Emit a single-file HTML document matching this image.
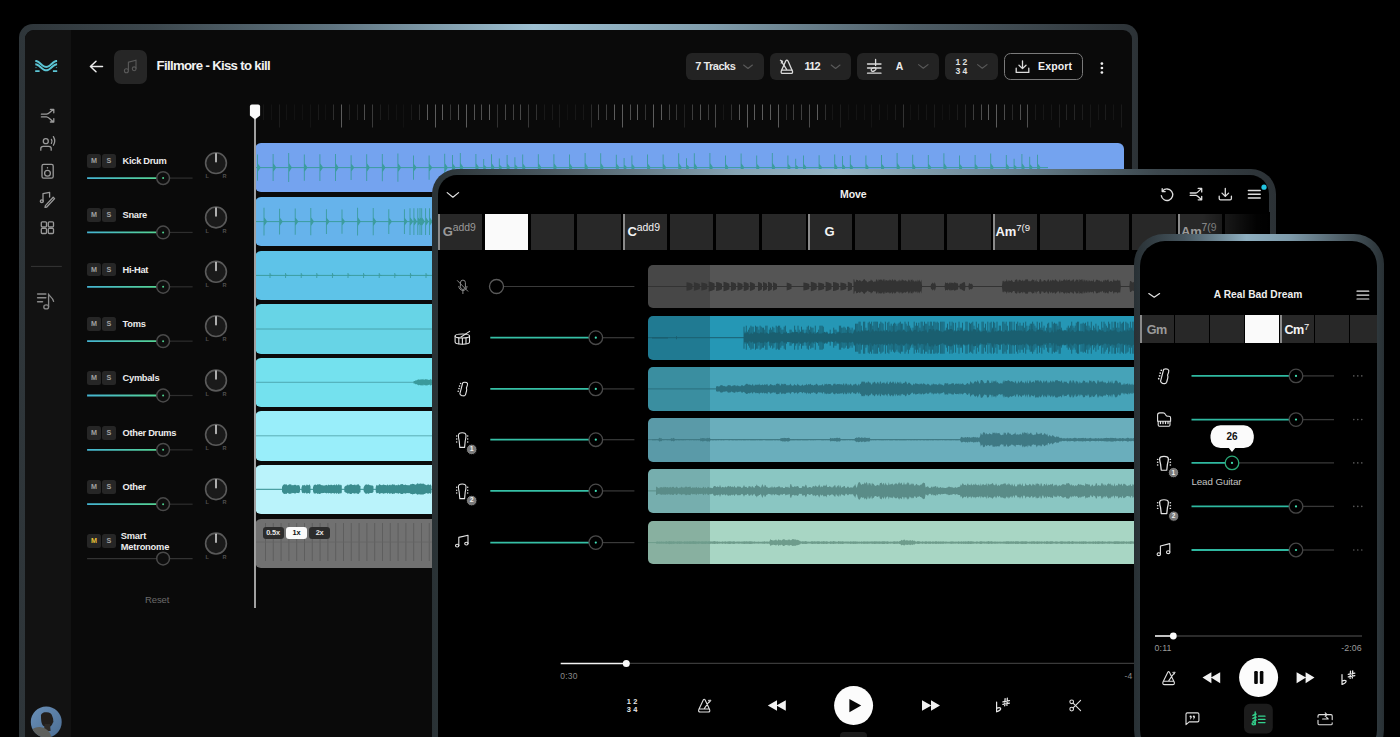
<!DOCTYPE html><html><head><meta charset="utf-8"><style>
*{margin:0;padding:0;box-sizing:border-box}
html,body{width:1400px;height:737px;overflow:hidden;background:#000;font-family:"Liberation Sans",sans-serif}
.a{position:absolute}
svg.s{position:absolute;left:0;top:0;overflow:visible}
</style></head><body>
<div class="a" style="left:19px;top:24px;width:1119px;height:760px;border-radius:14px;background:linear-gradient(90deg,#2e3539 0%,#3c474d 12%,#5f7480 28%,#9dc0d2 46%,#7f9cab 62%,#4d5c65 80%,#2c3236 100%)"></div>
<div class="a" style="left:25px;top:30px;width:1106.5px;height:760px;border-radius:9px;background:#0a0a0a"></div>
<div class="a" style="left:25px;top:30px;width:46px;height:760px;border-top-left-radius:9px;background:#121212"></div>
<svg class="s" width="1400" height="737" ><g fill="none" stroke="#5cc6d6" stroke-width="2" stroke-linecap="butt">
<path d="M35.30,60.90 L35.80,60.93 L36.29,61.02 L36.79,61.17 L37.28,61.38 L37.78,61.63 L38.27,61.94 L38.77,62.28 L39.26,62.65 L39.76,63.05 L40.25,63.47 L40.75,63.90 L41.25,64.33 L41.74,64.75 L42.24,65.15 L42.73,65.52 L43.23,65.86 L43.72,66.17 L44.22,66.42 L44.71,66.63 L45.21,66.78 L45.70,66.87 L46.20,66.90 L46.70,66.87 L47.19,66.78 L47.69,66.63 L48.18,66.42 L48.68,66.17 L49.17,65.86 L49.67,65.52 L50.16,65.15 L50.66,64.75 L51.15,64.33 L51.65,63.90 L52.15,63.47 L52.64,63.05 L53.14,62.65 L53.63,62.28 L54.13,61.94 L54.62,61.63 L55.12,61.38 L55.61,61.17 L56.11,61.02 L56.60,60.93 L57.10,60.90"/>
<path d="M35.30,64.30 L35.80,64.33 L36.29,64.42 L36.79,64.57 L37.28,64.78 L37.78,65.03 L38.27,65.34 L38.77,65.68 L39.26,66.05 L39.76,66.45 L40.25,66.87 L40.75,67.30 L41.25,67.73 L41.74,68.15 L42.24,68.55 L42.73,68.92 L43.23,69.26 L43.72,69.57 L44.22,69.82 L44.71,70.03 L45.21,70.18 L45.70,70.27 L46.20,70.30 L46.70,70.27 L47.19,70.18 L47.69,70.03 L48.18,69.82 L48.68,69.57 L49.17,69.26 L49.67,68.92 L50.16,68.55 L50.66,68.15 L51.15,67.73 L51.65,67.30 L52.15,66.87 L52.64,66.45 L53.14,66.05 L53.63,65.68 L54.13,65.34 L54.62,65.03 L55.12,64.78 L55.61,64.57 L56.11,64.42 L56.60,64.33 L57.10,64.30"/>
<path d="M35.2,71.2 H39.6 M52.9,71.2 H57.2" stroke-width="1.7"/>
<path d="M35.4,67.6 H36.6 M55.9,67.6 H57.1" stroke-width="1" stroke="#3d8c98"/>
</g>
<g fill="none" stroke="#9a9a9a" stroke-width="1.3" stroke-linecap="round" stroke-linejoin="round">
<path d="M41.4,114.2 H46.5 C49,114.2 50.5,111 53.6,109.4 M50.4,109.4 H53.8 V112.8"/>
<path d="M41.4,116.9 H46.5 C49,116.9 50.5,120.2 53.6,122 M50.4,122 H53.8 V118.6"/>
<circle cx="45.8" cy="141.2" r="2.5"/>
<path d="M40.8,150.2 V148.6 C40.8,147.3 41.8,146.4 43.2,146.4 H48.8 C50.2,146.4 51.2,147.3 51.2,148.6 V150.2"/>
<path d="M51.4,139.4 C52.2,140.6 52.2,142.2 51.4,143.4"/>
<path d="M53.4,136.6 C55,139.2 55,142.6 53.4,145.2"/>
<rect x="42" y="164.3" width="11.2" height="13.8" rx="1.6"/>
<circle cx="47.5" cy="173.2" r="2.9"/>
<path d="M47.5,167.6 V167.9"/>
<path d="M43,201 V193.6 L49.6,192.4 V197"/>
<ellipse cx="41.8" cy="201.2" rx="1.5" ry="1.3"/>
<path d="M45.4,205.6 L53.2,197.2 L54.6,198.6 L46.8,207 L45,207.4 Z"/>
<rect x="41.3" y="221.8" width="5.2" height="5.2" rx="1"/>
<rect x="48.3" y="221.8" width="5.2" height="5.2" rx="1"/>
<rect x="41.3" y="228.3" width="5.2" height="5.2" rx="1"/>
<rect x="48.3" y="228.3" width="5.2" height="5.2" rx="1"/>
</g>
<path d="M31,266.4 H61.8" stroke="#363636" stroke-width="1"/>
<g fill="none" stroke="#8a8a8a" stroke-width="1.5" stroke-linecap="round">
<path d="M37.6,293.9 H45.8 M37.6,297.8 H45.8 M37.6,301.7 H42.5"/>
<path d="M48.6,306.6 V294.5 C50.5,296.5 53,298.5 53.6,301.3" stroke-width="1.3"/>
<ellipse cx="46.2" cy="306.9" rx="2.4" ry="2" stroke-width="1.3"/>
</g></svg>
<svg class="s" width="1400" height="737" ><defs><clipPath id="avc"><circle cx="46.25" cy="722" r="15.45"/></clipPath>
<linearGradient id="avg" x1="0" y1="0" x2="1" y2="1"><stop offset="0" stop-color="#6a90b8"/><stop offset="1" stop-color="#4a6c92"/></linearGradient></defs>
<g clip-path="url(#avc)"><rect x="30" y="706" width="33" height="33" fill="url(#avg)"/>
<path d="M41,716.5 C40.6,713.6 43,712 46.2,712.2 C49.4,712 51.8,713.6 52.2,716 C52.8,717.6 53.4,719 53.2,720.4 C53.6,721.4 53.4,722.2 52.8,722.8 C52.4,724.6 51.2,726.4 49.4,727 C47.4,727.4 45,727 43.6,726 C41.8,724.6 41,722 41,716.5 Z" fill="#221e1b"/>
<path d="M44.6,724 H50 L50.6,731 H44 Z" fill="#2e2a26"/>
<path d="M32,730 C34,727.6 37.4,726.8 41,727.2 C44,727.6 46.6,729 48.4,731 C50,732.8 51,735 51.4,738 H32 Z" fill="#5e605d"/>
</g></svg>
<svg class="s" width="1400" height="737" ><g fill="none" stroke="#ececec" stroke-width="1.5" stroke-linecap="round" stroke-linejoin="round">
<path d="M90.4,66.5 H102.5 M96,61.2 L90.4,66.5 L96,71.8"/></g></svg>
<div class="a" style="left:113.9px;top:50px;width:32.8px;height:33.6px;border-radius:7px;background:#262626"></div>
<svg class="s" width="1400" height="737" ><g fill="none" stroke="#5a5a5a" stroke-width="1.1" stroke-linecap="round">
<path d="M128.4,70 V62.2 L136,60.2 V68.3"/><circle cx="126.4" cy="70.8" r="2"/><circle cx="134.2" cy="68.8" r="1.9"/></g></svg>
<div class="a" style="left:156.6px;top:58.3px;white-space:nowrap;font-size:13.2px;font-weight:bold;color:#f2f2f2;letter-spacing:-0.68px">Fillmore - Kiss to kill</div>
<div class="a" style="left:686px;top:52.6px;width:78px;height:27.8px;border-radius:6px;background:#232323"></div>
<div class="a" style="left:770px;top:52.6px;width:81px;height:27.8px;border-radius:6px;background:#232323"></div>
<div class="a" style="left:857px;top:52.6px;width:81.5px;height:27.8px;border-radius:6px;background:#232323"></div>
<div class="a" style="left:945px;top:52.6px;width:52.5px;height:27.8px;border-radius:6px;background:#232323"></div>
<div class="a" style="left:1004.1px;top:52.9px;width:79.3px;height:27.2px;border-radius:6.5px;border:1.4px solid #7a7a7a"></div>
<div class="a" style="left:695.3px;top:60.2px;white-space:nowrap;font-size:11px;font-weight:bold;color:#e8e8e8;letter-spacing:-0.5px">7 Tracks</div>
<div class="a" style="left:804.6px;top:60.2px;white-space:nowrap;font-size:11px;font-weight:bold;color:#ececec;letter-spacing:-0.9px">112</div>
<div class="a" style="left:895.8px;top:60.6px;white-space:nowrap;font-size:10.4px;font-weight:bold;color:#ececec">A</div>
<div class="a" style="left:1038px;top:60.4px;white-space:nowrap;font-size:10.5px;font-weight:bold;color:#f2f2f2;letter-spacing:0.15px">Export</div>
<div class="a" style="left:955.6px;top:58.2px;white-space:nowrap;font-size:8.6px;font-weight:bold;color:#e0e0e0;line-height:8px;letter-spacing:-0.1px">1 2</div>
<div class="a" style="left:955.6px;top:66.8px;white-space:nowrap;font-size:8.6px;font-weight:bold;color:#e0e0e0;line-height:8px;letter-spacing:-0.1px">3 4</div>
<svg class="s" width="1400" height="737" ><g fill="none" stroke="#5a5a5a" stroke-width="1.1" stroke-linecap="round" stroke-linejoin="round">
<path d="M743.6,65 L748,68.5 L752.4,65"/><path d="M831.2,65 L835.6,68.5 L840,65"/>
<path d="M918.6,64.6 L923.3,68.3 L928,64.6"/><path d="M977.6,64.6 L982.3,68.3 L987,64.6"/></g>
<g fill="none" stroke="#dcdcdc" stroke-width="1.3" stroke-linecap="round" stroke-linejoin="round">
<path d="M781.3,71 L785.7,61 Q786.85,59.2 788,61 L792.4,71 Q793.2,73.4 790.8,73.4 H782.9 Q780.5,73.4 781.3,71 Z"/><path d="M781.8,70.2 H791.9"/>
<path d="M786.6,69.4 L781.4,61.4"/><path d="M780.4,60.2 L782.6,61.2 L781.2,63" stroke-width="1.2"/>
<path d="M867.5,64 H881 M867.5,68 H881 M867.5,73.2 H881 M875.6,59.4 V65.6"/>
<path d="M1016.2,68.2 V72.4 H1028.8 V68.2 M1022.5,60.8 V68.4 M1019,65.3 L1022.5,68.6 L1026,65.3"/>
</g>
<ellipse cx="873.6" cy="69.4" rx="2.5" ry="1.6" transform="rotate(-25 873.6 69.4)" fill="none" stroke="#dcdcdc" stroke-width="1.2"/>
<g fill="#f0f0f0"><circle cx="1101.9" cy="63.6" r="1.35"/><circle cx="1101.9" cy="68" r="1.35"/><circle cx="1101.9" cy="72.5" r="1.35"/></g></svg>
<svg class="s" width="1400" height="737" ><g stroke-width="1" fill="none"><path d="M263.5,104.5 V120" stroke="#161616"/><path d="M271.5,104.5 V120" stroke="#131313"/><path d="M279.5,104.5 V127.5" stroke="#1c1c1c"/><path d="M286.5,104.5 V120" stroke="#141414"/><path d="M294.5,104.5 V120" stroke="#121212"/><path d="M302.5,104.5 V120" stroke="#121212"/><path d="M310.5,104.5 V127.5" stroke="#141414"/><path d="M318.5,104.5 V120" stroke="#1a1a1a"/><path d="M325.5,104.5 V120" stroke="#121212"/><path d="M333.5,104.5 V120" stroke="#2d2d2d"/><path d="M341.5,104.5 V127.5" stroke="#5c5c5c"/><path d="M349.5,104.5 V120" stroke="#222222"/><path d="M357.5,104.5 V120" stroke="#202020"/><path d="M364.5,104.5 V120" stroke="#4c4c4c"/><path d="M372.5,104.5 V127.5" stroke="#3a3a3a"/><path d="M380.5,104.5 V120" stroke="#1c1c1c"/><path d="M388.5,104.5 V120" stroke="#171717"/><path d="M396.5,104.5 V120" stroke="#131313"/><path d="M403.5,104.5 V127.5" stroke="#121212"/><path d="M411.5,104.5 V120" stroke="#191919"/><path d="M419.5,104.5 V120" stroke="#2a2a2a"/><path d="M427.5,104.5 V120" stroke="#5c5c5c"/><path d="M435.5,104.5 V127.5" stroke="#5c5c5c"/><path d="M442.5,104.5 V120" stroke="#5c5c5c"/><path d="M450.5,104.5 V120" stroke="#343434"/><path d="M458.5,104.5 V120" stroke="#565656"/><path d="M466.5,104.5 V127.5" stroke="#5c5c5c"/><path d="M474.5,104.5 V120" stroke="#525252"/><path d="M481.5,104.5 V120" stroke="#4d4d4d"/><path d="M489.5,104.5 V120" stroke="#5c5c5c"/><path d="M497.5,104.5 V127.5" stroke="#323232"/><path d="M505.5,104.5 V120" stroke="#464646"/><path d="M513.5,104.5 V120" stroke="#404040"/><path d="M520.5,104.5 V120" stroke="#484848"/><path d="M528.5,104.5 V127.5" stroke="#383838"/><path d="M536.5,104.5 V120" stroke="#313131"/><path d="M544.5,104.5 V120" stroke="#181818"/><path d="M552.5,104.5 V120" stroke="#1a1a1a"/><path d="M559.5,104.5 V127.5" stroke="#1a1a1a"/><path d="M567.5,104.5 V120" stroke="#121212"/><path d="M575.5,104.5 V120" stroke="#171717"/><path d="M583.5,104.5 V120" stroke="#171717"/><path d="M591.5,104.5 V127.5" stroke="#2a2a2a"/><path d="M598.5,104.5 V120" stroke="#464646"/><path d="M606.5,104.5 V120" stroke="#3d3d3d"/><path d="M614.5,104.5 V120" stroke="#5c5c5c"/><path d="M622.5,104.5 V127.5" stroke="#5c5c5c"/><path d="M630.5,104.5 V120" stroke="#4d4d4d"/><path d="M637.5,104.5 V120" stroke="#5c5c5c"/><path d="M645.5,104.5 V120" stroke="#333333"/><path d="M653.5,104.5 V127.5" stroke="#5c5c5c"/><path d="M661.5,104.5 V120" stroke="#5b5b5b"/><path d="M669.5,104.5 V120" stroke="#404040"/><path d="M676.5,104.5 V120" stroke="#363636"/><path d="M684.5,104.5 V127.5" stroke="#202020"/><path d="M692.5,104.5 V120" stroke="#3c3c3c"/><path d="M700.5,104.5 V120" stroke="#515151"/><path d="M708.5,104.5 V120" stroke="#3b3b3b"/><path d="M715.5,104.5 V127.5" stroke="#494949"/><path d="M723.5,104.5 V120" stroke="#171717"/><path d="M731.5,104.5 V120" stroke="#303030"/><path d="M739.5,104.5 V120" stroke="#565656"/><path d="M747.5,104.5 V127.5" stroke="#5c5c5c"/><path d="M754.5,104.5 V120" stroke="#5c5c5c"/><path d="M762.5,104.5 V120" stroke="#5c5c5c"/><path d="M770.5,104.5 V120" stroke="#5b5b5b"/><path d="M778.5,104.5 V127.5" stroke="#5c5c5c"/><path d="M786.5,104.5 V120" stroke="#2d2d2d"/><path d="M793.5,104.5 V120" stroke="#3c3c3c"/><path d="M801.5,104.5 V120" stroke="#3f3f3f"/><path d="M809.5,104.5 V127.5" stroke="#4b4b4b"/><path d="M817.5,104.5 V120" stroke="#5c5c5c"/><path d="M825.5,104.5 V120" stroke="#2e2e2e"/><path d="M832.5,104.5 V120" stroke="#161616"/><path d="M840.5,104.5 V127.5" stroke="#1c1c1c"/><path d="M848.5,104.5 V120" stroke="#121212"/><path d="M856.5,104.5 V120" stroke="#141414"/><path d="M864.5,104.5 V120" stroke="#131313"/><path d="M871.5,104.5 V127.5" stroke="#141414"/><path d="M879.5,104.5 V120" stroke="#161616"/><path d="M887.5,104.5 V120" stroke="#121212"/><path d="M895.5,104.5 V120" stroke="#1b1b1b"/><path d="M903.5,104.5 V127.5" stroke="#323232"/><path d="M910.5,104.5 V120" stroke="#131313"/><path d="M918.5,104.5 V120" stroke="#161616"/><path d="M926.5,104.5 V120" stroke="#161616"/><path d="M934.5,104.5 V127.5" stroke="#1a1a1a"/><path d="M942.5,104.5 V120" stroke="#121212"/><path d="M949.5,104.5 V120" stroke="#121212"/><path d="M957.5,104.5 V120" stroke="#1b1b1b"/><path d="M965.5,104.5 V127.5" stroke="#252525"/><path d="M973.5,104.5 V120" stroke="#3c3c3c"/><path d="M981.5,104.5 V120" stroke="#4c4c4c"/><path d="M988.5,104.5 V120" stroke="#5c5c5c"/><path d="M996.5,104.5 V127.5" stroke="#5c5c5c"/><path d="M1004.5,104.5 V120" stroke="#4b4b4b"/><path d="M1012.5,104.5 V120" stroke="#272727"/><path d="M1020.5,104.5 V120" stroke="#4e4e4e"/><path d="M1027.5,104.5 V127.5" stroke="#505050"/><path d="M1035.5,104.5 V120" stroke="#1a1a1a"/><path d="M1043.5,104.5 V120" stroke="#171717"/><path d="M1051.5,104.5 V120" stroke="#171717"/><path d="M1059.5,104.5 V127.5" stroke="#1e1e1e"/><path d="M1066.5,104.5 V120" stroke="#242424"/><path d="M1074.5,104.5 V120" stroke="#252525"/><path d="M1082.5,104.5 V120" stroke="#1d1d1d"/><path d="M1090.5,104.5 V127.5" stroke="#171717"/><path d="M1098.5,104.5 V120" stroke="#161616"/><path d="M1105.5,104.5 V120" stroke="#1c1c1c"/><path d="M1113.5,104.5 V120" stroke="#151515"/><path d="M1121.5,104.5 V127.5" stroke="#1a1a1a"/></g></svg>
<div class="a" style="left:255px;top:142.8px;width:869px;height:49.5px;border-radius:6px;background:#74a3ef"></div>
<div class="a" style="left:255px;top:196.8px;width:869px;height:49.5px;border-radius:6px;background:#66b3eb"></div>
<div class="a" style="left:255px;top:250.6px;width:869px;height:49.5px;border-radius:6px;background:#5ec3e8"></div>
<div class="a" style="left:255px;top:304.2px;width:869px;height:49.5px;border-radius:6px;background:#67d4e6"></div>
<div class="a" style="left:255px;top:357.5px;width:869px;height:49.5px;border-radius:6px;background:#74e1ee"></div>
<div class="a" style="left:255px;top:411px;width:869px;height:49.5px;border-radius:6px;background:#99eefa"></div>
<div class="a" style="left:255px;top:464.5px;width:869px;height:49.5px;border-radius:6px;background:#baf3fb"></div>
<div class="a" style="left:255px;top:518.5px;width:869px;height:49.5px;border-radius:6px;background:#717171"></div>
<svg class="s" width="1400" height="737" ><path d="M256,167.60000000000002 H1048" stroke="#3c9c9e" stroke-width="1"/><path d="M257.05,154.4 H257.95 V163.7 L260.7,167.60000000000002 L257.95,171.5 V180.8 H257.05 ZM272.65,154.1 H273.55 V163.6 L276.3,167.60000000000002 L273.55,171.6 V181.1 H272.65 ZM288.25,153.1 H289.15 V163.3 L291.9,167.60000000000002 L289.15,171.9 V182.1 H288.25 ZM303.85,154.4 H304.75 V163.6 L307.5,167.60000000000002 L304.75,171.6 V180.8 H303.85 ZM319.45,154.3 H320.35 V163.6 L323.1,167.60000000000002 L320.35,171.6 V180.9 H319.45 ZM335.05,154.1 H335.95 V163.5 L338.7,167.60000000000002 L335.95,171.7 V181.1 H335.05 ZM350.65,155.2 H351.55 V163.9 L354.3,167.60000000000002 L351.55,171.3 V180.0 H350.65 ZM366.25,154.3 H367.15 V163.6 L369.9,167.60000000000002 L367.15,171.6 V180.9 H366.25 ZM381.85,153.9 H382.75 V163.5 L385.5,167.60000000000002 L382.75,171.7 V181.3 H381.85 ZM397.45,153.5 H398.35 V163.4 L401.1,167.60000000000002 L398.35,171.8 V181.7 H397.45 ZM413.05,155.4 H413.95 V164.0 L416.7,167.60000000000002 L413.95,171.2 V179.8 H413.05 ZM428.65,155.4 H429.55 V164.0 L432.3,167.60000000000002 L429.55,171.2 V179.8 H428.65 ZM444.25,153.8 H445.15 V163.4 L447.9,167.60000000000002 L445.15,171.8 V181.4 H444.25 ZM452.05,155.1 H452.95 V163.8 L455.7,167.60000000000002 L452.95,171.4 V180.1 H452.05 ZM459.85,153.0 H460.75 V163.2 L463.5,167.60000000000002 L460.75,172.0 V182.2 H459.85 ZM475.45,154.0 H476.35 V163.5 L479.1,167.60000000000002 L476.35,171.7 V181.2 H475.45 ZM483.25,159.1 H484.15 V165.1 L486.9,167.60000000000002 L484.15,170.1 V176.1 H483.25 ZM491.05,154.2 H491.95 V163.6 L494.7,167.60000000000002 L491.95,171.6 V181.0 H491.05 ZM498.85,158.4 H499.75 V164.8 L502.5,167.60000000000002 L499.75,170.4 V176.8 H498.85 ZM506.65,155.0 H507.55 V163.8 L510.3,167.60000000000002 L507.55,171.4 V180.2 H506.65 ZM514.45,157.3 H515.35 V164.5 L518.1,167.60000000000002 L515.35,170.7 V177.9 H514.45 ZM522.25,154.5 H523.15 V163.7 L525.9,167.60000000000002 L523.15,171.5 V180.7 H522.25 ZM537.85,154.2 H538.75 V163.6 L541.5,167.60000000000002 L538.75,171.6 V181.0 H537.85 ZM553.45,154.3 H554.35 V163.6 L557.1,167.60000000000002 L554.35,171.6 V180.9 H553.45 ZM569.05,154.4 H569.95 V163.6 L572.7,167.60000000000002 L569.95,171.6 V180.8 H569.05 ZM584.65,152.9 H585.55 V163.2 L588.3,167.60000000000002 L585.55,172.0 V182.3 H584.65 ZM600.25,153.3 H601.15 V163.3 L603.9,167.60000000000002 L601.15,171.9 V181.9 H600.25 ZM615.85,154.8 H616.75 V163.8 L619.5,167.60000000000002 L616.75,171.4 V180.4 H615.85 ZM623.65,158.0 H624.55 V164.7 L627.3,167.60000000000002 L624.55,170.5 V177.2 H623.65 ZM631.45,155.5 H632.35 V164.0 L635.1,167.60000000000002 L632.35,171.2 V179.7 H631.45 ZM647.05,154.6 H647.95 V163.7 L650.7,167.60000000000002 L647.95,171.5 V180.6 H647.05 ZM662.65,154.6 H663.55 V163.7 L666.3,167.60000000000002 L663.55,171.5 V180.6 H662.65 ZM678.25,153.3 H679.15 V163.3 L681.9,167.60000000000002 L679.15,171.9 V181.9 H678.25 ZM686.05,158.3 H686.95 V164.8 L689.7,167.60000000000002 L686.95,170.4 V176.9 H686.05 ZM693.85,153.2 H694.75 V163.3 L697.5,167.60000000000002 L694.75,171.9 V182.0 H693.85 ZM709.45,153.0 H710.35 V163.2 L713.1,167.60000000000002 L710.35,172.0 V182.2 H709.45 ZM725.05,155.5 H725.95 V164.0 L728.7,167.60000000000002 L725.95,171.2 V179.7 H725.05 ZM740.65,153.5 H741.55 V163.4 L744.3,167.60000000000002 L741.55,171.8 V181.7 H740.65 ZM756.25,155.5 H757.15 V164.0 L759.9,167.60000000000002 L757.15,171.2 V179.7 H756.25 ZM771.85,153.0 H772.75 V163.2 L775.5,167.60000000000002 L772.75,172.0 V182.2 H771.85 ZM787.45,155.4 H788.35 V163.9 L791.1,167.60000000000002 L788.35,171.3 V179.8 H787.45 ZM795.25,158.8 H796.15 V165.0 L798.9,167.60000000000002 L796.15,170.2 V176.4 H795.25 ZM803.05,155.5 H803.95 V164.0 L806.7,167.60000000000002 L803.95,171.2 V179.7 H803.05 ZM818.65,155.2 H819.55 V163.9 L822.3,167.60000000000002 L819.55,171.3 V180.0 H818.65 ZM834.25,154.4 H835.15 V163.7 L837.9,167.60000000000002 L835.15,171.5 V180.8 H834.25 ZM842.05,156.1 H842.95 V164.2 L845.7,167.60000000000002 L842.95,171.0 V179.1 H842.05 ZM849.85,155.3 H850.75 V163.9 L853.5,167.60000000000002 L850.75,171.3 V179.9 H849.85 ZM865.45,155.4 H866.35 V163.9 L869.1,167.60000000000002 L866.35,171.3 V179.8 H865.45 ZM881.05,155.1 H881.95 V163.9 L884.7,167.60000000000002 L881.95,171.3 V180.1 H881.05 ZM896.65,153.0 H897.55 V163.2 L900.3,167.60000000000002 L897.55,172.0 V182.2 H896.65 ZM912.25,154.8 H913.15 V163.8 L915.9,167.60000000000002 L913.15,171.4 V180.4 H912.25 ZM927.85,155.1 H928.75 V163.9 L931.5,167.60000000000002 L928.75,171.3 V180.1 H927.85 ZM943.45,153.3 H944.35 V163.3 L947.1,167.60000000000002 L944.35,171.9 V181.9 H943.45 ZM959.05,155.4 H959.95 V163.9 L962.7,167.60000000000002 L959.95,171.3 V179.8 H959.05 ZM974.65,155.1 H975.55 V163.9 L978.3,167.60000000000002 L975.55,171.3 V180.1 H974.65 ZM990.25,153.5 H991.15 V163.4 L993.9,167.60000000000002 L991.15,171.8 V181.7 H990.25 ZM1005.85,154.9 H1006.75 V163.8 L1009.5,167.60000000000002 L1006.75,171.4 V180.3 H1005.85 ZM1013.65,158.8 H1014.55 V165.0 L1017.3,167.60000000000002 L1014.55,170.2 V176.4 H1013.65 ZM1021.45,154.1 H1022.35 V163.5 L1025.1,167.60000000000002 L1022.35,171.7 V181.1 H1021.45 ZM1029.25,156.7 H1030.15 V164.3 L1032.9,167.60000000000002 L1030.15,170.9 V178.5 H1029.25 ZM1037.05,154.7 H1037.95 V163.7 L1040.7,167.60000000000002 L1037.95,171.5 V180.5 H1037.05 Z" fill="#3c9c9e"/><path d="M256,221.60000000000002 H432" stroke="#3c9c9e" stroke-width="1"/><path d="M263.55,207.7 H264.45 V217.4 L267.2,221.60000000000002 L264.45,225.8 V235.5 H263.55 ZM279.15,208.7 H280.05 V217.7 L282.8,221.60000000000002 L280.05,225.5 V234.5 H279.15 ZM294.75,208.5 H295.65 V217.7 L298.4,221.60000000000002 L295.65,225.5 V234.7 H294.75 ZM310.35,207.9 H311.25 V217.5 L314.0,221.60000000000002 L311.25,225.7 V235.3 H310.35 ZM325.95,209.3 H326.85 V217.9 L329.6,221.60000000000002 L326.85,225.3 V233.9 H325.95 ZM341.55,209.4 H342.45 V217.9 L345.2,221.60000000000002 L342.45,225.3 V233.8 H341.55 ZM357.15,207.8 H358.05 V217.5 L360.8,221.60000000000002 L358.05,225.7 V235.4 H357.15 ZM372.75,208.0 H373.65 V217.5 L376.4,221.60000000000002 L373.65,225.7 V235.2 H372.75 ZM388.35,209.2 H389.25 V217.9 L392.0,221.60000000000002 L389.25,225.3 V234.0 H388.35 ZM403.95,209.3 H404.85 V217.9 L407.6,221.60000000000002 L404.85,225.3 V233.9 H403.95 ZM419.55,208.1 H420.45 V217.6 L423.2,221.60000000000002 L420.45,225.6 V235.1 H419.55 ZM409.55,208.3 H410.45 V217.6 L413.2,221.60000000000002 L410.45,225.6 V234.9 H409.55 ZM413.45,208.3 H414.35 V217.6 L417.1,221.60000000000002 L414.35,225.6 V234.9 H413.45 ZM417.35,208.3 H418.25 V217.6 L421.0,221.60000000000002 L418.25,225.6 V234.9 H417.35 ZM421.25,208.3 H422.15 V217.6 L424.9,221.60000000000002 L422.15,225.6 V234.9 H421.25 ZM425.15,208.3 H426.05 V217.6 L428.8,221.60000000000002 L426.05,225.6 V234.9 H425.15 ZM429.05,208.3 H429.95 V217.6 L432.7,221.60000000000002 L429.95,225.6 V234.9 H429.05 Z" fill="#3c9c9e"/><path d="M256,275.4 H432" stroke="#3c9c9e" stroke-width="1"/><path d="M269.55,272.9 H270.45 V274.6 L273.2,275.4 L270.45,276.1 V277.9 H269.55 ZM285.15,272.9 H286.05 V274.6 L288.8,275.4 L286.05,276.1 V277.9 H285.15 ZM300.75,272.9 H301.65 V274.6 L304.4,275.4 L301.65,276.1 V277.9 H300.75 ZM316.35,272.9 H317.25 V274.6 L320.0,275.4 L317.25,276.1 V277.9 H316.35 ZM331.95,272.9 H332.85 V274.6 L335.6,275.4 L332.85,276.1 V277.9 H331.95 ZM347.55,272.9 H348.45 V274.6 L351.2,275.4 L348.45,276.1 V277.9 H347.55 ZM363.15,272.9 H364.05 V274.6 L366.8,275.4 L364.05,276.1 V277.9 H363.15 ZM378.75,272.9 H379.65 V274.6 L382.4,275.4 L379.65,276.1 V277.9 H378.75 ZM394.35,272.9 H395.25 V274.6 L398.0,275.4 L395.25,276.1 V277.9 H394.35 ZM409.95,272.9 H410.85 V274.6 L413.6,275.4 L410.85,276.1 V277.9 H409.95 ZM425.55,272.9 H426.45 V274.6 L429.2,275.4 L426.45,276.1 V277.9 H425.55 Z" fill="#3c9c9e"/><path d="M256,329.0 H432" stroke="#3a8a90" stroke-width="0.8" opacity="0.8"/><path d="M256,382.3 H432" stroke="#3a8a90" stroke-width="0.8" opacity="0.8"/><path d="M256,435.8 H432" stroke="#3a8a90" stroke-width="0.8" opacity="0.8"/><path d="M413.5,381.2 L413.5,381.2 L414.3,381.1 L415.1,380.9 L415.9,380.1 L416.7,380.5 L417.5,379.8 L418.3,379.4 L419.1,379.3 L419.9,379.9 L420.7,379.2 L421.5,379.4 L422.3,378.9 L423.1,380.1 L423.9,378.8 L424.7,379.9 L425.5,379.0 L426.3,379.4 L427.1,378.9 L427.9,379.9 L428.7,379.7 L429.5,380.0 L430.3,379.0 L431.1,379.4 L431.9,379.8 L431.9,384.8 L431.1,385.2 L430.3,385.6 L429.5,384.6 L428.7,384.9 L427.9,384.7 L427.1,385.7 L426.3,385.2 L425.5,385.6 L424.7,384.7 L423.9,385.8 L423.1,384.5 L422.3,385.7 L421.5,385.2 L420.7,385.4 L419.9,384.7 L419.1,385.3 L418.3,385.2 L417.5,384.8 L416.7,384.1 L415.9,384.5 L415.1,383.7 L414.3,383.5 L413.5,383.4 Z" fill="#3a9a9c"/><path d="M256,489.3 H432" stroke="#2f8a8c" stroke-width="1"/><path d="M282.0,487.0 L282.0,487.0 L282.9,485.2 L283.8,484.4 L284.7,484.2 L285.6,484.5 L286.5,484.2 L287.4,485.6 L288.3,484.9 L289.2,484.2 L290.1,484.6 L291.0,484.3 L291.9,485.5 L292.8,484.9 L293.7,485.3 L294.6,484.8 L295.5,484.8 L296.4,485.6 L297.3,485.3 L298.2,485.2 L299.1,484.9 L300.0,486.9 L300.0,491.5 L299.1,493.3 L298.2,493.0 L297.3,493.0 L296.4,492.7 L295.5,493.5 L294.6,493.4 L293.7,493.0 L292.8,493.3 L291.9,492.8 L291.0,493.9 L290.1,493.6 L289.2,494.0 L288.3,493.3 L287.4,492.7 L286.5,494.0 L285.6,493.7 L284.7,494.0 L283.8,493.8 L282.9,493.1 L282.0,491.4 Z" fill="#3a8c8e"/><path d="M301.5,487.4 L301.5,487.4 L302.4,485.1 L303.3,485.4 L304.2,484.7 L305.1,485.5 L306.0,485.7 L306.9,484.3 L307.8,485.3 L308.7,485.3 L309.6,484.2 L310.5,486.2 L310.5,492.2 L309.6,494.0 L308.7,493.0 L307.8,492.9 L306.9,493.9 L306.0,492.7 L305.1,492.8 L304.2,493.5 L303.3,492.8 L302.4,493.2 L301.5,491.1 Z" fill="#3a8c8e"/><path d="M313.0,487.3 L313.0,487.3 L313.9,484.9 L314.8,484.8 L315.7,484.6 L316.6,485.3 L317.5,484.2 L318.4,484.6 L319.3,484.2 L320.2,484.3 L321.1,485.2 L322.0,485.1 L322.9,485.4 L323.8,485.4 L324.7,485.6 L325.6,485.2 L326.5,484.7 L327.4,485.7 L328.3,484.6 L329.2,485.1 L330.1,485.2 L331.0,484.4 L331.9,484.9 L332.8,485.2 L333.7,484.9 L334.6,484.6 L335.5,485.6 L336.4,484.1 L337.3,485.6 L338.2,484.5 L339.1,484.3 L340.0,485.6 L340.9,484.4 L341.8,485.8 L341.8,492.5 L340.9,493.8 L340.0,492.7 L339.1,493.9 L338.2,493.7 L337.3,492.7 L336.4,494.0 L335.5,492.7 L334.6,493.7 L333.7,493.3 L332.8,493.1 L331.9,493.3 L331.0,493.8 L330.1,493.1 L329.2,493.1 L328.3,493.6 L327.4,492.7 L326.5,493.5 L325.6,493.1 L324.7,492.7 L323.8,492.9 L322.9,492.9 L322.0,493.2 L321.1,493.1 L320.2,493.9 L319.3,494.0 L318.4,493.6 L317.5,494.0 L316.6,492.9 L315.7,493.6 L314.8,493.4 L313.9,493.4 L313.0,491.2 Z" fill="#3a8c8e"/><path d="M344.3,487.0 L344.3,487.0 L345.2,486.2 L346.1,485.6 L347.0,485.4 L347.9,484.2 L348.8,485.4 L349.7,484.5 L350.6,484.2 L351.5,484.2 L352.4,485.1 L353.3,485.1 L354.2,484.8 L355.1,484.5 L356.0,485.5 L356.9,484.5 L357.8,484.4 L358.7,484.3 L359.6,485.7 L360.5,486.1 L360.5,492.2 L359.6,492.6 L358.7,493.9 L357.8,493.8 L356.9,493.7 L356.0,492.8 L355.1,493.8 L354.2,493.4 L353.3,493.2 L352.4,493.1 L351.5,494.0 L350.6,494.0 L349.7,493.7 L348.8,492.9 L347.9,494.0 L347.0,492.9 L346.1,492.7 L345.2,492.2 L344.3,491.4 Z" fill="#3a8c8e"/><path d="M363.6,487.4 L363.6,487.4 L364.5,485.7 L365.4,484.7 L366.3,484.2 L367.2,485.1 L368.1,484.2 L369.0,484.8 L369.9,485.2 L370.8,485.2 L371.7,485.4 L372.6,485.5 L373.5,486.6 L373.5,491.8 L372.6,492.8 L371.7,492.9 L370.8,493.1 L369.9,493.1 L369.0,493.4 L368.1,494.0 L367.2,493.1 L366.3,494.0 L365.4,493.5 L364.5,492.6 L363.6,491.0 Z" fill="#3a8c8e"/><path d="M375.7,486.9 L375.7,486.9 L376.6,484.8 L377.5,485.4 L378.4,485.6 L379.3,484.1 L380.2,484.8 L381.1,485.0 L382.0,485.3 L382.9,484.7 L383.8,484.4 L384.7,484.9 L385.6,485.0 L386.5,485.6 L387.4,484.2 L388.3,485.6 L389.2,484.9 L390.1,484.4 L391.0,485.5 L391.9,484.5 L392.8,484.2 L393.7,484.7 L394.6,484.4 L395.5,485.5 L396.4,485.0 L397.3,485.4 L398.2,484.3 L399.1,485.2 L400.0,485.0 L400.9,484.1 L401.8,484.3 L402.7,484.1 L403.6,485.0 L404.5,484.9 L405.4,484.5 L406.3,484.9 L407.2,485.2 L408.1,485.0 L409.0,485.4 L409.9,485.1 L410.8,484.1 L411.7,484.2 L412.6,483.8 L413.5,484.0 L414.4,484.3 L415.3,484.8 L416.2,484.5 L417.1,483.5 L418.0,483.3 L418.9,484.3 L419.8,483.5 L420.7,483.5 L421.6,483.7 L422.5,483.7 L423.4,483.5 L424.3,484.3 L425.2,484.6 L426.1,485.2 L427.0,484.9 L427.9,484.5 L428.8,484.6 L429.7,485.2 L430.6,484.2 L431.5,486.0 L431.5,492.3 L430.6,494.0 L429.7,493.1 L428.8,493.6 L427.9,493.8 L427.0,493.3 L426.1,493.1 L425.2,493.7 L424.3,493.9 L423.4,494.6 L422.5,494.4 L421.6,494.5 L420.7,494.6 L419.8,494.6 L418.9,493.9 L418.0,494.8 L417.1,494.6 L416.2,493.8 L415.3,493.4 L414.4,493.9 L413.5,494.1 L412.6,494.4 L411.7,494.0 L410.8,494.1 L409.9,493.2 L409.0,492.9 L408.1,493.2 L407.2,493.1 L406.3,493.3 L405.4,493.7 L404.5,493.3 L403.6,493.3 L402.7,494.0 L401.8,493.9 L400.9,494.1 L400.0,493.3 L399.1,493.1 L398.2,493.9 L397.3,492.9 L396.4,493.3 L395.5,492.8 L394.6,493.8 L393.7,493.6 L392.8,494.0 L391.9,493.7 L391.0,492.8 L390.1,493.9 L389.2,493.4 L388.3,492.7 L387.4,494.0 L386.5,492.7 L385.6,493.3 L384.7,493.3 L383.8,493.8 L382.9,493.5 L382.0,493.0 L381.1,493.2 L380.2,493.4 L379.3,494.1 L378.4,492.7 L377.5,492.9 L376.6,493.4 L375.7,491.5 Z" fill="#3a8c8e"/></svg>
<svg class="s" width="1400" height="737" ><path d="M265.5,523 V561M273.3,523 V561M281.1,523 V561M288.9,523 V561M296.7,523 V561M304.5,523 V561M312.3,523 V561M320.1,523 V561M327.9,523 V561M335.7,523 V561M343.5,523 V561M351.3,523 V561M359.1,523 V561M366.9,523 V561M374.7,523 V561M382.5,523 V561M390.3,523 V561M398.1,523 V561M405.9,523 V561M413.7,523 V561M421.5,523 V561M429.3,523 V561" stroke="#5c5c5c" stroke-width="0.9"/><path d="M256,542 H432" stroke="#646464" stroke-width="0.8"/></svg>
<div class="a" style="left:262.5px;top:527px;width:21px;height:11.8px;border-radius:3px;background:#2c2c2c;color:#e8e8e8;font-size:7.4px;font-weight:bold;line-height:12px;text-align:center;letter-spacing:-0.2px">0.5x</div>
<div class="a" style="left:285.9px;top:527px;width:21.1px;height:11.8px;border-radius:3px;background:#fafafa;color:#111;font-size:7.4px;font-weight:bold;line-height:12px;text-align:center;letter-spacing:-0.2px">1x</div>
<div class="a" style="left:309.3px;top:527px;width:20.6px;height:11.8px;border-radius:3px;background:#2c2c2c;color:#e8e8e8;font-size:7.4px;font-weight:bold;line-height:12px;text-align:center;letter-spacing:-0.2px">2x</div>
<div class="a" style="left:254.1px;top:119px;width:1.5px;height:489px;background:#a0a0a0"></div>
<svg class="s" width="1400" height="737" ><path d="M249.9,106.5 Q249.9,104.6 251.8,104.6 H258.2 Q260.1,104.6 260.1,106.5 V115.6 L255,119.6 L249.9,115.6 Z" fill="#fafafa"/></svg>
<div class="a" style="left:87.1px;top:154.0px;width:13.7px;height:13.8px;border-radius:2.5px;background:#262626"></div>
<div class="a" style="left:102.2px;top:154.0px;width:13.5px;height:13.8px;border-radius:2.5px;background:#262626"></div>
<div class="a" style="left:87.1px;top:154.0px;width:13.7px;height:13.8px;font-size:7.2px;font-weight:bold;color:#a0a0a0;text-align:center;line-height:14px">M</div>
<div class="a" style="left:102.2px;top:154.0px;width:13.5px;height:13.8px;font-size:7.2px;font-weight:bold;color:#a0a0a0;text-align:center;line-height:14px">S</div>
<div class="a" style="left:122.6px;top:155.9px;white-space:nowrap;font-size:9.3px;font-weight:bold;color:#ececec;letter-spacing:-0.3px">Kick Drum</div>
<svg class="s" width="1400" height="737" ><defs><linearGradient id="sg0" x1="87" x2="157" gradientUnits="userSpaceOnUse"><stop offset="0" stop-color="#45b4d2"/><stop offset="1" stop-color="#55d494"/></linearGradient></defs><path d="M87.1,178.1 H157" stroke="url(#sg0)" stroke-width="1.8"/><path d="M169,178.1 H192.6" stroke="#2e2e2e" stroke-width="1.2"/></svg>
<svg class="s" width="1400" height="737" ><circle cx="163.1" cy="178.1" r="6.4" fill="#0e0e0e" stroke="#4a4a4a" stroke-width="1.5"/><circle cx="163.1" cy="178.1" r="1" fill="#4ed08e"/></svg>
<svg class="s" width="1400" height="737" ><circle cx="216" cy="163.1" r="10.4" fill="#1a1a1a" stroke="#5a5a5a" stroke-width="1.6"/><path d="M216,153.7 V161.7" stroke="#e0e0e0" stroke-width="1.5" stroke-linecap="round"/></svg>
<div class="a" style="left:205.6px;top:173.29999999999998px;font-size:5.6px;font-weight:bold;color:#505050;white-space:nowrap">L<span style="margin-left:13.4px">R</span></div>
<div class="a" style="left:87.1px;top:208.35px;width:13.7px;height:13.8px;border-radius:2.5px;background:#262626"></div>
<div class="a" style="left:102.2px;top:208.35px;width:13.5px;height:13.8px;border-radius:2.5px;background:#262626"></div>
<div class="a" style="left:87.1px;top:208.35px;width:13.7px;height:13.8px;font-size:7.2px;font-weight:bold;color:#a0a0a0;text-align:center;line-height:14px">M</div>
<div class="a" style="left:102.2px;top:208.35px;width:13.5px;height:13.8px;font-size:7.2px;font-weight:bold;color:#a0a0a0;text-align:center;line-height:14px">S</div>
<div class="a" style="left:122.6px;top:210.25px;white-space:nowrap;font-size:9.3px;font-weight:bold;color:#ececec;letter-spacing:-0.3px">Snare</div>
<svg class="s" width="1400" height="737" ><defs><linearGradient id="sg1" x1="87" x2="157" gradientUnits="userSpaceOnUse"><stop offset="0" stop-color="#45b4d2"/><stop offset="1" stop-color="#55d494"/></linearGradient></defs><path d="M87.1,232.45 H157" stroke="url(#sg1)" stroke-width="1.8"/><path d="M169,232.45 H192.6" stroke="#2e2e2e" stroke-width="1.2"/></svg>
<svg class="s" width="1400" height="737" ><circle cx="163.1" cy="232.45" r="6.4" fill="#0e0e0e" stroke="#4a4a4a" stroke-width="1.5"/><circle cx="163.1" cy="232.45" r="1" fill="#4ed08e"/></svg>
<svg class="s" width="1400" height="737" ><circle cx="216" cy="217.45" r="10.4" fill="#1a1a1a" stroke="#5a5a5a" stroke-width="1.6"/><path d="M216,208.04999999999998 V216.04999999999998" stroke="#e0e0e0" stroke-width="1.5" stroke-linecap="round"/></svg>
<div class="a" style="left:205.6px;top:227.64999999999998px;font-size:5.6px;font-weight:bold;color:#505050;white-space:nowrap">L<span style="margin-left:13.4px">R</span></div>
<div class="a" style="left:87.1px;top:262.7px;width:13.7px;height:13.8px;border-radius:2.5px;background:#262626"></div>
<div class="a" style="left:102.2px;top:262.7px;width:13.5px;height:13.8px;border-radius:2.5px;background:#262626"></div>
<div class="a" style="left:87.1px;top:262.7px;width:13.7px;height:13.8px;font-size:7.2px;font-weight:bold;color:#a0a0a0;text-align:center;line-height:14px">M</div>
<div class="a" style="left:102.2px;top:262.7px;width:13.5px;height:13.8px;font-size:7.2px;font-weight:bold;color:#a0a0a0;text-align:center;line-height:14px">S</div>
<div class="a" style="left:122.6px;top:264.59999999999997px;white-space:nowrap;font-size:9.3px;font-weight:bold;color:#ececec;letter-spacing:-0.3px">Hi-Hat</div>
<svg class="s" width="1400" height="737" ><defs><linearGradient id="sg2" x1="87" x2="157" gradientUnits="userSpaceOnUse"><stop offset="0" stop-color="#45b4d2"/><stop offset="1" stop-color="#55d494"/></linearGradient></defs><path d="M87.1,286.8 H157" stroke="url(#sg2)" stroke-width="1.8"/><path d="M169,286.8 H192.6" stroke="#2e2e2e" stroke-width="1.2"/></svg>
<svg class="s" width="1400" height="737" ><circle cx="163.1" cy="286.8" r="6.4" fill="#0e0e0e" stroke="#4a4a4a" stroke-width="1.5"/><circle cx="163.1" cy="286.8" r="1" fill="#4ed08e"/></svg>
<svg class="s" width="1400" height="737" ><circle cx="216" cy="271.8" r="10.4" fill="#1a1a1a" stroke="#5a5a5a" stroke-width="1.6"/><path d="M216,262.40000000000003 V270.40000000000003" stroke="#e0e0e0" stroke-width="1.5" stroke-linecap="round"/></svg>
<div class="a" style="left:205.6px;top:282.0px;font-size:5.6px;font-weight:bold;color:#505050;white-space:nowrap">L<span style="margin-left:13.4px">R</span></div>
<div class="a" style="left:87.1px;top:317.05px;width:13.7px;height:13.8px;border-radius:2.5px;background:#262626"></div>
<div class="a" style="left:102.2px;top:317.05px;width:13.5px;height:13.8px;border-radius:2.5px;background:#262626"></div>
<div class="a" style="left:87.1px;top:317.05px;width:13.7px;height:13.8px;font-size:7.2px;font-weight:bold;color:#a0a0a0;text-align:center;line-height:14px">M</div>
<div class="a" style="left:102.2px;top:317.05px;width:13.5px;height:13.8px;font-size:7.2px;font-weight:bold;color:#a0a0a0;text-align:center;line-height:14px">S</div>
<div class="a" style="left:122.6px;top:318.95px;white-space:nowrap;font-size:9.3px;font-weight:bold;color:#ececec;letter-spacing:-0.3px">Toms</div>
<svg class="s" width="1400" height="737" ><defs><linearGradient id="sg3" x1="87" x2="157" gradientUnits="userSpaceOnUse"><stop offset="0" stop-color="#45b4d2"/><stop offset="1" stop-color="#55d494"/></linearGradient></defs><path d="M87.1,341.15000000000003 H157" stroke="url(#sg3)" stroke-width="1.8"/><path d="M169,341.15000000000003 H192.6" stroke="#2e2e2e" stroke-width="1.2"/></svg>
<svg class="s" width="1400" height="737" ><circle cx="163.1" cy="341.15000000000003" r="6.4" fill="#0e0e0e" stroke="#4a4a4a" stroke-width="1.5"/><circle cx="163.1" cy="341.15000000000003" r="1" fill="#4ed08e"/></svg>
<svg class="s" width="1400" height="737" ><circle cx="216" cy="326.15000000000003" r="10.4" fill="#1a1a1a" stroke="#5a5a5a" stroke-width="1.6"/><path d="M216,316.75000000000006 V324.75000000000006" stroke="#e0e0e0" stroke-width="1.5" stroke-linecap="round"/></svg>
<div class="a" style="left:205.6px;top:336.35px;font-size:5.6px;font-weight:bold;color:#505050;white-space:nowrap">L<span style="margin-left:13.4px">R</span></div>
<div class="a" style="left:87.1px;top:371.4px;width:13.7px;height:13.8px;border-radius:2.5px;background:#262626"></div>
<div class="a" style="left:102.2px;top:371.4px;width:13.5px;height:13.8px;border-radius:2.5px;background:#262626"></div>
<div class="a" style="left:87.1px;top:371.4px;width:13.7px;height:13.8px;font-size:7.2px;font-weight:bold;color:#a0a0a0;text-align:center;line-height:14px">M</div>
<div class="a" style="left:102.2px;top:371.4px;width:13.5px;height:13.8px;font-size:7.2px;font-weight:bold;color:#a0a0a0;text-align:center;line-height:14px">S</div>
<div class="a" style="left:122.6px;top:373.29999999999995px;white-space:nowrap;font-size:9.3px;font-weight:bold;color:#ececec;letter-spacing:-0.3px">Cymbals</div>
<svg class="s" width="1400" height="737" ><defs><linearGradient id="sg4" x1="87" x2="157" gradientUnits="userSpaceOnUse"><stop offset="0" stop-color="#45b4d2"/><stop offset="1" stop-color="#55d494"/></linearGradient></defs><path d="M87.1,395.5 H157" stroke="url(#sg4)" stroke-width="1.8"/><path d="M169,395.5 H192.6" stroke="#2e2e2e" stroke-width="1.2"/></svg>
<svg class="s" width="1400" height="737" ><circle cx="163.1" cy="395.5" r="6.4" fill="#0e0e0e" stroke="#4a4a4a" stroke-width="1.5"/><circle cx="163.1" cy="395.5" r="1" fill="#4ed08e"/></svg>
<svg class="s" width="1400" height="737" ><circle cx="216" cy="380.5" r="10.4" fill="#1a1a1a" stroke="#5a5a5a" stroke-width="1.6"/><path d="M216,371.1 V379.1" stroke="#e0e0e0" stroke-width="1.5" stroke-linecap="round"/></svg>
<div class="a" style="left:205.6px;top:390.7px;font-size:5.6px;font-weight:bold;color:#505050;white-space:nowrap">L<span style="margin-left:13.4px">R</span></div>
<div class="a" style="left:87.1px;top:425.75px;width:13.7px;height:13.8px;border-radius:2.5px;background:#262626"></div>
<div class="a" style="left:102.2px;top:425.75px;width:13.5px;height:13.8px;border-radius:2.5px;background:#262626"></div>
<div class="a" style="left:87.1px;top:425.75px;width:13.7px;height:13.8px;font-size:7.2px;font-weight:bold;color:#a0a0a0;text-align:center;line-height:14px">M</div>
<div class="a" style="left:102.2px;top:425.75px;width:13.5px;height:13.8px;font-size:7.2px;font-weight:bold;color:#a0a0a0;text-align:center;line-height:14px">S</div>
<div class="a" style="left:122.6px;top:427.65px;white-space:nowrap;font-size:9.3px;font-weight:bold;color:#ececec;letter-spacing:-0.3px">Other Drums</div>
<svg class="s" width="1400" height="737" ><defs><linearGradient id="sg5" x1="87" x2="157" gradientUnits="userSpaceOnUse"><stop offset="0" stop-color="#45b4d2"/><stop offset="1" stop-color="#55d494"/></linearGradient></defs><path d="M87.1,449.85 H157" stroke="url(#sg5)" stroke-width="1.8"/><path d="M169,449.85 H192.6" stroke="#2e2e2e" stroke-width="1.2"/></svg>
<svg class="s" width="1400" height="737" ><circle cx="163.1" cy="449.85" r="6.4" fill="#0e0e0e" stroke="#4a4a4a" stroke-width="1.5"/><circle cx="163.1" cy="449.85" r="1" fill="#4ed08e"/></svg>
<svg class="s" width="1400" height="737" ><circle cx="216" cy="434.85" r="10.4" fill="#1a1a1a" stroke="#5a5a5a" stroke-width="1.6"/><path d="M216,425.45000000000005 V433.45000000000005" stroke="#e0e0e0" stroke-width="1.5" stroke-linecap="round"/></svg>
<div class="a" style="left:205.6px;top:445.05px;font-size:5.6px;font-weight:bold;color:#505050;white-space:nowrap">L<span style="margin-left:13.4px">R</span></div>
<div class="a" style="left:87.1px;top:480.1px;width:13.7px;height:13.8px;border-radius:2.5px;background:#262626"></div>
<div class="a" style="left:102.2px;top:480.1px;width:13.5px;height:13.8px;border-radius:2.5px;background:#262626"></div>
<div class="a" style="left:87.1px;top:480.1px;width:13.7px;height:13.8px;font-size:7.2px;font-weight:bold;color:#a0a0a0;text-align:center;line-height:14px">M</div>
<div class="a" style="left:102.2px;top:480.1px;width:13.5px;height:13.8px;font-size:7.2px;font-weight:bold;color:#a0a0a0;text-align:center;line-height:14px">S</div>
<div class="a" style="left:122.6px;top:482.0px;white-space:nowrap;font-size:9.3px;font-weight:bold;color:#ececec;letter-spacing:-0.3px">Other</div>
<svg class="s" width="1400" height="737" ><defs><linearGradient id="sg6" x1="87" x2="157" gradientUnits="userSpaceOnUse"><stop offset="0" stop-color="#45b4d2"/><stop offset="1" stop-color="#55d494"/></linearGradient></defs><path d="M87.1,504.20000000000005 H157" stroke="url(#sg6)" stroke-width="1.8"/><path d="M169,504.20000000000005 H192.6" stroke="#2e2e2e" stroke-width="1.2"/></svg>
<svg class="s" width="1400" height="737" ><circle cx="163.1" cy="504.20000000000005" r="6.4" fill="#0e0e0e" stroke="#4a4a4a" stroke-width="1.5"/><circle cx="163.1" cy="504.20000000000005" r="1" fill="#4ed08e"/></svg>
<svg class="s" width="1400" height="737" ><circle cx="216" cy="489.20000000000005" r="10.4" fill="#1a1a1a" stroke="#5a5a5a" stroke-width="1.6"/><path d="M216,479.80000000000007 V487.80000000000007" stroke="#e0e0e0" stroke-width="1.5" stroke-linecap="round"/></svg>
<div class="a" style="left:205.6px;top:499.40000000000003px;font-size:5.6px;font-weight:bold;color:#505050;white-space:nowrap">L<span style="margin-left:13.4px">R</span></div>
<div class="a" style="left:87.1px;top:534.45px;width:13.7px;height:13.8px;border-radius:2.5px;background:#262626"></div>
<div class="a" style="left:102.2px;top:534.45px;width:13.5px;height:13.8px;border-radius:2.5px;background:#262626"></div>
<div class="a" style="left:87.1px;top:534.45px;width:13.7px;height:13.8px;font-size:7.2px;font-weight:bold;color:#e8c038;text-align:center;line-height:14px">M</div>
<div class="a" style="left:102.2px;top:534.45px;width:13.5px;height:13.8px;font-size:7.2px;font-weight:bold;color:#a0a0a0;text-align:center;line-height:14px">S</div>
<div class="a" style="left:120.8px;top:531.35px;white-space:nowrap;font-size:9.3px;font-weight:bold;color:#ececec;line-height:10.6px;letter-spacing:-0.2px">Smart<br>Metronome</div>
<svg class="s" width="1400" height="737" ><path d="M87.1,558.5500000000001 H192.6" stroke="#333" stroke-width="1.2"/></svg>
<svg class="s" width="1400" height="737" ><circle cx="163.1" cy="558.5500000000001" r="6.4" fill="#0e0e0e" stroke="#4a4a4a" stroke-width="1.5"/></svg>
<svg class="s" width="1400" height="737" ><circle cx="216" cy="543.5500000000001" r="10.4" fill="#1a1a1a" stroke="#5a5a5a" stroke-width="1.6"/><path d="M216,534.1500000000001 V542.1500000000001" stroke="#e0e0e0" stroke-width="1.5" stroke-linecap="round"/></svg>
<div class="a" style="left:205.6px;top:553.7500000000001px;font-size:5.6px;font-weight:bold;color:#505050;white-space:nowrap">L<span style="margin-left:13.4px">R</span></div>
<div class="a" style="left:145px;top:593.6px;white-space:nowrap;font-size:9.5px;color:#6a6a6a;letter-spacing:-0.1px">Reset</div>
<div class="a" style="left:432px;top:169px;width:844px;height:700px;border-radius:25px;background:linear-gradient(90deg,#293134 0%,#4a5961 14%,#86a3b2 36%,#94b4c4 48%,#6b8593 68%,#3c474d 86%,#2b3135 100%)"></div>
<div class="a" style="left:438.2px;top:175px;width:831.3px;height:700px;border-radius:19px;background:#000"></div>
<svg class="s" width="1400" height="737" ><g fill="none" stroke="#e6e6e6" stroke-width="1.2" stroke-linecap="round" stroke-linejoin="round">
<path d="M447.2,192.6 L452.9,197.2 L458.6,192.6"/></g></svg>
<div class="a" style="left:840px;top:188.2px;white-space:nowrap;font-size:10.5px;font-weight:bold;color:#f0f0f0;letter-spacing:-0.1px">Move</div>
<svg class="s" width="1400" height="737" ><g fill="none" stroke="#dedede" stroke-width="1.3" stroke-linecap="round" stroke-linejoin="round">
<path d="M1162.6,191 A5.75,5.75 0 1 1 1161.3,195.6"/><path d="M1162.2,188.6 V191.6 H1165.2"/>
<path d="M1190.2,193 H1196 Q1196.8,193 1197.4,192.4 L1201.4,188.6 M1190.2,195.4 H1196 Q1196.8,195.4 1197.4,196 L1201.4,199.6 M1198.2,188.4 H1201.7 V191.9 M1198.2,199.8 H1201.7 V196.3"/>
<path d="M1219.2,196.2 V198.6 Q1219.2,199.9 1220.5,199.9 H1230.1 Q1231.4,199.9 1231.4,198.6 V196.2 M1225.3,188.3 V196.4 M1222,193.1 L1225.3,196.4 L1228.6,193.1"/>
<path d="M1248.4,190.5 H1260.2 M1248.4,194.3 H1260.2 M1248.4,198 H1260.2" stroke-width="1.5"/>
</g><circle cx="1264" cy="187.2" r="2.6" fill="#23c4e0"/></svg>
<div class="a" style="left:438.4px;top:214.1px;width:43.4px;height:35.9px;background:#282828"></div>
<div class="a" style="left:438.4px;top:214.1px;width:1.6px;height:35.9px;background:#8a8a8a"></div>
<div class="a" style="left:484.65px;top:214.1px;width:43.4px;height:35.9px;background:#fafafa"></div>
<div class="a" style="left:530.9px;top:214.1px;width:43.4px;height:35.9px;background:#282828"></div>
<div class="a" style="left:577.15px;top:214.1px;width:43.4px;height:35.9px;background:#282828"></div>
<div class="a" style="left:623.4px;top:214.1px;width:43.4px;height:35.9px;background:#282828"></div>
<div class="a" style="left:623.4px;top:214.1px;width:1.6px;height:35.9px;background:#8a8a8a"></div>
<div class="a" style="left:669.65px;top:214.1px;width:43.4px;height:35.9px;background:#282828"></div>
<div class="a" style="left:715.9px;top:214.1px;width:43.4px;height:35.9px;background:#282828"></div>
<div class="a" style="left:762.15px;top:214.1px;width:43.4px;height:35.9px;background:#282828"></div>
<div class="a" style="left:808.4px;top:214.1px;width:43.4px;height:35.9px;background:#282828"></div>
<div class="a" style="left:808.4px;top:214.1px;width:1.6px;height:35.9px;background:#8a8a8a"></div>
<div class="a" style="left:854.65px;top:214.1px;width:43.4px;height:35.9px;background:#282828"></div>
<div class="a" style="left:900.9px;top:214.1px;width:43.4px;height:35.9px;background:#282828"></div>
<div class="a" style="left:947.15px;top:214.1px;width:43.4px;height:35.9px;background:#282828"></div>
<div class="a" style="left:993.4px;top:214.1px;width:43.4px;height:35.9px;background:#282828"></div>
<div class="a" style="left:993.4px;top:214.1px;width:1.6px;height:35.9px;background:#8a8a8a"></div>
<div class="a" style="left:1039.65px;top:214.1px;width:43.4px;height:35.9px;background:#282828"></div>
<div class="a" style="left:1085.9px;top:214.1px;width:43.4px;height:35.9px;background:#282828"></div>
<div class="a" style="left:1132.15px;top:214.1px;width:43.4px;height:35.9px;background:#282828"></div>
<div class="a" style="left:1178.4px;top:214.1px;width:43.4px;height:35.9px;background:#282828"></div>
<div class="a" style="left:1178.4px;top:214.1px;width:1.6px;height:35.9px;background:#8a8a8a"></div>
<div class="a" style="left:1224.65px;top:214.1px;width:43.4px;height:35.9px;background:#282828"></div>
<div class="a" style="left:442.8px;top:223.6px;white-space:nowrap;color:#9a9a9a;font-weight:bold;font-size:13px;line-height:16px;letter-spacing:-0.2px">G<span style="font-size:10.4px;position:relative;top:-4.8px;font-weight:normal;letter-spacing:0">add9</span></div>
<div class="a" style="left:627.6px;top:223.6px;white-space:nowrap;color:#f4f4f4;font-weight:bold;font-size:13px;line-height:16px;letter-spacing:-0.2px">C<span style="font-size:10.4px;position:relative;top:-4.8px;font-weight:normal;letter-spacing:0">add9</span></div>
<div class="a" style="left:824.4px;top:223.6px;white-space:nowrap;color:#f4f4f4;font-weight:bold;font-size:13px;line-height:16px;letter-spacing:-0.2px">G<span style="font-size:10.4px;position:relative;top:-4.8px;font-weight:normal;letter-spacing:0"></span></div>
<div class="a" style="left:995.6px;top:223.6px;white-space:nowrap;color:#f4f4f4;font-weight:bold;font-size:13px;line-height:16px;letter-spacing:-0.2px">Am<span style="font-size:10.4px;position:relative;top:-4.8px;font-weight:normal;letter-spacing:0"><span style="font-size:9.6px">7(9</span></span></div>
<div class="a" style="left:1181px;top:223.6px;white-space:nowrap;color:#9a9a9a;font-weight:bold;font-size:13px;line-height:16px;letter-spacing:-0.2px">Am<span style="font-size:10.4px;position:relative;top:-4.8px;font-weight:normal;letter-spacing:0">7(9</span></div>
<div class="a" style="left:1180px;top:212px;width:90px;height:40px;background:linear-gradient(90deg,rgba(0,0,0,0) 0%,rgba(0,0,0,0) 25%,rgba(0,0,0,0.95) 85%,#000 100%)"></div>
<div class="a" style="left:648px;top:264.6px;width:630px;height:43.8px;border-radius:5px;background:linear-gradient(90deg,#474747 0,#474747 62.5px,#555555 62.5px)"></div>
<div class="a" style="left:648px;top:315.8px;width:630px;height:43.8px;border-radius:5px;background:linear-gradient(90deg,#207a92 0,#207a92 62.5px,#2597b5 62.5px)"></div>
<div class="a" style="left:648px;top:367px;width:630px;height:43.8px;border-radius:5px;background:linear-gradient(90deg,#3a8ea0 0,#3a8ea0 62.5px,#46a3b8 62.5px)"></div>
<div class="a" style="left:648px;top:417.8px;width:630px;height:43.8px;border-radius:5px;background:linear-gradient(90deg,#5a9aa8 0,#5a9aa8 62.5px,#6aaebc 62.5px)"></div>
<div class="a" style="left:648px;top:469px;width:630px;height:43.8px;border-radius:5px;background:linear-gradient(90deg,#76aeae 0,#76aeae 62.5px,#8ac6c2 62.5px)"></div>
<div class="a" style="left:648px;top:520.7px;width:630px;height:43.8px;border-radius:5px;background:linear-gradient(90deg,#88b0a0 0,#88b0a0 62.5px,#a8d6c4 62.5px)"></div>
<svg class="s" width="1400" height="737" ><path d="M648,286.5 H1140" stroke="#333333" stroke-width="1"/><path d="M686.5,286.5 V282.2 L689.5,282.8 L692.4,283.9 V289.1 L689.5,290.2 L686.5,290.8 ZM693.9,286.5 V282.3 L696.9,283.0 L699.8,284.0 V289.0 L696.9,290.0 L693.9,290.7 ZM701.3,286.5 V282.4 L704.3,283.0 L707.2,284.0 V289.0 L704.3,290.0 L701.3,290.6 ZM708.7,286.5 V281.5 L711.7,282.3 L714.6,283.5 V289.5 L711.7,290.7 L708.7,291.5 ZM716.1,286.5 V281.9 L719.1,282.6 L722.0,283.8 V289.2 L719.1,290.4 L716.1,291.1 ZM723.5,286.5 V281.8 L726.5,282.5 L729.4,283.7 V289.3 L726.5,290.5 L723.5,291.2 ZM730.9,286.5 V282.0 L733.4,282.6 L736.0,283.8 V289.2 L733.4,290.4 L730.9,291.0 ZM737.5,286.5 V282.3 L740.0,283.0 L742.5,284.0 V289.0 L740.0,290.0 L737.5,290.7 ZM743.7,286.5 V282.0 L746.2,282.6 L748.7,283.8 V289.2 L746.2,290.4 L743.7,291.0 ZM749.9,286.5 V282.1 L752.4,282.8 L754.9,283.9 V289.1 L752.4,290.2 L749.9,290.9 ZM758.0,286.5 V281.9 L760.0,282.6 L762.0,283.7 V289.3 L760.0,290.4 L758.0,291.1 ZM763.0,286.5 V282.0 L765.0,282.7 L767.0,283.8 V289.2 L765.0,290.3 L763.0,291.0 ZM768.0,286.5 V281.8 L770.0,282.5 L772.0,283.7 V289.3 L770.0,290.5 L768.0,291.2 ZM773.0,286.5 V282.3 L775.0,282.9 L777.0,284.0 V289.0 L775.0,290.1 L773.0,290.7 ZM786.7,286.5 V282.6 L789.1,283.2 L791.5,284.2 V288.8 L789.1,289.8 L786.7,290.4 ZM803.4,286.5 V282.4 L806.4,283.0 L809.3,284.1 V288.9 L806.4,290.0 L803.4,290.6 ZM810.8,286.5 V281.8 L813.8,282.5 L816.7,283.7 V289.3 L813.8,290.5 L810.8,291.2 ZM818.2,286.5 V282.4 L821.2,283.0 L824.1,284.0 V289.0 L821.2,290.0 L818.2,290.6 ZM825.6,286.5 V281.8 L828.6,282.5 L831.5,283.7 V289.3 L828.6,290.5 L825.6,291.2 ZM833.0,286.5 V281.9 L836.0,282.6 L838.9,283.7 V289.3 L836.0,290.4 L833.0,291.1 ZM840.4,286.5 V282.5 L843.4,283.1 L846.3,284.1 V288.9 L843.4,289.9 L840.4,290.5 ZM847.8,286.5 V281.7 L849.9,282.4 L852.0,283.6 V289.4 L849.9,290.6 L847.8,291.3 Z" fill="#333333"/><path d="M853.5,279.15 L854.2,279.18 L854.9,282.18 L855.6,282.09 L856.3,279.56 L857.0,279.89 L857.7,280.11 L858.4,281.34 L859.1,280.33 L859.8,280.33 L860.5,280.41 L861.2,281.84 L861.9,280.92 L862.6,281.05 L863.3,279.93 L864.0,279.02 L864.7,279.17 L865.4,280.54 L866.1,280.87 L866.8,281.47 L867.5,282.25 L868.2,282.28 L868.9,280.81 L869.6,281.30 L870.3,281.09 L871.0,279.37 L871.7,280.60 L872.4,280.48 L873.1,281.58 L873.8,282.29 L874.5,281.28 L875.2,281.91 L875.9,280.65 L876.6,279.00 L877.3,280.10 L878.0,281.76 L878.7,279.36 L879.4,279.69 L880.1,279.90 L880.8,279.32 L881.5,279.80 L882.2,279.71 L882.9,281.18 L883.6,279.06 L884.3,279.13 L885.0,281.83 L885.7,279.83 L886.4,279.96 L887.1,280.82 L887.8,280.59 L888.5,280.72 L889.2,279.25 L889.9,280.68 L890.6,279.57 L891.3,281.18 L892.0,279.40 L892.7,279.34 L893.4,280.82 L894.1,280.46 L894.8,279.27 L895.5,279.93 L896.2,280.73 L896.9,281.63 L897.6,281.28 L898.3,280.01 L899.0,281.81 L899.7,279.31 L900.4,281.47 L901.1,279.30 L901.8,281.33 L902.5,279.14 L903.2,279.99 L903.9,280.67 L904.6,280.63 L905.3,280.18 L906.0,280.39 L906.7,281.32 L907.4,281.67 L908.1,280.65 L908.8,279.22 L909.5,280.27 L910.2,282.12 L910.9,279.61 L911.6,279.92 L912.3,279.31 L913.0,281.73 L913.7,279.86 L914.4,282.18 L915.1,280.17 L915.8,281.45 L916.5,281.61 L917.2,279.42 L917.9,282.02 L918.6,280.61 L919.3,279.49 L920.0,281.55 L920.7,281.66 L921.4,279.40 L922.1,286.50 L922.8,286.50 L923.5,286.50 L924.2,286.50 L924.9,286.50 L925.6,286.50 L926.3,286.50 L927.0,286.50 L927.7,286.50 L928.4,286.50 L929.1,286.50 L929.8,286.50 L930.5,286.50 L931.2,283.71 L931.9,283.65 L932.6,282.62 L933.3,283.24 L934.0,283.94 L934.7,282.02 L935.4,283.72 L936.1,286.50 L936.8,286.50 L937.5,286.50 L938.2,286.50 L938.9,286.50 L939.6,286.50 L940.3,286.50 L941.0,286.50 L941.7,286.50 L942.4,286.50 L943.1,286.50 L943.8,286.50 L944.5,286.50 L945.2,282.34 L945.9,282.84 L946.6,283.37 L947.3,282.43 L948.0,283.18 L948.7,283.64 L949.4,282.89 L950.1,281.97 L950.8,283.58 L951.5,282.60 L952.2,283.01 L952.9,282.75 L953.6,283.55 L954.3,281.79 L955.0,283.30 L955.7,282.55 L956.4,282.95 L957.1,283.82 L957.8,282.65 L958.5,286.50 L959.2,286.50 L959.9,284.01 L960.6,283.76 L961.3,283.89 L962.0,282.82 L962.7,283.07 L963.4,282.13 L964.1,282.23 L964.8,282.11 L965.5,286.50 L966.2,286.50 L966.9,286.50 L967.6,286.50 L968.3,286.50 L969.0,283.22 L969.7,283.37 L970.4,284.10 L971.1,283.83 L971.8,283.67 L972.5,284.51 L973.2,286.50 L973.9,286.50 L974.6,286.50 L975.3,286.50 L976.0,286.50 L976.7,286.50 L977.4,286.50 L978.1,286.50 L978.8,286.50 L979.5,286.50 L980.2,286.50 L980.9,286.50 L981.6,286.50 L982.3,286.50 L983.0,286.50 L983.7,286.50 L984.4,286.50 L985.1,286.50 L985.8,286.50 L986.5,286.50 L987.2,286.50 L987.9,286.50 L988.6,286.50 L989.3,286.50 L990.0,286.50 L990.7,286.50 L991.4,286.50 L992.1,286.50 L992.8,286.50 L993.5,286.50 L994.2,286.50 L994.9,286.50 L995.6,286.50 L996.3,286.50 L997.0,286.50 L997.7,286.50 L998.4,286.50 L999.1,286.50 L999.8,286.50 L1000.5,286.50 L1001.2,286.50 L1001.9,286.50 L1002.6,280.66 L1003.3,281.61 L1004.0,280.31 L1004.7,282.07 L1005.4,281.35 L1006.1,281.04 L1006.8,279.12 L1007.5,282.06 L1008.2,279.74 L1008.9,281.66 L1009.6,280.37 L1010.3,280.98 L1011.0,280.74 L1011.7,279.74 L1012.4,280.97 L1013.1,281.90 L1013.8,281.90 L1014.5,282.04 L1015.2,279.41 L1015.9,280.13 L1016.6,279.04 L1017.3,279.95 L1018.0,282.24 L1018.7,280.07 L1019.4,279.66 L1020.1,279.85 L1020.8,280.62 L1021.5,281.10 L1022.2,280.76 L1022.9,279.59 L1023.6,281.40 L1024.3,280.52 L1025.0,280.69 L1025.7,279.05 L1026.4,279.57 L1027.1,279.13 L1027.8,279.46 L1028.5,281.31 L1029.2,281.53 L1029.9,280.65 L1030.6,281.43 L1031.3,280.86 L1032.0,280.00 L1032.7,279.18 L1033.4,280.32 L1034.1,279.52 L1034.8,281.99 L1035.5,281.10 L1036.2,278.91 L1036.9,281.82 L1037.6,280.89 L1038.3,282.09 L1039.0,282.03 L1039.7,279.26 L1040.4,278.94 L1041.1,280.10 L1041.8,281.88 L1042.5,281.31 L1043.2,281.53 L1043.9,280.03 L1044.6,279.99 L1045.3,280.82 L1046.0,280.53 L1046.7,281.94 L1047.4,280.47 L1048.1,279.07 L1048.8,279.74 L1049.5,281.99 L1050.2,280.55 L1050.9,279.87 L1051.6,281.44 L1052.3,279.26 L1053.0,280.74 L1053.7,279.91 L1054.4,280.94 L1055.1,278.92 L1055.8,279.64 L1056.5,280.36 L1057.2,281.82 L1057.9,280.81 L1058.6,282.22 L1059.3,280.28 L1060.0,279.30 L1060.7,281.70 L1061.4,280.58 L1062.1,280.67 L1062.8,280.94 L1063.5,279.89 L1064.2,279.12 L1064.9,279.91 L1065.6,280.70 L1066.3,279.03 L1067.0,281.19 L1067.7,279.77 L1068.4,280.07 L1069.1,279.72 L1069.8,279.41 L1070.5,281.55 L1071.2,280.20 L1071.9,280.94 L1072.6,280.04 L1073.3,278.98 L1074.0,280.15 L1074.7,282.28 L1075.4,280.73 L1076.1,279.89 L1076.8,279.30 L1077.5,280.10 L1078.2,279.53 L1078.9,282.26 L1079.6,279.09 L1080.3,279.83 L1081.0,280.25 L1081.7,279.22 L1082.4,279.29 L1083.1,281.98 L1083.8,279.53 L1084.5,279.70 L1085.2,281.64 L1085.9,279.77 L1086.6,280.32 L1087.3,281.67 L1088.0,279.57 L1088.7,281.85 L1089.4,280.23 L1090.1,280.83 L1090.8,281.45 L1091.5,280.38 L1092.2,280.72 L1092.9,281.62 L1093.6,279.01 L1094.3,282.07 L1095.0,282.31 L1095.7,280.66 L1096.4,279.46 L1097.1,280.07 L1097.8,279.74 L1098.5,280.66 L1099.2,280.01 L1099.9,281.17 L1100.6,281.41 L1101.3,280.60 L1102.0,282.23 L1102.7,282.05 L1103.4,279.74 L1104.1,281.73 L1104.8,279.75 L1105.5,279.64 L1106.2,280.94 L1106.9,280.01 L1107.6,279.63 L1108.3,279.37 L1109.0,281.86 L1109.7,281.76 L1110.4,281.01 L1111.1,280.73 L1111.8,281.31 L1112.5,282.28 L1113.2,280.41 L1113.9,279.01 L1114.6,281.07 L1115.3,280.48 L1116.0,281.01 L1116.7,280.81 L1117.4,279.34 L1118.1,281.27 L1118.8,280.10 L1119.5,280.67 L1120.2,280.48 L1120.9,286.50 L1121.6,286.50 L1122.3,286.50 L1123.0,286.50 L1123.7,286.50 L1124.4,286.50 L1125.1,286.50 L1125.8,286.50 L1126.5,286.50 L1127.2,286.50 L1127.9,286.50 L1128.6,286.50 L1129.3,286.50 L1130.0,280.90 L1130.7,281.05 L1131.4,281.50 L1132.1,282.37 L1132.8,282.57 L1133.5,281.96 L1134.2,282.57 L1134.9,282.45 L1135.6,280.61 L1136.3,282.90 L1137.0,280.99 L1137.7,282.18 L1138.4,282.22 L1139.1,282.34 L1139.8,282.99 L1139.8,290.01 L1139.1,290.66 L1138.4,290.78 L1137.7,290.82 L1137.0,292.01 L1136.3,290.10 L1135.6,292.39 L1134.9,290.55 L1134.2,290.43 L1133.5,291.04 L1132.8,290.43 L1132.1,290.63 L1131.4,291.50 L1130.7,291.95 L1130.0,292.10 L1129.3,286.50 L1128.6,286.50 L1127.9,286.50 L1127.2,286.50 L1126.5,286.50 L1125.8,286.50 L1125.1,286.50 L1124.4,286.50 L1123.7,286.50 L1123.0,286.50 L1122.3,286.50 L1121.6,286.50 L1120.9,286.50 L1120.2,292.52 L1119.5,292.33 L1118.8,292.90 L1118.1,291.73 L1117.4,293.66 L1116.7,292.19 L1116.0,291.99 L1115.3,292.52 L1114.6,291.93 L1113.9,293.99 L1113.2,292.59 L1112.5,290.72 L1111.8,291.69 L1111.1,292.27 L1110.4,291.99 L1109.7,291.24 L1109.0,291.14 L1108.3,293.63 L1107.6,293.37 L1106.9,292.99 L1106.2,292.06 L1105.5,293.36 L1104.8,293.25 L1104.1,291.27 L1103.4,293.26 L1102.7,290.95 L1102.0,290.77 L1101.3,292.40 L1100.6,291.59 L1099.9,291.83 L1099.2,292.99 L1098.5,292.34 L1097.8,293.26 L1097.1,292.93 L1096.4,293.54 L1095.7,292.34 L1095.0,290.69 L1094.3,290.93 L1093.6,293.99 L1092.9,291.38 L1092.2,292.28 L1091.5,292.62 L1090.8,291.55 L1090.1,292.17 L1089.4,292.77 L1088.7,291.15 L1088.0,293.43 L1087.3,291.33 L1086.6,292.68 L1085.9,293.23 L1085.2,291.36 L1084.5,293.30 L1083.8,293.47 L1083.1,291.02 L1082.4,293.71 L1081.7,293.78 L1081.0,292.75 L1080.3,293.17 L1079.6,293.91 L1078.9,290.74 L1078.2,293.47 L1077.5,292.90 L1076.8,293.70 L1076.1,293.11 L1075.4,292.27 L1074.7,290.72 L1074.0,292.85 L1073.3,294.02 L1072.6,292.96 L1071.9,292.06 L1071.2,292.80 L1070.5,291.45 L1069.8,293.59 L1069.1,293.28 L1068.4,292.93 L1067.7,293.23 L1067.0,291.81 L1066.3,293.97 L1065.6,292.30 L1064.9,293.09 L1064.2,293.88 L1063.5,293.11 L1062.8,292.06 L1062.1,292.33 L1061.4,292.42 L1060.7,291.30 L1060.0,293.70 L1059.3,292.72 L1058.6,290.78 L1057.9,292.19 L1057.2,291.18 L1056.5,292.64 L1055.8,293.36 L1055.1,294.08 L1054.4,292.06 L1053.7,293.09 L1053.0,292.26 L1052.3,293.74 L1051.6,291.56 L1050.9,293.13 L1050.2,292.45 L1049.5,291.01 L1048.8,293.26 L1048.1,293.93 L1047.4,292.53 L1046.7,291.06 L1046.0,292.47 L1045.3,292.18 L1044.6,293.01 L1043.9,292.97 L1043.2,291.47 L1042.5,291.69 L1041.8,291.12 L1041.1,292.90 L1040.4,294.06 L1039.7,293.74 L1039.0,290.97 L1038.3,290.91 L1037.6,292.11 L1036.9,291.18 L1036.2,294.09 L1035.5,291.90 L1034.8,291.01 L1034.1,293.48 L1033.4,292.68 L1032.7,293.82 L1032.0,293.00 L1031.3,292.14 L1030.6,291.57 L1029.9,292.35 L1029.2,291.47 L1028.5,291.69 L1027.8,293.54 L1027.1,293.87 L1026.4,293.43 L1025.7,293.95 L1025.0,292.31 L1024.3,292.48 L1023.6,291.60 L1022.9,293.41 L1022.2,292.24 L1021.5,291.90 L1020.8,292.38 L1020.1,293.15 L1019.4,293.34 L1018.7,292.93 L1018.0,290.76 L1017.3,293.05 L1016.6,293.96 L1015.9,292.87 L1015.2,293.59 L1014.5,290.96 L1013.8,291.10 L1013.1,291.10 L1012.4,292.03 L1011.7,293.26 L1011.0,292.26 L1010.3,292.02 L1009.6,292.63 L1008.9,291.34 L1008.2,293.26 L1007.5,290.94 L1006.8,293.88 L1006.1,291.96 L1005.4,291.65 L1004.7,290.93 L1004.0,292.69 L1003.3,291.39 L1002.6,292.34 L1001.9,286.50 L1001.2,286.50 L1000.5,286.50 L999.8,286.50 L999.1,286.50 L998.4,286.50 L997.7,286.50 L997.0,286.50 L996.3,286.50 L995.6,286.50 L994.9,286.50 L994.2,286.50 L993.5,286.50 L992.8,286.50 L992.1,286.50 L991.4,286.50 L990.7,286.50 L990.0,286.50 L989.3,286.50 L988.6,286.50 L987.9,286.50 L987.2,286.50 L986.5,286.50 L985.8,286.50 L985.1,286.50 L984.4,286.50 L983.7,286.50 L983.0,286.50 L982.3,286.50 L981.6,286.50 L980.9,286.50 L980.2,286.50 L979.5,286.50 L978.8,286.50 L978.1,286.50 L977.4,286.50 L976.7,286.50 L976.0,286.50 L975.3,286.50 L974.6,286.50 L973.9,286.50 L973.2,286.50 L972.5,288.49 L971.8,289.33 L971.1,289.17 L970.4,288.90 L969.7,289.63 L969.0,289.78 L968.3,286.50 L967.6,286.50 L966.9,286.50 L966.2,286.50 L965.5,286.50 L964.8,290.89 L964.1,290.77 L963.4,290.87 L962.7,289.93 L962.0,290.18 L961.3,289.11 L960.6,289.24 L959.9,288.99 L959.2,286.50 L958.5,286.50 L957.8,290.35 L957.1,289.18 L956.4,290.05 L955.7,290.45 L955.0,289.70 L954.3,291.21 L953.6,289.45 L952.9,290.25 L952.2,289.99 L951.5,290.40 L950.8,289.42 L950.1,291.03 L949.4,290.11 L948.7,289.36 L948.0,289.82 L947.3,290.57 L946.6,289.63 L945.9,290.16 L945.2,290.66 L944.5,286.50 L943.8,286.50 L943.1,286.50 L942.4,286.50 L941.7,286.50 L941.0,286.50 L940.3,286.50 L939.6,286.50 L938.9,286.50 L938.2,286.50 L937.5,286.50 L936.8,286.50 L936.1,286.50 L935.4,289.28 L934.7,290.98 L934.0,289.06 L933.3,289.76 L932.6,290.38 L931.9,289.35 L931.2,289.29 L930.5,286.50 L929.8,286.50 L929.1,286.50 L928.4,286.50 L927.7,286.50 L927.0,286.50 L926.3,286.50 L925.6,286.50 L924.9,286.50 L924.2,286.50 L923.5,286.50 L922.8,286.50 L922.1,286.50 L921.4,293.60 L920.7,291.34 L920.0,291.45 L919.3,293.51 L918.6,292.39 L917.9,290.98 L917.2,293.58 L916.5,291.39 L915.8,291.55 L915.1,292.83 L914.4,290.82 L913.7,293.14 L913.0,291.27 L912.3,293.69 L911.6,293.08 L910.9,293.39 L910.2,290.88 L909.5,292.73 L908.8,293.78 L908.1,292.35 L907.4,291.33 L906.7,291.68 L906.0,292.61 L905.3,292.82 L904.6,292.37 L903.9,292.33 L903.2,293.01 L902.5,293.86 L901.8,291.67 L901.1,293.70 L900.4,291.53 L899.7,293.69 L899.0,291.19 L898.3,292.99 L897.6,291.72 L896.9,291.37 L896.2,292.27 L895.5,293.07 L894.8,293.73 L894.1,292.54 L893.4,292.18 L892.7,293.66 L892.0,293.60 L891.3,291.82 L890.6,293.43 L889.9,292.32 L889.2,293.75 L888.5,292.28 L887.8,292.41 L887.1,292.18 L886.4,293.04 L885.7,293.17 L885.0,291.17 L884.3,293.87 L883.6,293.94 L882.9,291.82 L882.2,293.29 L881.5,293.20 L880.8,293.68 L880.1,293.10 L879.4,293.31 L878.7,293.64 L878.0,291.24 L877.3,292.90 L876.6,294.00 L875.9,292.35 L875.2,291.09 L874.5,291.72 L873.8,290.71 L873.1,291.42 L872.4,292.52 L871.7,292.40 L871.0,293.63 L870.3,291.91 L869.6,291.70 L868.9,292.19 L868.2,290.72 L867.5,290.75 L866.8,291.53 L866.1,292.13 L865.4,292.46 L864.7,293.83 L864.0,293.98 L863.3,293.07 L862.6,291.95 L861.9,292.08 L861.2,291.16 L860.5,292.59 L859.8,292.67 L859.1,292.67 L858.4,291.66 L857.7,292.89 L857.0,293.11 L856.3,293.44 L855.6,290.91 L854.9,290.82 L854.2,293.82 L853.5,293.85 Z" fill="#333333"/><path d="M648,337.7 H1140" stroke="#1a5f70" stroke-width="1"/><path d="M744.0,326.7 V348.7M745.1,331.7 V343.7M746.3,325.7 V349.7M747.4,331.7 V343.7M748.6,329.7 V345.7M749.7,327.7 V347.7M750.9,325.7 V349.7M752.0,326.7 V348.7M753.2,326.7 V348.7M754.3,331.7 V343.7M755.5,325.7 V349.7M756.6,326.7 V348.7M757.8,326.7 V348.7M758.9,329.7 V345.7M760.1,325.7 V349.7M761.2,326.7 V348.7M762.4,327.7 V347.7M763.5,327.7 V347.7M764.7,329.7 V345.7M765.8,325.7 V349.7M767.0,325.7 V349.7M768.1,333.7 V341.7M769.3,329.7 V345.7M770.4,327.7 V347.7M771.6,329.7 V345.7M772.7,326.7 V348.7M773.9,327.7 V347.7M775.0,333.7 V341.7M776.2,325.7 V349.7M777.3,326.7 V348.7M778.5,325.7 V349.7M779.6,325.7 V349.7M780.8,327.7 V347.7M781.9,329.7 V345.7M783.1,329.7 V345.7M784.2,326.7 V348.7M785.4,325.7 V349.7M786.5,331.7 V343.7M787.7,333.7 V341.7M788.8,333.7 V341.7M790.0,329.7 V345.7M791.1,329.7 V345.7M792.3,331.7 V343.7M793.4,333.7 V341.7M794.6,325.7 V349.7M795.7,329.7 V345.7M796.9,333.7 V341.7M798.0,325.7 V349.7M799.2,329.7 V345.7M800.3,331.7 V343.7M801.5,326.7 V348.7M802.6,329.7 V345.7M803.8,329.7 V345.7M804.9,333.7 V341.7M806.1,329.7 V345.7M807.2,326.7 V348.7M808.4,325.7 V349.7M809.5,329.7 V345.7M810.7,326.7 V348.7M811.8,327.7 V347.7M813.0,327.7 V347.7M814.1,331.7 V343.7M815.3,325.7 V349.7M816.4,333.7 V341.7M817.6,333.7 V341.7M818.7,329.7 V345.7M819.9,325.7 V349.7M821.0,325.7 V349.7M822.2,325.7 V349.7M823.3,326.7 V348.7M824.5,333.7 V341.7M825.6,333.7 V341.7M826.8,331.7 V343.7M827.9,333.7 V341.7M829.1,333.7 V341.7M830.2,329.7 V345.7M831.4,333.7 V341.7M832.5,333.7 V341.7M833.7,327.7 V347.7M834.8,329.7 V345.7M836.0,329.7 V345.7M837.1,331.7 V343.7M838.3,331.7 V343.7M839.4,325.7 V349.7M840.6,325.7 V349.7M841.7,327.7 V347.7M842.9,327.7 V347.7M844.0,326.7 V348.7M845.2,327.7 V347.7M846.3,329.7 V345.7M847.5,326.7 V348.7M848.6,326.7 V348.7M849.8,327.7 V347.7M850.9,329.7 V345.7M852.1,327.7 V347.7M853.2,333.7 V341.7M854.4,330.7 V344.7M855.5,323.7 V351.7M856.7,323.7 V351.7M857.8,323.7 V351.7M859.0,321.7 V353.7M860.1,321.7 V353.7M861.3,325.7 V349.7M862.4,330.7 V344.7M863.6,321.7 V353.7M864.7,321.7 V353.7M865.9,327.7 V347.7M867.0,330.7 V344.7M868.2,322.7 V352.7M869.3,321.7 V353.7M870.5,323.7 V351.7M871.6,321.7 V353.7M872.8,325.7 V349.7M873.9,321.7 V353.7M875.1,321.7 V353.7M876.2,321.7 V353.7M877.4,321.7 V353.7M878.5,327.7 V347.7M879.7,323.7 V351.7M880.8,321.7 V353.7M882.0,322.7 V352.7M883.1,323.7 V351.7M884.3,330.7 V344.7M885.4,321.7 V353.7M886.6,330.7 V344.7M887.7,322.7 V352.7M888.9,321.7 V353.7M890.0,325.7 V349.7M891.2,323.7 V351.7M892.3,325.7 V349.7M893.5,323.7 V351.7M894.6,322.7 V352.7M895.8,323.7 V351.7M896.9,325.7 V349.7M898.1,323.7 V351.7M899.2,322.7 V352.7M900.4,321.7 V353.7M901.5,323.7 V351.7M902.7,323.7 V351.7M903.8,330.7 V344.7M905.0,321.7 V353.7M906.1,323.7 V351.7M907.3,325.7 V349.7M908.4,321.7 V353.7M909.6,325.7 V349.7M910.7,327.7 V347.7M911.9,330.7 V344.7M913.0,327.7 V347.7M914.2,321.7 V353.7M915.3,325.7 V349.7M916.5,322.7 V352.7M917.6,325.7 V349.7M918.8,322.7 V352.7M919.9,327.7 V347.7M921.1,321.7 V353.7M922.2,321.7 V353.7M923.4,325.7 V349.7M924.5,321.7 V353.7M925.7,323.7 V351.7M926.8,323.7 V351.7M928.0,321.7 V353.7M929.1,325.7 V349.7M930.3,321.7 V353.7M931.4,321.7 V353.7M932.6,325.7 V349.7M933.7,321.7 V353.7M934.9,321.7 V353.7M936.0,322.7 V352.7M937.2,321.7 V353.7M938.3,322.7 V352.7M939.5,330.7 V344.7M940.6,321.7 V353.7M941.8,321.7 V353.7M942.9,321.7 V353.7M944.1,321.7 V353.7M945.2,330.7 V344.7M946.4,327.7 V347.7M947.5,323.7 V351.7M948.7,330.7 V344.7M949.8,321.7 V353.7M951.0,325.7 V349.7M952.1,321.7 V353.7M953.3,322.7 V352.7M954.4,330.7 V344.7M955.6,322.7 V352.7M956.7,330.7 V344.7M957.9,327.7 V347.7M959.0,321.7 V353.7M960.2,327.7 V347.7M961.3,327.7 V347.7M962.5,322.7 V352.7M963.6,330.7 V344.7M964.8,330.7 V344.7M965.9,321.7 V353.7M967.1,321.7 V353.7M968.2,330.7 V344.7M969.4,322.7 V352.7M970.5,323.7 V351.7M971.7,322.7 V352.7M972.8,321.7 V353.7M974.0,325.7 V349.7M975.1,330.7 V344.7M976.3,321.7 V353.7M977.4,327.7 V347.7M978.6,323.7 V351.7M979.7,330.7 V344.7M980.9,330.7 V344.7M982.0,321.7 V353.7M983.2,321.7 V353.7M984.3,327.7 V347.7M985.5,323.7 V351.7M986.6,330.7 V344.7M987.8,321.7 V353.7M988.9,330.7 V344.7M990.1,322.7 V352.7M991.2,321.7 V353.7M992.4,327.7 V347.7M993.5,321.7 V353.7M994.7,322.7 V352.7M995.8,327.7 V347.7M997.0,321.7 V353.7M998.1,330.7 V344.7M999.3,325.7 V349.7M1000.4,325.7 V349.7M1001.6,330.7 V344.7M1002.7,321.7 V353.7M1003.9,321.7 V353.7M1005.0,323.7 V351.7M1006.2,321.7 V353.7M1007.3,325.7 V349.7M1008.5,330.7 V344.7M1009.6,321.7 V353.7M1010.8,321.7 V353.7M1011.9,321.7 V353.7M1013.1,330.7 V344.7M1014.2,321.7 V353.7M1015.4,330.7 V344.7M1016.5,323.7 V351.7M1017.7,321.7 V353.7M1018.8,325.7 V349.7M1020.0,322.7 V352.7M1021.1,325.7 V349.7M1022.3,325.7 V349.7M1023.4,322.7 V352.7M1024.6,327.7 V347.7M1025.7,321.7 V353.7M1026.9,325.7 V349.7M1028.0,330.7 V344.7M1029.2,325.7 V349.7M1030.3,323.7 V351.7M1031.5,323.7 V351.7M1032.6,321.7 V353.7M1033.8,323.7 V351.7M1034.9,325.7 V349.7M1036.1,327.7 V347.7M1037.2,321.7 V353.7M1038.4,330.7 V344.7M1039.5,322.7 V352.7M1040.7,327.7 V347.7M1041.8,321.7 V353.7M1043.0,327.7 V347.7M1044.1,325.7 V349.7M1045.3,330.7 V344.7M1046.4,327.7 V347.7M1047.6,323.7 V351.7M1048.7,322.7 V352.7M1049.9,327.7 V347.7M1051.0,327.7 V347.7M1052.2,321.7 V353.7M1053.3,323.7 V351.7M1054.5,322.7 V352.7M1055.6,323.7 V351.7M1056.8,323.7 V351.7M1057.9,325.7 V349.7M1059.1,321.7 V353.7M1060.2,321.7 V353.7M1061.4,327.7 V347.7M1062.5,330.7 V344.7M1063.7,330.7 V344.7M1064.8,330.7 V344.7M1066.0,330.7 V344.7M1067.1,327.7 V347.7M1068.3,325.7 V349.7M1069.4,327.7 V347.7M1070.6,325.7 V349.7M1071.7,321.7 V353.7M1072.9,325.7 V349.7M1074.0,327.7 V347.7M1075.2,325.7 V349.7M1076.3,322.7 V352.7M1077.5,321.7 V353.7M1078.6,321.7 V353.7M1079.8,330.7 V344.7M1080.9,323.7 V351.7M1082.1,323.7 V351.7M1083.2,322.7 V352.7M1084.4,323.7 V351.7M1085.5,322.7 V352.7M1086.7,325.7 V349.7M1087.8,321.7 V353.7M1089.0,325.7 V349.7M1090.1,327.7 V347.7M1091.3,321.7 V353.7M1092.4,330.7 V344.7M1093.6,325.7 V349.7M1094.8,327.7 V347.7M1095.9,323.7 V351.7M1097.1,330.7 V344.7M1098.2,325.7 V349.7M1099.4,330.7 V344.7M1100.5,330.7 V344.7M1101.7,321.7 V353.7M1102.8,327.7 V347.7M1104.0,321.7 V353.7M1105.1,323.7 V351.7M1106.3,325.7 V349.7M1107.4,327.7 V347.7M1108.6,321.7 V353.7M1109.7,323.7 V351.7M1110.9,330.7 V344.7M1112.0,321.7 V353.7M1113.2,327.7 V347.7M1114.3,321.7 V353.7M1115.5,321.7 V353.7M1116.6,327.7 V347.7M1117.8,322.7 V352.7M1118.9,327.7 V347.7M1120.1,321.7 V353.7M1121.2,323.7 V351.7M1122.4,322.7 V352.7M1123.5,321.7 V353.7M1124.7,330.7 V344.7M1125.8,321.7 V353.7M1127.0,322.7 V352.7M1128.1,323.7 V351.7M1129.3,327.7 V347.7M1130.4,321.7 V353.7M1131.6,327.7 V347.7M1132.7,321.7 V353.7M1133.9,321.7 V353.7M1135.0,323.7 V351.7M1136.2,321.7 V353.7M1137.3,321.7 V353.7M1138.5,321.7 V353.7M1139.6,325.7 V349.7" stroke="#1a5f70" stroke-width="0.9"/><path d="M744.0,333.76 L745.0,332.93 L746.0,333.40 L747.0,332.77 L748.0,332.71 L749.0,334.22 L750.0,334.36 L751.0,332.14 L752.0,333.70 L753.0,333.77 L754.0,331.71 L755.0,333.13 L756.0,332.14 L757.0,333.11 L758.0,332.67 L759.0,333.99 L760.0,332.69 L761.0,332.06 L762.0,332.99 L763.0,332.40 L764.0,332.59 L765.0,334.23 L766.0,332.35 L767.0,332.80 L768.0,333.59 L769.0,334.32 L770.0,332.06 L771.0,333.12 L772.0,332.46 L773.0,332.03 L774.0,332.47 L775.0,331.91 L776.0,333.33 L777.0,332.24 L778.0,333.20 L779.0,331.87 L780.0,332.03 L781.0,334.14 L782.0,334.03 L783.0,333.81 L784.0,331.79 L785.0,333.22 L786.0,332.71 L787.0,333.59 L788.0,333.03 L789.0,333.36 L790.0,333.45 L791.0,332.82 L792.0,332.82 L793.0,331.96 L794.0,332.56 L795.0,331.89 L796.0,332.09 L797.0,331.72 L798.0,332.59 L799.0,333.96 L800.0,332.08 L801.0,331.80 L802.0,331.96 L803.0,332.86 L804.0,332.47 L805.0,333.83 L806.0,332.15 L807.0,332.85 L808.0,333.63 L809.0,334.23 L810.0,332.09 L811.0,331.73 L812.0,334.16 L813.0,332.24 L814.0,333.29 L815.0,333.99 L816.0,333.61 L817.0,332.32 L818.0,332.04 L819.0,334.28 L820.0,332.74 L821.0,334.28 L822.0,332.46 L823.0,333.51 L824.0,332.02 L825.0,331.75 L826.0,333.04 L827.0,331.70 L828.0,333.56 L829.0,334.19 L830.0,332.78 L831.0,334.32 L832.0,333.87 L833.0,333.30 L834.0,332.75 L835.0,333.98 L836.0,334.29 L837.0,332.06 L838.0,333.55 L839.0,331.81 L840.0,331.98 L841.0,333.38 L842.0,333.16 L843.0,333.00 L844.0,332.66 L845.0,332.79 L846.0,332.89 L847.0,332.73 L848.0,331.86 L849.0,333.03 L850.0,333.24 L851.0,332.46 L852.0,333.76 L853.0,333.59 L854.0,328.79 L855.0,330.64 L856.0,330.53 L857.0,332.70 L858.0,331.07 L859.0,330.40 L860.0,332.67 L861.0,330.26 L862.0,330.19 L863.0,332.51 L864.0,330.21 L865.0,330.86 L866.0,330.00 L867.0,331.32 L868.0,329.89 L869.0,329.76 L870.0,332.66 L871.0,332.50 L872.0,330.01 L873.0,328.85 L874.0,331.73 L875.0,330.90 L876.0,330.35 L877.0,331.45 L878.0,331.28 L879.0,331.48 L880.0,331.25 L881.0,330.34 L882.0,331.53 L883.0,331.22 L884.0,329.62 L885.0,332.64 L886.0,330.44 L887.0,329.77 L888.0,331.49 L889.0,331.85 L890.0,329.49 L891.0,331.78 L892.0,331.99 L893.0,330.99 L894.0,329.92 L895.0,332.34 L896.0,331.45 L897.0,331.40 L898.0,329.37 L899.0,330.97 L900.0,329.29 L901.0,332.06 L902.0,331.39 L903.0,330.12 L904.0,329.17 L905.0,330.92 L906.0,331.84 L907.0,332.26 L908.0,330.61 L909.0,331.98 L910.0,329.48 L911.0,329.35 L912.0,332.01 L913.0,331.62 L914.0,329.48 L915.0,330.15 L916.0,329.48 L917.0,331.35 L918.0,332.22 L919.0,331.57 L920.0,329.53 L921.0,331.65 L922.0,331.35 L923.0,331.06 L924.0,331.05 L925.0,331.09 L926.0,329.02 L927.0,332.12 L928.0,332.73 L929.0,328.93 L930.0,329.19 L931.0,328.75 L932.0,330.99 L933.0,328.90 L934.0,328.99 L935.0,331.85 L936.0,329.73 L937.0,329.36 L938.0,330.06 L939.0,330.65 L940.0,331.58 L941.0,331.37 L942.0,331.83 L943.0,332.47 L944.0,330.37 L945.0,331.59 L946.0,329.47 L947.0,332.57 L948.0,329.09 L949.0,329.94 L950.0,329.01 L951.0,329.12 L952.0,329.11 L953.0,330.41 L954.0,332.70 L955.0,329.73 L956.0,332.05 L957.0,331.54 L958.0,330.07 L959.0,330.62 L960.0,331.07 L961.0,328.95 L962.0,330.27 L963.0,331.37 L964.0,331.73 L965.0,329.26 L966.0,330.82 L967.0,329.58 L968.0,331.33 L969.0,331.95 L970.0,330.58 L971.0,329.44 L972.0,332.06 L973.0,329.54 L974.0,329.02 L975.0,329.49 L976.0,329.41 L977.0,332.72 L978.0,330.20 L979.0,329.26 L980.0,332.55 L981.0,331.65 L982.0,331.66 L983.0,330.61 L984.0,331.04 L985.0,330.83 L986.0,329.61 L987.0,332.74 L988.0,332.53 L989.0,332.24 L990.0,332.25 L991.0,332.47 L992.0,328.80 L993.0,329.29 L994.0,332.40 L995.0,330.72 L996.0,331.47 L997.0,331.48 L998.0,331.33 L999.0,330.13 L1000.0,330.37 L1001.0,331.29 L1002.0,331.98 L1003.0,331.42 L1004.0,332.25 L1005.0,330.50 L1006.0,329.85 L1007.0,331.21 L1008.0,332.43 L1009.0,332.03 L1010.0,331.24 L1011.0,330.30 L1012.0,329.58 L1013.0,331.21 L1014.0,329.51 L1015.0,330.23 L1016.0,331.00 L1017.0,331.24 L1018.0,330.74 L1019.0,329.90 L1020.0,331.05 L1021.0,329.94 L1022.0,330.88 L1023.0,331.76 L1024.0,330.58 L1025.0,329.93 L1026.0,332.46 L1027.0,331.03 L1028.0,331.03 L1029.0,329.19 L1030.0,328.96 L1031.0,331.23 L1032.0,329.11 L1033.0,329.55 L1034.0,331.69 L1035.0,330.87 L1036.0,332.25 L1037.0,329.46 L1038.0,330.07 L1039.0,329.16 L1040.0,329.54 L1041.0,330.05 L1042.0,329.78 L1043.0,330.47 L1044.0,332.33 L1045.0,330.37 L1046.0,332.73 L1047.0,332.17 L1048.0,329.61 L1049.0,332.57 L1050.0,332.38 L1051.0,332.35 L1052.0,329.18 L1053.0,332.02 L1054.0,332.65 L1055.0,329.34 L1056.0,332.26 L1057.0,329.33 L1058.0,330.02 L1059.0,329.36 L1060.0,328.89 L1061.0,330.40 L1062.0,329.52 L1063.0,332.60 L1064.0,329.64 L1065.0,330.68 L1066.0,329.85 L1067.0,332.32 L1068.0,329.72 L1069.0,328.97 L1070.0,332.50 L1071.0,331.44 L1072.0,330.47 L1073.0,329.40 L1074.0,331.77 L1075.0,332.02 L1076.0,331.74 L1077.0,330.26 L1078.0,329.70 L1079.0,331.16 L1080.0,331.26 L1081.0,331.14 L1082.0,331.33 L1083.0,331.06 L1084.0,332.41 L1085.0,330.72 L1086.0,328.81 L1087.0,331.08 L1088.0,329.72 L1089.0,332.10 L1090.0,329.95 L1091.0,329.69 L1092.0,330.02 L1093.0,330.66 L1094.0,330.79 L1095.0,330.15 L1096.0,329.12 L1097.0,332.15 L1098.0,332.36 L1099.0,329.72 L1100.0,329.04 L1101.0,330.66 L1102.0,330.96 L1103.0,329.84 L1104.0,332.00 L1105.0,331.67 L1106.0,331.94 L1107.0,330.38 L1108.0,331.47 L1109.0,331.81 L1110.0,329.95 L1111.0,328.89 L1112.0,331.55 L1113.0,329.89 L1114.0,331.08 L1115.0,329.29 L1116.0,330.38 L1117.0,331.67 L1118.0,331.87 L1119.0,332.66 L1120.0,330.81 L1121.0,331.20 L1122.0,332.05 L1123.0,331.29 L1124.0,331.45 L1125.0,329.61 L1126.0,332.17 L1127.0,328.74 L1128.0,330.81 L1129.0,330.32 L1130.0,330.85 L1131.0,329.37 L1132.0,329.42 L1133.0,330.49 L1134.0,330.80 L1135.0,329.83 L1136.0,329.28 L1137.0,331.13 L1138.0,329.78 L1139.0,328.86 L1140.0,330.86 L1140.0,344.54 L1139.0,346.54 L1138.0,345.62 L1137.0,344.27 L1136.0,346.12 L1135.0,345.57 L1134.0,344.60 L1133.0,344.91 L1132.0,345.98 L1131.0,346.03 L1130.0,344.55 L1129.0,345.08 L1128.0,344.59 L1127.0,346.66 L1126.0,343.23 L1125.0,345.79 L1124.0,343.95 L1123.0,344.11 L1122.0,343.35 L1121.0,344.20 L1120.0,344.59 L1119.0,342.74 L1118.0,343.53 L1117.0,343.73 L1116.0,345.02 L1115.0,346.11 L1114.0,344.32 L1113.0,345.51 L1112.0,343.85 L1111.0,346.51 L1110.0,345.45 L1109.0,343.59 L1108.0,343.93 L1107.0,345.02 L1106.0,343.46 L1105.0,343.73 L1104.0,343.40 L1103.0,345.56 L1102.0,344.44 L1101.0,344.74 L1100.0,346.36 L1099.0,345.68 L1098.0,343.04 L1097.0,343.25 L1096.0,346.28 L1095.0,345.25 L1094.0,344.61 L1093.0,344.74 L1092.0,345.38 L1091.0,345.71 L1090.0,345.45 L1089.0,343.30 L1088.0,345.68 L1087.0,344.32 L1086.0,346.59 L1085.0,344.68 L1084.0,342.99 L1083.0,344.34 L1082.0,344.07 L1081.0,344.26 L1080.0,344.14 L1079.0,344.24 L1078.0,345.70 L1077.0,345.14 L1076.0,343.66 L1075.0,343.38 L1074.0,343.63 L1073.0,346.00 L1072.0,344.93 L1071.0,343.96 L1070.0,342.90 L1069.0,346.43 L1068.0,345.68 L1067.0,343.08 L1066.0,345.55 L1065.0,344.72 L1064.0,345.76 L1063.0,342.80 L1062.0,345.88 L1061.0,345.00 L1060.0,346.51 L1059.0,346.04 L1058.0,345.38 L1057.0,346.07 L1056.0,343.14 L1055.0,346.06 L1054.0,342.75 L1053.0,343.38 L1052.0,346.22 L1051.0,343.05 L1050.0,343.02 L1049.0,342.83 L1048.0,345.79 L1047.0,343.23 L1046.0,342.67 L1045.0,345.03 L1044.0,343.07 L1043.0,344.93 L1042.0,345.62 L1041.0,345.35 L1040.0,345.86 L1039.0,346.24 L1038.0,345.33 L1037.0,345.94 L1036.0,343.15 L1035.0,344.53 L1034.0,343.71 L1033.0,345.85 L1032.0,346.29 L1031.0,344.17 L1030.0,346.44 L1029.0,346.21 L1028.0,344.37 L1027.0,344.37 L1026.0,342.94 L1025.0,345.47 L1024.0,344.82 L1023.0,343.64 L1022.0,344.52 L1021.0,345.46 L1020.0,344.35 L1019.0,345.50 L1018.0,344.66 L1017.0,344.16 L1016.0,344.40 L1015.0,345.17 L1014.0,345.89 L1013.0,344.19 L1012.0,345.82 L1011.0,345.10 L1010.0,344.16 L1009.0,343.37 L1008.0,342.97 L1007.0,344.19 L1006.0,345.55 L1005.0,344.90 L1004.0,343.15 L1003.0,343.98 L1002.0,343.42 L1001.0,344.11 L1000.0,345.03 L999.0,345.27 L998.0,344.07 L997.0,343.92 L996.0,343.93 L995.0,344.68 L994.0,343.00 L993.0,346.11 L992.0,346.60 L991.0,342.93 L990.0,343.15 L989.0,343.16 L988.0,342.87 L987.0,342.66 L986.0,345.79 L985.0,344.57 L984.0,344.36 L983.0,344.79 L982.0,343.74 L981.0,343.75 L980.0,342.85 L979.0,346.14 L978.0,345.20 L977.0,342.68 L976.0,345.99 L975.0,345.91 L974.0,346.38 L973.0,345.86 L972.0,343.34 L971.0,345.96 L970.0,344.82 L969.0,343.45 L968.0,344.07 L967.0,345.82 L966.0,344.58 L965.0,346.14 L964.0,343.67 L963.0,344.03 L962.0,345.13 L961.0,346.45 L960.0,344.33 L959.0,344.78 L958.0,345.33 L957.0,343.86 L956.0,343.35 L955.0,345.67 L954.0,342.70 L953.0,344.99 L952.0,346.29 L951.0,346.28 L950.0,346.39 L949.0,345.46 L948.0,346.31 L947.0,342.83 L946.0,345.93 L945.0,343.81 L944.0,345.03 L943.0,342.93 L942.0,343.57 L941.0,344.03 L940.0,343.82 L939.0,344.75 L938.0,345.34 L937.0,346.04 L936.0,345.67 L935.0,343.55 L934.0,346.41 L933.0,346.50 L932.0,344.41 L931.0,346.65 L930.0,346.21 L929.0,346.47 L928.0,342.67 L927.0,343.28 L926.0,346.38 L925.0,344.31 L924.0,344.35 L923.0,344.34 L922.0,344.05 L921.0,343.75 L920.0,345.87 L919.0,343.83 L918.0,343.18 L917.0,344.05 L916.0,345.92 L915.0,345.25 L914.0,345.92 L913.0,343.78 L912.0,343.39 L911.0,346.05 L910.0,345.92 L909.0,343.42 L908.0,344.79 L907.0,343.14 L906.0,343.56 L905.0,344.48 L904.0,346.23 L903.0,345.28 L902.0,344.01 L901.0,343.34 L900.0,346.11 L899.0,344.43 L898.0,346.03 L897.0,344.00 L896.0,343.95 L895.0,343.06 L894.0,345.48 L893.0,344.41 L892.0,343.41 L891.0,343.62 L890.0,345.91 L889.0,343.55 L888.0,343.91 L887.0,345.63 L886.0,344.96 L885.0,342.76 L884.0,345.78 L883.0,344.18 L882.0,343.87 L881.0,345.06 L880.0,344.15 L879.0,343.92 L878.0,344.12 L877.0,343.95 L876.0,345.05 L875.0,344.50 L874.0,343.67 L873.0,346.55 L872.0,345.39 L871.0,342.90 L870.0,342.74 L869.0,345.64 L868.0,345.51 L867.0,344.08 L866.0,345.40 L865.0,344.54 L864.0,345.19 L863.0,342.89 L862.0,345.21 L861.0,345.14 L860.0,342.73 L859.0,345.00 L858.0,344.33 L857.0,342.70 L856.0,344.87 L855.0,344.76 L854.0,346.61 L853.0,341.81 L852.0,341.64 L851.0,342.94 L850.0,342.16 L849.0,342.37 L848.0,343.54 L847.0,342.67 L846.0,342.51 L845.0,342.61 L844.0,342.74 L843.0,342.40 L842.0,342.24 L841.0,342.02 L840.0,343.42 L839.0,343.59 L838.0,341.85 L837.0,343.34 L836.0,341.11 L835.0,341.42 L834.0,342.65 L833.0,342.10 L832.0,341.53 L831.0,341.08 L830.0,342.62 L829.0,341.21 L828.0,341.84 L827.0,343.70 L826.0,342.36 L825.0,343.65 L824.0,343.38 L823.0,341.89 L822.0,342.94 L821.0,341.12 L820.0,342.66 L819.0,341.12 L818.0,343.36 L817.0,343.08 L816.0,341.79 L815.0,341.41 L814.0,342.11 L813.0,343.16 L812.0,341.24 L811.0,343.67 L810.0,343.31 L809.0,341.17 L808.0,341.77 L807.0,342.55 L806.0,343.25 L805.0,341.57 L804.0,342.93 L803.0,342.54 L802.0,343.44 L801.0,343.60 L800.0,343.32 L799.0,341.44 L798.0,342.81 L797.0,343.68 L796.0,343.31 L795.0,343.51 L794.0,342.84 L793.0,343.44 L792.0,342.58 L791.0,342.58 L790.0,341.95 L789.0,342.04 L788.0,342.37 L787.0,341.81 L786.0,342.69 L785.0,342.18 L784.0,343.61 L783.0,341.59 L782.0,341.37 L781.0,341.26 L780.0,343.37 L779.0,343.53 L778.0,342.20 L777.0,343.16 L776.0,342.07 L775.0,343.49 L774.0,342.93 L773.0,343.37 L772.0,342.94 L771.0,342.28 L770.0,343.34 L769.0,341.08 L768.0,341.81 L767.0,342.60 L766.0,343.05 L765.0,341.17 L764.0,342.81 L763.0,343.00 L762.0,342.41 L761.0,343.34 L760.0,342.71 L759.0,341.41 L758.0,342.73 L757.0,342.29 L756.0,343.26 L755.0,342.27 L754.0,343.69 L753.0,341.63 L752.0,341.70 L751.0,343.26 L750.0,341.04 L749.0,341.18 L748.0,342.69 L747.0,342.63 L746.0,342.00 L745.0,342.47 L744.0,341.64 Z" fill="#1a5f70"/><path d="M652,336.9 H668 V338.5 H652 Z M676,336.2 h1 v3 h-1 Z" fill="#1a5f70"/><path d="M648,388.9 H1140" stroke="#2b6f7e" stroke-width="1"/><path d="M716.0,386.28 L716.8,386.51 L717.6,385.99 L718.4,386.42 L719.2,386.58 L720.0,385.98 L720.8,385.05 L721.6,385.26 L722.4,385.32 L723.2,386.30 L724.0,385.73 L724.8,386.20 L725.6,386.39 L726.4,386.51 L727.2,386.31 L728.0,385.03 L728.8,385.21 L729.6,385.25 L730.4,385.26 L731.2,386.35 L732.0,386.14 L732.8,385.57 L733.6,385.38 L734.4,385.16 L735.2,385.12 L736.0,386.54 L736.8,385.61 L737.6,385.49 L738.4,385.79 L739.2,386.38 L740.0,385.85 L740.8,386.54 L741.6,385.02 L742.4,385.14 L743.2,385.71 L744.0,386.16 L744.8,385.06 L745.6,384.46 L746.4,383.69 L747.2,383.78 L748.0,384.62 L748.8,384.85 L749.6,384.39 L750.4,384.81 L751.2,385.48 L752.0,385.12 L752.8,383.86 L753.6,385.77 L754.4,385.76 L755.2,384.32 L756.0,385.18 L756.8,384.55 L757.6,384.71 L758.4,385.03 L759.2,383.41 L760.0,385.39 L760.8,384.85 L761.6,385.37 L762.4,384.31 L763.2,385.19 L764.0,384.99 L764.8,384.03 L765.6,385.08 L766.4,384.49 L767.2,383.64 L768.0,385.63 L768.8,385.72 L769.6,385.31 L770.4,383.98 L771.2,384.35 L772.0,385.29 L772.8,385.06 L773.6,385.44 L774.4,384.74 L775.2,385.77 L776.0,384.15 L776.8,383.66 L777.6,383.51 L778.4,384.06 L779.2,383.50 L780.0,385.83 L780.8,385.16 L781.6,383.48 L782.4,383.96 L783.2,384.86 L784.0,383.54 L784.8,384.34 L785.6,383.85 L786.4,385.15 L787.2,385.40 L788.0,384.78 L788.8,385.54 L789.6,384.93 L790.4,383.49 L791.2,385.06 L792.0,385.85 L792.8,385.76 L793.6,385.46 L794.4,383.94 L795.2,384.98 L796.0,385.16 L796.8,385.63 L797.6,383.45 L798.4,384.83 L799.2,385.36 L800.0,385.73 L800.8,385.74 L801.6,385.46 L802.4,384.20 L803.2,385.50 L804.0,385.77 L804.8,384.66 L805.6,385.26 L806.4,383.41 L807.2,385.57 L808.0,384.57 L808.8,383.96 L809.6,384.86 L810.4,383.43 L811.2,384.69 L812.0,385.28 L812.8,384.86 L813.6,385.78 L814.4,384.83 L815.2,385.26 L816.0,383.67 L816.8,383.82 L817.6,384.64 L818.4,385.80 L819.2,385.25 L820.0,385.28 L820.8,385.36 L821.6,385.30 L822.4,383.72 L823.2,385.52 L824.0,385.75 L824.8,383.58 L825.6,384.48 L826.4,383.42 L827.2,384.88 L828.0,383.65 L828.8,384.26 L829.6,383.92 L830.4,384.03 L831.2,384.65 L832.0,385.65 L832.8,385.35 L833.6,383.71 L834.4,383.65 L835.2,383.59 L836.0,385.04 L836.8,384.25 L837.6,383.90 L838.4,384.28 L839.2,383.86 L840.0,384.57 L840.8,384.25 L841.6,384.18 L842.4,385.21 L843.2,383.59 L844.0,383.51 L844.8,385.69 L845.6,383.47 L846.4,383.49 L847.2,384.22 L848.0,385.76 L848.8,383.65 L849.6,385.56 L850.4,383.48 L851.2,384.22 L852.0,385.73 L852.8,385.46 L853.6,384.30 L854.4,384.47 L855.2,384.03 L856.0,383.58 L856.8,385.33 L857.6,385.87 L858.4,383.59 L859.2,385.84 L860.0,383.71 L860.8,384.08 L861.6,381.58 L862.4,381.68 L863.2,381.34 L864.0,382.52 L864.8,381.34 L865.6,383.77 L866.4,382.08 L867.2,383.31 L868.0,381.29 L868.8,381.72 L869.6,382.80 L870.4,382.60 L871.2,384.40 L872.0,384.38 L872.8,382.36 L873.6,382.74 L874.4,381.39 L875.2,382.31 L876.0,384.00 L876.8,383.19 L877.6,381.74 L878.4,382.62 L879.2,384.46 L880.0,381.48 L880.8,381.52 L881.6,384.19 L882.4,382.54 L883.2,383.13 L884.0,381.67 L884.8,383.38 L885.6,383.66 L886.4,382.75 L887.2,381.02 L888.0,384.16 L888.8,384.09 L889.6,382.26 L890.4,381.31 L891.2,382.66 L892.0,382.94 L892.8,381.41 L893.6,381.70 L894.4,384.26 L895.2,381.33 L896.0,383.79 L896.8,383.41 L897.6,381.49 L898.4,382.98 L899.2,381.63 L900.0,383.90 L900.8,381.35 L901.6,383.87 L902.4,383.96 L903.2,382.72 L904.0,383.28 L904.8,382.55 L905.6,381.25 L906.4,381.94 L907.2,384.48 L908.0,383.38 L908.8,382.54 L909.6,382.75 L910.4,383.67 L911.2,384.29 L912.0,385.40 L912.8,384.94 L913.6,383.31 L914.4,384.64 L915.2,383.53 L916.0,382.94 L916.8,383.91 L917.6,383.77 L918.4,383.95 L919.2,384.75 L920.0,383.14 L920.8,384.34 L921.6,383.14 L922.4,384.77 L923.2,383.26 L924.0,383.48 L924.8,383.94 L925.6,384.41 L926.4,385.22 L927.2,383.52 L928.0,384.62 L928.8,383.81 L929.6,385.24 L930.4,385.38 L931.2,385.21 L932.0,383.42 L932.8,385.12 L933.6,383.16 L934.4,384.60 L935.2,384.04 L936.0,384.65 L936.8,383.92 L937.6,385.35 L938.4,384.51 L939.2,383.07 L940.0,385.11 L940.8,383.83 L941.6,384.72 L942.4,384.79 L943.2,385.54 L944.0,385.55 L944.8,383.04 L945.6,383.36 L946.4,383.44 L947.2,383.42 L948.0,383.03 L948.8,385.17 L949.6,384.02 L950.4,384.26 L951.2,384.05 L952.0,383.07 L952.8,383.55 L953.6,382.99 L954.4,385.28 L955.2,383.84 L956.0,383.78 L956.8,383.59 L957.6,383.93 L958.4,383.36 L959.2,384.78 L960.0,383.09 L960.8,384.50 L961.6,383.98 L962.4,383.18 L963.2,383.70 L964.0,384.76 L964.8,384.98 L965.6,384.72 L966.4,383.91 L967.2,382.91 L968.0,383.17 L968.8,384.52 L969.6,384.52 L970.4,380.64 L971.2,382.80 L972.0,382.28 L972.8,383.90 L973.6,383.21 L974.4,381.76 L975.2,381.14 L976.0,381.46 L976.8,382.47 L977.6,380.10 L978.4,381.43 L979.2,383.32 L980.0,383.68 L980.8,380.01 L981.6,379.95 L982.4,380.22 L983.2,381.50 L984.0,382.69 L984.8,383.58 L985.6,382.91 L986.4,383.05 L987.2,380.19 L988.0,380.34 L988.8,380.80 L989.6,383.35 L990.4,382.98 L991.2,382.74 L992.0,380.11 L992.8,383.29 L993.6,380.75 L994.4,381.19 L995.2,381.73 L996.0,380.06 L996.8,382.89 L997.6,381.83 L998.4,383.31 L999.2,383.56 L1000.0,383.82 L1000.8,382.67 L1001.6,383.46 L1002.4,383.70 L1003.2,379.93 L1004.0,382.78 L1004.8,380.34 L1005.6,381.11 L1006.4,380.99 L1007.2,381.30 L1008.0,380.09 L1008.8,380.39 L1009.6,381.04 L1010.4,381.68 L1011.2,381.14 L1012.0,381.02 L1012.8,381.71 L1013.6,381.91 L1014.4,383.33 L1015.2,380.53 L1016.0,381.99 L1016.8,383.68 L1017.6,383.27 L1018.4,380.41 L1019.2,382.91 L1020.0,382.37 L1020.8,381.19 L1021.6,380.46 L1022.4,382.62 L1023.2,382.38 L1024.0,382.24 L1024.8,383.84 L1025.6,380.40 L1026.4,383.87 L1027.2,380.06 L1028.0,383.33 L1028.8,383.32 L1029.6,380.51 L1030.4,380.62 L1031.2,383.01 L1032.0,381.71 L1032.8,382.02 L1033.6,381.04 L1034.4,383.20 L1035.2,380.61 L1036.0,379.91 L1036.8,381.09 L1037.6,380.22 L1038.4,380.15 L1039.2,382.41 L1040.0,380.52 L1040.8,380.57 L1041.6,381.57 L1042.4,383.52 L1043.2,381.44 L1044.0,380.26 L1044.8,382.71 L1045.6,381.33 L1046.4,380.32 L1047.2,381.52 L1048.0,383.80 L1048.8,381.39 L1049.6,382.91 L1050.4,380.48 L1051.2,381.27 L1052.0,382.71 L1052.8,380.32 L1053.6,381.42 L1054.4,382.58 L1055.2,380.57 L1056.0,380.34 L1056.8,380.33 L1057.6,380.37 L1058.4,381.28 L1059.2,381.12 L1060.0,381.50 L1060.8,381.82 L1061.6,379.95 L1062.4,382.52 L1063.2,383.62 L1064.0,381.06 L1064.8,381.93 L1065.6,381.74 L1066.4,381.53 L1067.2,382.94 L1068.0,383.14 L1068.8,383.66 L1069.6,380.78 L1070.4,380.27 L1071.2,381.13 L1072.0,383.48 L1072.8,379.99 L1073.6,380.60 L1074.4,381.89 L1075.2,383.95 L1076.0,380.53 L1076.8,381.43 L1077.6,381.43 L1078.4,383.88 L1079.2,380.98 L1080.0,383.81 L1080.8,382.01 L1081.6,383.36 L1082.4,382.49 L1083.2,380.34 L1084.0,380.92 L1084.8,380.65 L1085.6,382.74 L1086.4,382.38 L1087.2,381.50 L1088.0,383.81 L1088.8,382.28 L1089.6,380.00 L1090.4,380.90 L1091.2,380.46 L1092.0,382.74 L1092.8,381.15 L1093.6,380.76 L1094.4,381.10 L1095.2,382.18 L1096.0,383.24 L1096.8,383.88 L1097.6,380.36 L1098.4,380.18 L1099.2,382.83 L1100.0,380.89 L1100.8,382.30 L1101.6,381.41 L1102.4,380.54 L1103.2,382.65 L1104.0,381.44 L1104.8,382.91 L1105.6,381.88 L1106.4,383.83 L1107.2,382.88 L1108.0,382.79 L1108.8,380.25 L1109.6,383.41 L1110.4,380.88 L1111.2,383.60 L1112.0,379.96 L1112.8,383.28 L1113.6,383.58 L1114.4,383.09 L1115.2,380.17 L1116.0,381.24 L1116.8,380.34 L1117.6,381.93 L1118.4,383.49 L1119.2,382.57 L1120.0,382.10 L1120.8,382.93 L1121.6,385.15 L1122.4,384.94 L1123.2,383.32 L1124.0,385.29 L1124.8,382.98 L1125.6,384.80 L1126.4,384.07 L1127.2,383.82 L1128.0,383.15 L1128.8,385.40 L1129.6,383.31 L1130.4,385.12 L1131.2,383.66 L1132.0,385.53 L1132.8,383.53 L1133.6,385.11 L1134.4,385.04 L1135.2,385.51 L1136.0,384.72 L1136.8,384.71 L1137.6,382.95 L1138.4,383.96 L1139.2,384.62 L1140.0,382.93 L1140.0,394.87 L1139.2,393.18 L1138.4,393.84 L1137.6,394.85 L1136.8,393.09 L1136.0,393.08 L1135.2,392.29 L1134.4,392.76 L1133.6,392.69 L1132.8,394.27 L1132.0,392.27 L1131.2,394.14 L1130.4,392.68 L1129.6,394.49 L1128.8,392.40 L1128.0,394.65 L1127.2,393.98 L1126.4,393.73 L1125.6,393.00 L1124.8,394.82 L1124.0,392.51 L1123.2,394.48 L1122.4,392.86 L1121.6,392.65 L1120.8,394.87 L1120.0,395.70 L1119.2,395.23 L1118.4,394.31 L1117.6,395.87 L1116.8,397.46 L1116.0,396.56 L1115.2,397.63 L1114.4,394.71 L1113.6,394.22 L1112.8,394.52 L1112.0,397.84 L1111.2,394.20 L1110.4,396.92 L1109.6,394.39 L1108.8,397.55 L1108.0,395.01 L1107.2,394.92 L1106.4,393.97 L1105.6,395.92 L1104.8,394.89 L1104.0,396.36 L1103.2,395.15 L1102.4,397.26 L1101.6,396.39 L1100.8,395.50 L1100.0,396.91 L1099.2,394.97 L1098.4,397.62 L1097.6,397.44 L1096.8,393.92 L1096.0,394.56 L1095.2,395.62 L1094.4,396.70 L1093.6,397.04 L1092.8,396.65 L1092.0,395.06 L1091.2,397.34 L1090.4,396.90 L1089.6,397.80 L1088.8,395.52 L1088.0,393.99 L1087.2,396.30 L1086.4,395.42 L1085.6,395.06 L1084.8,397.15 L1084.0,396.88 L1083.2,397.46 L1082.4,395.31 L1081.6,394.44 L1080.8,395.79 L1080.0,393.99 L1079.2,396.82 L1078.4,393.92 L1077.6,396.37 L1076.8,396.37 L1076.0,397.27 L1075.2,393.85 L1074.4,395.91 L1073.6,397.20 L1072.8,397.81 L1072.0,394.32 L1071.2,396.67 L1070.4,397.53 L1069.6,397.02 L1068.8,394.14 L1068.0,394.66 L1067.2,394.86 L1066.4,396.27 L1065.6,396.06 L1064.8,395.87 L1064.0,396.74 L1063.2,394.18 L1062.4,395.28 L1061.6,397.85 L1060.8,395.98 L1060.0,396.30 L1059.2,396.68 L1058.4,396.52 L1057.6,397.43 L1056.8,397.47 L1056.0,397.46 L1055.2,397.23 L1054.4,395.22 L1053.6,396.38 L1052.8,397.48 L1052.0,395.09 L1051.2,396.53 L1050.4,397.32 L1049.6,394.89 L1048.8,396.41 L1048.0,394.00 L1047.2,396.28 L1046.4,397.48 L1045.6,396.47 L1044.8,395.09 L1044.0,397.54 L1043.2,396.36 L1042.4,394.28 L1041.6,396.23 L1040.8,397.23 L1040.0,397.28 L1039.2,395.39 L1038.4,397.65 L1037.6,397.58 L1036.8,396.71 L1036.0,397.89 L1035.2,397.19 L1034.4,394.60 L1033.6,396.76 L1032.8,395.78 L1032.0,396.09 L1031.2,394.79 L1030.4,397.18 L1029.6,397.29 L1028.8,394.48 L1028.0,394.47 L1027.2,397.74 L1026.4,393.93 L1025.6,397.40 L1024.8,393.96 L1024.0,395.56 L1023.2,395.42 L1022.4,395.18 L1021.6,397.34 L1020.8,396.61 L1020.0,395.43 L1019.2,394.89 L1018.4,397.39 L1017.6,394.53 L1016.8,394.12 L1016.0,395.81 L1015.2,397.27 L1014.4,394.47 L1013.6,395.89 L1012.8,396.09 L1012.0,396.78 L1011.2,396.66 L1010.4,396.12 L1009.6,396.76 L1008.8,397.41 L1008.0,397.71 L1007.2,396.50 L1006.4,396.81 L1005.6,396.69 L1004.8,397.46 L1004.0,395.02 L1003.2,397.87 L1002.4,394.10 L1001.6,394.34 L1000.8,395.13 L1000.0,393.98 L999.2,394.24 L998.4,394.49 L997.6,395.97 L996.8,394.91 L996.0,397.74 L995.2,396.07 L994.4,396.61 L993.6,397.05 L992.8,394.51 L992.0,397.69 L991.2,395.06 L990.4,394.82 L989.6,394.45 L988.8,397.00 L988.0,397.46 L987.2,397.61 L986.4,394.75 L985.6,394.89 L984.8,394.22 L984.0,395.11 L983.2,396.30 L982.4,397.58 L981.6,397.85 L980.8,397.79 L980.0,394.12 L979.2,394.48 L978.4,396.37 L977.6,397.70 L976.8,395.33 L976.0,396.34 L975.2,396.66 L974.4,396.04 L973.6,394.59 L972.8,393.90 L972.0,395.52 L971.2,395.00 L970.4,397.16 L969.6,393.28 L968.8,393.28 L968.0,394.63 L967.2,394.89 L966.4,393.89 L965.6,393.08 L964.8,392.82 L964.0,393.04 L963.2,394.10 L962.4,394.62 L961.6,393.82 L960.8,393.30 L960.0,394.71 L959.2,393.02 L958.4,394.44 L957.6,393.87 L956.8,394.21 L956.0,394.02 L955.2,393.96 L954.4,392.52 L953.6,394.81 L952.8,394.25 L952.0,394.73 L951.2,393.75 L950.4,393.54 L949.6,393.78 L948.8,392.63 L948.0,394.77 L947.2,394.38 L946.4,394.36 L945.6,394.44 L944.8,394.76 L944.0,392.25 L943.2,392.26 L942.4,393.01 L941.6,393.08 L940.8,393.97 L940.0,392.69 L939.2,394.73 L938.4,393.29 L937.6,392.45 L936.8,393.88 L936.0,393.15 L935.2,393.76 L934.4,393.20 L933.6,394.64 L932.8,392.68 L932.0,394.38 L931.2,392.59 L930.4,392.42 L929.6,392.56 L928.8,393.99 L928.0,393.18 L927.2,394.28 L926.4,392.58 L925.6,393.39 L924.8,393.86 L924.0,394.32 L923.2,394.54 L922.4,393.03 L921.6,394.66 L920.8,393.46 L920.0,394.66 L919.2,393.05 L918.4,393.85 L917.6,394.03 L916.8,393.89 L916.0,394.86 L915.2,394.27 L914.4,393.16 L913.6,394.49 L912.8,392.86 L912.0,392.40 L911.2,393.51 L910.4,394.13 L909.6,395.05 L908.8,395.26 L908.0,394.42 L907.2,393.32 L906.4,395.86 L905.6,396.55 L904.8,395.25 L904.0,394.52 L903.2,395.08 L902.4,393.84 L901.6,393.93 L900.8,396.45 L900.0,393.90 L899.2,396.17 L898.4,394.82 L897.6,396.31 L896.8,394.39 L896.0,394.01 L895.2,396.47 L894.4,393.54 L893.6,396.10 L892.8,396.39 L892.0,394.86 L891.2,395.14 L890.4,396.49 L889.6,395.54 L888.8,393.71 L888.0,393.64 L887.2,396.78 L886.4,395.05 L885.6,394.14 L884.8,394.42 L884.0,396.13 L883.2,394.67 L882.4,395.26 L881.6,393.61 L880.8,396.28 L880.0,396.32 L879.2,393.34 L878.4,395.18 L877.6,396.06 L876.8,394.61 L876.0,393.80 L875.2,395.49 L874.4,396.41 L873.6,395.06 L872.8,395.44 L872.0,393.42 L871.2,393.40 L870.4,395.20 L869.6,395.00 L868.8,396.08 L868.0,396.51 L867.2,394.49 L866.4,395.72 L865.6,394.03 L864.8,396.46 L864.0,395.28 L863.2,396.46 L862.4,396.12 L861.6,396.22 L860.8,393.72 L860.0,394.09 L859.2,391.96 L858.4,394.21 L857.6,391.93 L856.8,392.47 L856.0,394.22 L855.2,393.77 L854.4,393.33 L853.6,393.50 L852.8,392.34 L852.0,392.07 L851.2,393.58 L850.4,394.32 L849.6,392.24 L848.8,394.15 L848.0,392.04 L847.2,393.58 L846.4,394.31 L845.6,394.33 L844.8,392.11 L844.0,394.29 L843.2,394.21 L842.4,392.59 L841.6,393.62 L840.8,393.55 L840.0,393.23 L839.2,393.94 L838.4,393.52 L837.6,393.90 L836.8,393.55 L836.0,392.76 L835.2,394.21 L834.4,394.15 L833.6,394.09 L832.8,392.45 L832.0,392.15 L831.2,393.15 L830.4,393.77 L829.6,393.88 L828.8,393.54 L828.0,394.15 L827.2,392.92 L826.4,394.38 L825.6,393.32 L824.8,394.22 L824.0,392.05 L823.2,392.28 L822.4,394.08 L821.6,392.50 L820.8,392.44 L820.0,392.52 L819.2,392.55 L818.4,392.00 L817.6,393.16 L816.8,393.98 L816.0,394.13 L815.2,392.54 L814.4,392.97 L813.6,392.02 L812.8,392.94 L812.0,392.52 L811.2,393.11 L810.4,394.37 L809.6,392.94 L808.8,393.84 L808.0,393.23 L807.2,392.23 L806.4,394.39 L805.6,392.54 L804.8,393.14 L804.0,392.03 L803.2,392.30 L802.4,393.60 L801.6,392.34 L800.8,392.06 L800.0,392.07 L799.2,392.44 L798.4,392.97 L797.6,394.35 L796.8,392.17 L796.0,392.64 L795.2,392.82 L794.4,393.86 L793.6,392.34 L792.8,392.04 L792.0,391.95 L791.2,392.74 L790.4,394.31 L789.6,392.87 L788.8,392.26 L788.0,393.02 L787.2,392.40 L786.4,392.65 L785.6,393.95 L784.8,393.46 L784.0,394.26 L783.2,392.94 L782.4,393.84 L781.6,394.32 L780.8,392.64 L780.0,391.97 L779.2,394.30 L778.4,393.74 L777.6,394.29 L776.8,394.14 L776.0,393.65 L775.2,392.03 L774.4,393.06 L773.6,392.36 L772.8,392.74 L772.0,392.51 L771.2,393.45 L770.4,393.82 L769.6,392.49 L768.8,392.08 L768.0,392.17 L767.2,394.16 L766.4,393.31 L765.6,392.72 L764.8,393.77 L764.0,392.81 L763.2,392.61 L762.4,393.49 L761.6,392.43 L760.8,392.95 L760.0,392.41 L759.2,394.39 L758.4,392.77 L757.6,393.09 L756.8,393.25 L756.0,392.62 L755.2,393.48 L754.4,392.04 L753.6,392.03 L752.8,393.94 L752.0,392.68 L751.2,392.32 L750.4,392.99 L749.6,393.41 L748.8,392.95 L748.0,393.18 L747.2,394.02 L746.4,394.11 L745.6,393.34 L744.8,392.74 L744.0,391.64 L743.2,392.09 L742.4,392.66 L741.6,392.78 L740.8,391.26 L740.0,391.95 L739.2,391.42 L738.4,392.01 L737.6,392.31 L736.8,392.19 L736.0,391.26 L735.2,392.68 L734.4,392.64 L733.6,392.42 L732.8,392.23 L732.0,391.66 L731.2,391.45 L730.4,392.54 L729.6,392.55 L728.8,392.59 L728.0,392.77 L727.2,391.49 L726.4,391.29 L725.6,391.41 L724.8,391.60 L724.0,392.07 L723.2,391.50 L722.4,392.48 L721.6,392.54 L720.8,392.75 L720.0,391.82 L719.2,391.22 L718.4,391.38 L717.6,391.81 L716.8,391.29 L716.0,391.52 Z" fill="#2b6f7e"/><path d="M648,439.7 H1140" stroke="#3f7984" stroke-width="1"/><path d="M652.0,439.20 L652.8,439.17 L653.6,439.16 L654.4,439.12 L655.2,439.17 L656.0,439.12 L656.8,439.36 L657.6,439.24 L658.4,439.12 L659.2,438.02 L660.0,437.79 L660.8,438.50 L661.6,438.18 L662.4,439.30 L663.2,439.22 L664.0,439.22 L664.8,439.37 L665.6,439.31 L666.4,439.29 L667.2,439.12 L668.0,439.16 L668.8,439.33 L669.6,439.15 L670.4,439.33 L671.2,438.04 L672.0,438.49 L672.8,438.60 L673.6,437.82 L674.4,438.41 L675.2,439.31 L676.0,439.10 L676.8,439.13 L677.6,439.29 L678.4,439.11 L679.2,439.22 L680.0,439.19 L680.8,439.31 L681.6,439.12 L682.4,439.18 L683.2,439.11 L684.0,439.13 L684.8,439.29 L685.6,439.27 L686.4,439.33 L687.2,439.33 L688.0,439.35 L688.8,439.29 L689.6,439.21 L690.4,439.37 L691.2,439.19 L692.0,439.28 L692.8,439.29 L693.6,439.15 L694.4,439.24 L695.2,439.28 L696.0,439.24 L696.8,439.18 L697.6,439.35 L698.4,439.11 L699.2,439.36 L700.0,439.17 L700.8,437.84 L701.6,438.58 L702.4,437.89 L703.2,438.27 L704.0,438.08 L704.8,438.59 L705.6,438.56 L706.4,438.44 L707.2,437.74 L708.0,438.42 L708.8,437.92 L709.6,437.76 L710.4,439.12 L711.2,439.28 L712.0,439.27 L712.8,439.23 L713.6,439.16 L714.4,439.34 L715.2,439.17 L716.0,439.15 L716.8,439.14 L717.6,439.36 L718.4,439.11 L719.2,439.35 L720.0,439.28 L720.8,439.21 L721.6,439.12 L722.4,439.28 L723.2,439.12 L724.0,439.22 L724.8,439.29 L725.6,439.28 L726.4,439.32 L727.2,439.35 L728.0,439.33 L728.8,439.18 L729.6,439.10 L730.4,439.33 L731.2,439.36 L732.0,439.10 L732.8,439.23 L733.6,439.26 L734.4,439.31 L735.2,439.21 L736.0,439.15 L736.8,439.25 L737.6,439.26 L738.4,439.35 L739.2,439.12 L740.0,439.36 L740.8,439.24 L741.6,439.14 L742.4,439.33 L743.2,439.17 L744.0,439.11 L744.8,439.20 L745.6,439.16 L746.4,439.34 L747.2,439.25 L748.0,439.33 L748.8,439.14 L749.6,439.29 L750.4,439.25 L751.2,439.10 L752.0,439.14 L752.8,439.11 L753.6,439.25 L754.4,439.24 L755.2,439.17 L756.0,439.24 L756.8,439.29 L757.6,439.26 L758.4,439.33 L759.2,439.27 L760.0,439.10 L760.8,439.11 L761.6,439.20 L762.4,439.24 L763.2,439.28 L764.0,439.35 L764.8,439.30 L765.6,439.16 L766.4,439.14 L767.2,439.27 L768.0,439.16 L768.8,439.16 L769.6,439.18 L770.4,439.19 L771.2,439.16 L772.0,439.27 L772.8,439.18 L773.6,439.29 L774.4,439.24 L775.2,439.16 L776.0,439.18 L776.8,439.29 L777.6,439.11 L778.4,439.19 L779.2,439.21 L780.0,439.37 L780.8,438.11 L781.6,438.37 L782.4,438.00 L783.2,438.18 L784.0,437.86 L784.8,438.02 L785.6,437.88 L786.4,438.29 L787.2,438.02 L788.0,437.94 L788.8,437.85 L789.6,438.28 L790.4,439.14 L791.2,439.14 L792.0,439.18 L792.8,439.11 L793.6,439.11 L794.4,439.23 L795.2,439.23 L796.0,439.33 L796.8,439.14 L797.6,439.12 L798.4,439.24 L799.2,439.18 L800.0,439.18 L800.8,439.17 L801.6,439.32 L802.4,439.16 L803.2,439.21 L804.0,439.19 L804.8,439.26 L805.6,439.20 L806.4,439.16 L807.2,439.20 L808.0,439.18 L808.8,439.36 L809.6,439.33 L810.4,439.25 L811.2,439.19 L812.0,439.31 L812.8,439.18 L813.6,439.20 L814.4,439.36 L815.2,439.24 L816.0,439.31 L816.8,439.36 L817.6,439.33 L818.4,439.28 L819.2,439.32 L820.0,439.32 L820.8,439.36 L821.6,439.24 L822.4,439.27 L823.2,439.20 L824.0,439.21 L824.8,439.31 L825.6,439.13 L826.4,439.37 L827.2,439.26 L828.0,439.29 L828.8,439.26 L829.6,439.34 L830.4,437.85 L831.2,438.26 L832.0,438.57 L832.8,438.05 L833.6,438.51 L834.4,438.11 L835.2,438.29 L836.0,438.08 L836.8,437.74 L837.6,437.86 L838.4,438.22 L839.2,437.87 L840.0,438.02 L840.8,439.27 L841.6,439.33 L842.4,439.21 L843.2,439.22 L844.0,439.11 L844.8,439.11 L845.6,439.21 L846.4,439.28 L847.2,439.13 L848.0,439.37 L848.8,439.34 L849.6,439.22 L850.4,439.20 L851.2,439.33 L852.0,439.20 L852.8,439.13 L853.6,439.27 L854.4,439.25 L855.2,438.07 L856.0,438.00 L856.8,437.23 L857.6,437.90 L858.4,437.24 L859.2,437.30 L860.0,437.65 L860.8,438.03 L861.6,437.22 L862.4,437.77 L863.2,437.86 L864.0,437.97 L864.8,437.22 L865.6,437.77 L866.4,438.00 L867.2,437.79 L868.0,438.19 L868.8,437.63 L869.6,437.83 L870.4,439.29 L871.2,439.16 L872.0,439.15 L872.8,439.37 L873.6,439.23 L874.4,439.30 L875.2,439.12 L876.0,439.16 L876.8,439.30 L877.6,439.30 L878.4,439.33 L879.2,439.10 L880.0,439.29 L880.8,439.21 L881.6,439.24 L882.4,439.20 L883.2,439.21 L884.0,439.17 L884.8,439.34 L885.6,439.16 L886.4,439.29 L887.2,439.23 L888.0,439.28 L888.8,439.29 L889.6,439.23 L890.4,439.24 L891.2,439.27 L892.0,439.17 L892.8,439.21 L893.6,439.36 L894.4,439.30 L895.2,439.25 L896.0,439.12 L896.8,439.13 L897.6,439.22 L898.4,439.37 L899.2,439.16 L900.0,439.25 L900.8,439.21 L901.6,439.18 L902.4,439.20 L903.2,439.24 L904.0,439.12 L904.8,439.27 L905.6,439.26 L906.4,439.14 L907.2,439.32 L908.0,439.29 L908.8,439.15 L909.6,439.35 L910.4,439.14 L911.2,439.18 L912.0,439.25 L912.8,439.29 L913.6,439.16 L914.4,439.12 L915.2,439.33 L916.0,439.24 L916.8,439.22 L917.6,439.24 L918.4,439.28 L919.2,439.33 L920.0,439.21 L920.8,439.15 L921.6,439.35 L922.4,439.31 L923.2,439.15 L924.0,439.16 L924.8,439.19 L925.6,439.36 L926.4,439.17 L927.2,439.11 L928.0,439.10 L928.8,439.18 L929.6,439.36 L930.4,439.14 L931.2,439.31 L932.0,439.20 L932.8,439.11 L933.6,439.18 L934.4,439.33 L935.2,439.29 L936.0,439.12 L936.8,439.33 L937.6,439.21 L938.4,439.26 L939.2,439.33 L940.0,439.20 L940.8,439.36 L941.6,439.34 L942.4,439.27 L943.2,439.35 L944.0,439.35 L944.8,439.21 L945.6,439.17 L946.4,439.13 L947.2,439.33 L948.0,439.25 L948.8,439.29 L949.6,439.21 L950.4,439.24 L951.2,439.12 L952.0,439.27 L952.8,439.35 L953.6,439.18 L954.4,439.33 L955.2,439.20 L956.0,439.23 L956.8,439.12 L957.6,439.22 L958.4,439.20 L959.2,439.30 L960.0,439.22 L960.8,437.57 L961.6,436.86 L962.4,437.20 L963.2,437.75 L964.0,437.60 L964.8,437.41 L965.6,436.88 L966.4,437.68 L967.2,436.91 L968.0,437.00 L968.8,437.82 L969.6,436.98 L970.4,437.81 L971.2,437.76 L972.0,437.08 L972.8,437.60 L973.6,436.68 L974.4,437.25 L975.2,437.47 L976.0,436.79 L976.8,437.90 L977.6,436.90 L978.4,437.86 L979.2,437.72 L980.0,436.57 L980.8,432.85 L981.6,434.50 L982.4,434.88 L983.2,431.80 L984.0,432.91 L984.8,432.35 L985.6,434.80 L986.4,433.05 L987.2,434.02 L988.0,434.45 L988.8,434.10 L989.6,433.09 L990.4,434.04 L991.2,433.91 L992.0,434.81 L992.8,432.31 L993.6,432.97 L994.4,432.40 L995.2,433.74 L996.0,432.23 L996.8,433.44 L997.6,433.17 L998.4,433.24 L999.2,432.64 L1000.0,433.88 L1000.8,434.95 L1001.6,435.18 L1002.4,434.57 L1003.2,435.16 L1004.0,432.10 L1004.8,433.57 L1005.6,432.56 L1006.4,435.30 L1007.2,433.61 L1008.0,432.10 L1008.8,433.07 L1009.6,433.76 L1010.4,433.62 L1011.2,434.94 L1012.0,434.74 L1012.8,434.73 L1013.6,433.95 L1014.4,433.91 L1015.2,432.13 L1016.0,434.75 L1016.8,434.39 L1017.6,434.30 L1018.4,434.72 L1019.2,434.27 L1020.0,434.45 L1020.8,433.56 L1021.6,435.18 L1022.4,431.97 L1023.2,433.97 L1024.0,431.92 L1024.8,432.82 L1025.6,432.87 L1026.4,433.60 L1027.2,431.90 L1028.0,434.88 L1028.8,432.89 L1029.6,434.25 L1030.4,432.87 L1031.2,432.67 L1032.0,434.71 L1032.8,434.58 L1033.6,435.21 L1034.4,434.47 L1035.2,435.02 L1036.0,433.86 L1036.8,431.80 L1037.6,433.99 L1038.4,434.18 L1039.2,433.62 L1040.0,434.28 L1040.8,432.84 L1041.6,433.06 L1042.4,435.09 L1043.2,434.96 L1044.0,433.73 L1044.8,433.08 L1045.6,434.15 L1046.4,434.94 L1047.2,433.57 L1048.0,436.38 L1048.8,436.35 L1049.6,434.66 L1050.4,435.73 L1051.2,436.73 L1052.0,435.72 L1052.8,434.92 L1053.6,436.10 L1054.4,436.59 L1055.2,437.21 L1056.0,437.37 L1056.8,436.07 L1057.6,436.92 L1058.4,436.40 L1059.2,437.86 L1060.0,437.72 L1060.8,438.10 L1061.6,437.81 L1062.4,438.55 L1063.2,438.37 L1064.0,438.23 L1064.8,438.32 L1065.6,438.55 L1066.4,438.57 L1067.2,437.73 L1068.0,438.44 L1068.8,438.14 L1069.6,438.24 L1070.4,438.12 L1071.2,438.52 L1072.0,438.32 L1072.8,438.50 L1073.6,438.11 L1074.4,437.77 L1075.2,438.06 L1076.0,437.83 L1076.8,438.41 L1077.6,438.58 L1078.4,438.11 L1079.2,438.16 L1080.0,438.09 L1080.8,438.26 L1081.6,438.04 L1082.4,437.95 L1083.2,437.78 L1084.0,438.32 L1084.8,438.20 L1085.6,437.86 L1086.4,438.40 L1087.2,438.50 L1088.0,438.32 L1088.8,438.52 L1089.6,437.90 L1090.4,437.86 L1091.2,438.32 L1092.0,438.48 L1092.8,438.53 L1093.6,438.38 L1094.4,438.52 L1095.2,438.21 L1096.0,438.08 L1096.8,438.38 L1097.6,438.54 L1098.4,437.97 L1099.2,438.56 L1100.0,438.42 L1100.8,438.34 L1101.6,438.26 L1102.4,438.51 L1103.2,438.22 L1104.0,438.32 L1104.8,437.92 L1105.6,438.10 L1106.4,437.79 L1107.2,438.01 L1108.0,437.92 L1108.8,438.08 L1109.6,438.20 L1110.4,437.86 L1111.2,438.01 L1112.0,437.74 L1112.8,437.94 L1113.6,437.97 L1114.4,438.36 L1115.2,437.87 L1116.0,438.26 L1116.8,438.48 L1117.6,438.54 L1118.4,438.45 L1119.2,438.36 L1120.0,437.99 L1120.8,438.34 L1121.6,438.54 L1122.4,437.91 L1123.2,438.10 L1124.0,438.58 L1124.8,438.55 L1125.6,438.48 L1126.4,438.28 L1127.2,437.83 L1128.0,437.75 L1128.8,438.05 L1129.6,438.39 L1130.4,438.21 L1131.2,438.27 L1132.0,438.30 L1132.8,438.59 L1133.6,438.07 L1134.4,437.86 L1135.2,437.95 L1136.0,438.51 L1136.8,438.12 L1137.6,438.45 L1138.4,437.96 L1139.2,438.20 L1140.0,437.76 L1140.0,441.64 L1139.2,441.20 L1138.4,441.44 L1137.6,440.95 L1136.8,441.28 L1136.0,440.89 L1135.2,441.45 L1134.4,441.54 L1133.6,441.33 L1132.8,440.81 L1132.0,441.10 L1131.2,441.13 L1130.4,441.19 L1129.6,441.01 L1128.8,441.35 L1128.0,441.65 L1127.2,441.57 L1126.4,441.12 L1125.6,440.92 L1124.8,440.85 L1124.0,440.82 L1123.2,441.30 L1122.4,441.49 L1121.6,440.86 L1120.8,441.06 L1120.0,441.41 L1119.2,441.04 L1118.4,440.95 L1117.6,440.86 L1116.8,440.92 L1116.0,441.14 L1115.2,441.53 L1114.4,441.04 L1113.6,441.43 L1112.8,441.46 L1112.0,441.66 L1111.2,441.39 L1110.4,441.54 L1109.6,441.20 L1108.8,441.32 L1108.0,441.48 L1107.2,441.39 L1106.4,441.61 L1105.6,441.30 L1104.8,441.48 L1104.0,441.08 L1103.2,441.18 L1102.4,440.89 L1101.6,441.14 L1100.8,441.06 L1100.0,440.98 L1099.2,440.84 L1098.4,441.43 L1097.6,440.86 L1096.8,441.02 L1096.0,441.32 L1095.2,441.19 L1094.4,440.88 L1093.6,441.02 L1092.8,440.87 L1092.0,440.92 L1091.2,441.08 L1090.4,441.54 L1089.6,441.50 L1088.8,440.88 L1088.0,441.08 L1087.2,440.90 L1086.4,441.00 L1085.6,441.54 L1084.8,441.20 L1084.0,441.08 L1083.2,441.62 L1082.4,441.45 L1081.6,441.36 L1080.8,441.14 L1080.0,441.31 L1079.2,441.24 L1078.4,441.29 L1077.6,440.82 L1076.8,440.99 L1076.0,441.57 L1075.2,441.34 L1074.4,441.63 L1073.6,441.29 L1072.8,440.90 L1072.0,441.08 L1071.2,440.88 L1070.4,441.28 L1069.6,441.16 L1068.8,441.26 L1068.0,440.96 L1067.2,441.67 L1066.4,440.83 L1065.6,440.85 L1064.8,441.08 L1064.0,441.17 L1063.2,441.03 L1062.4,440.85 L1061.6,441.59 L1060.8,441.30 L1060.0,441.68 L1059.2,441.54 L1058.4,443.00 L1057.6,442.48 L1056.8,443.33 L1056.0,442.03 L1055.2,442.19 L1054.4,442.81 L1053.6,443.30 L1052.8,444.48 L1052.0,443.68 L1051.2,442.67 L1050.4,443.67 L1049.6,444.74 L1048.8,443.05 L1048.0,443.02 L1047.2,445.83 L1046.4,444.46 L1045.6,445.25 L1044.8,446.32 L1044.0,445.67 L1043.2,444.44 L1042.4,444.31 L1041.6,446.34 L1040.8,446.56 L1040.0,445.12 L1039.2,445.78 L1038.4,445.22 L1037.6,445.41 L1036.8,447.60 L1036.0,445.54 L1035.2,444.38 L1034.4,444.93 L1033.6,444.19 L1032.8,444.82 L1032.0,444.69 L1031.2,446.73 L1030.4,446.53 L1029.6,445.15 L1028.8,446.51 L1028.0,444.52 L1027.2,447.50 L1026.4,445.80 L1025.6,446.53 L1024.8,446.58 L1024.0,447.48 L1023.2,445.43 L1022.4,447.43 L1021.6,444.22 L1020.8,445.84 L1020.0,444.95 L1019.2,445.13 L1018.4,444.68 L1017.6,445.10 L1016.8,445.01 L1016.0,444.65 L1015.2,447.27 L1014.4,445.49 L1013.6,445.45 L1012.8,444.67 L1012.0,444.66 L1011.2,444.46 L1010.4,445.78 L1009.6,445.64 L1008.8,446.33 L1008.0,447.30 L1007.2,445.79 L1006.4,444.10 L1005.6,446.84 L1004.8,445.83 L1004.0,447.30 L1003.2,444.24 L1002.4,444.83 L1001.6,444.22 L1000.8,444.45 L1000.0,445.52 L999.2,446.76 L998.4,446.16 L997.6,446.23 L996.8,445.96 L996.0,447.17 L995.2,445.66 L994.4,447.00 L993.6,446.43 L992.8,447.09 L992.0,444.59 L991.2,445.49 L990.4,445.36 L989.6,446.31 L988.8,445.30 L988.0,444.95 L987.2,445.38 L986.4,446.35 L985.6,444.60 L984.8,447.05 L984.0,446.49 L983.2,447.60 L982.4,444.52 L981.6,444.90 L980.8,446.55 L980.0,442.83 L979.2,441.68 L978.4,441.54 L977.6,442.50 L976.8,441.50 L976.0,442.61 L975.2,441.93 L974.4,442.15 L973.6,442.72 L972.8,441.80 L972.0,442.32 L971.2,441.64 L970.4,441.59 L969.6,442.42 L968.8,441.58 L968.0,442.40 L967.2,442.49 L966.4,441.72 L965.6,442.52 L964.8,441.99 L964.0,441.80 L963.2,441.65 L962.4,442.20 L961.6,442.54 L960.8,441.83 L960.0,440.18 L959.2,440.10 L958.4,440.20 L957.6,440.18 L956.8,440.28 L956.0,440.17 L955.2,440.20 L954.4,440.07 L953.6,440.22 L952.8,440.05 L952.0,440.13 L951.2,440.28 L950.4,440.16 L949.6,440.19 L948.8,440.11 L948.0,440.15 L947.2,440.07 L946.4,440.27 L945.6,440.23 L944.8,440.19 L944.0,440.05 L943.2,440.05 L942.4,440.13 L941.6,440.06 L940.8,440.04 L940.0,440.20 L939.2,440.07 L938.4,440.14 L937.6,440.19 L936.8,440.07 L936.0,440.28 L935.2,440.11 L934.4,440.07 L933.6,440.22 L932.8,440.29 L932.0,440.20 L931.2,440.09 L930.4,440.26 L929.6,440.04 L928.8,440.22 L928.0,440.30 L927.2,440.29 L926.4,440.23 L925.6,440.04 L924.8,440.21 L924.0,440.24 L923.2,440.25 L922.4,440.09 L921.6,440.05 L920.8,440.25 L920.0,440.19 L919.2,440.07 L918.4,440.12 L917.6,440.16 L916.8,440.18 L916.0,440.16 L915.2,440.07 L914.4,440.28 L913.6,440.24 L912.8,440.11 L912.0,440.15 L911.2,440.22 L910.4,440.26 L909.6,440.05 L908.8,440.25 L908.0,440.11 L907.2,440.08 L906.4,440.26 L905.6,440.14 L904.8,440.13 L904.0,440.28 L903.2,440.16 L902.4,440.20 L901.6,440.22 L900.8,440.19 L900.0,440.15 L899.2,440.24 L898.4,440.03 L897.6,440.18 L896.8,440.27 L896.0,440.28 L895.2,440.15 L894.4,440.10 L893.6,440.04 L892.8,440.19 L892.0,440.23 L891.2,440.13 L890.4,440.16 L889.6,440.17 L888.8,440.11 L888.0,440.12 L887.2,440.17 L886.4,440.11 L885.6,440.24 L884.8,440.06 L884.0,440.23 L883.2,440.19 L882.4,440.20 L881.6,440.16 L880.8,440.19 L880.0,440.11 L879.2,440.30 L878.4,440.07 L877.6,440.10 L876.8,440.10 L876.0,440.24 L875.2,440.28 L874.4,440.10 L873.6,440.17 L872.8,440.03 L872.0,440.25 L871.2,440.24 L870.4,440.11 L869.6,441.57 L868.8,441.77 L868.0,441.21 L867.2,441.61 L866.4,441.40 L865.6,441.63 L864.8,442.18 L864.0,441.43 L863.2,441.54 L862.4,441.63 L861.6,442.18 L860.8,441.37 L860.0,441.75 L859.2,442.10 L858.4,442.16 L857.6,441.50 L856.8,442.17 L856.0,441.40 L855.2,441.33 L854.4,440.15 L853.6,440.13 L852.8,440.27 L852.0,440.20 L851.2,440.07 L850.4,440.20 L849.6,440.18 L848.8,440.06 L848.0,440.03 L847.2,440.27 L846.4,440.12 L845.6,440.19 L844.8,440.29 L844.0,440.29 L843.2,440.18 L842.4,440.19 L841.6,440.07 L840.8,440.13 L840.0,441.38 L839.2,441.53 L838.4,441.18 L837.6,441.54 L836.8,441.66 L836.0,441.32 L835.2,441.11 L834.4,441.29 L833.6,440.89 L832.8,441.35 L832.0,440.83 L831.2,441.14 L830.4,441.55 L829.6,440.06 L828.8,440.14 L828.0,440.11 L827.2,440.14 L826.4,440.03 L825.6,440.27 L824.8,440.09 L824.0,440.19 L823.2,440.20 L822.4,440.13 L821.6,440.16 L820.8,440.04 L820.0,440.08 L819.2,440.08 L818.4,440.12 L817.6,440.07 L816.8,440.04 L816.0,440.09 L815.2,440.16 L814.4,440.04 L813.6,440.20 L812.8,440.22 L812.0,440.09 L811.2,440.21 L810.4,440.15 L809.6,440.07 L808.8,440.04 L808.0,440.22 L807.2,440.20 L806.4,440.24 L805.6,440.20 L804.8,440.14 L804.0,440.21 L803.2,440.19 L802.4,440.24 L801.6,440.08 L800.8,440.23 L800.0,440.22 L799.2,440.22 L798.4,440.16 L797.6,440.28 L796.8,440.26 L796.0,440.07 L795.2,440.17 L794.4,440.17 L793.6,440.29 L792.8,440.29 L792.0,440.22 L791.2,440.26 L790.4,440.26 L789.6,441.12 L788.8,441.55 L788.0,441.46 L787.2,441.38 L786.4,441.11 L785.6,441.52 L784.8,441.38 L784.0,441.54 L783.2,441.22 L782.4,441.40 L781.6,441.03 L780.8,441.29 L780.0,440.03 L779.2,440.19 L778.4,440.21 L777.6,440.29 L776.8,440.11 L776.0,440.22 L775.2,440.24 L774.4,440.16 L773.6,440.11 L772.8,440.22 L772.0,440.13 L771.2,440.24 L770.4,440.21 L769.6,440.22 L768.8,440.24 L768.0,440.24 L767.2,440.13 L766.4,440.26 L765.6,440.24 L764.8,440.10 L764.0,440.05 L763.2,440.12 L762.4,440.16 L761.6,440.20 L760.8,440.29 L760.0,440.30 L759.2,440.13 L758.4,440.07 L757.6,440.14 L756.8,440.11 L756.0,440.16 L755.2,440.23 L754.4,440.16 L753.6,440.15 L752.8,440.29 L752.0,440.26 L751.2,440.30 L750.4,440.15 L749.6,440.11 L748.8,440.26 L748.0,440.07 L747.2,440.15 L746.4,440.06 L745.6,440.24 L744.8,440.20 L744.0,440.29 L743.2,440.23 L742.4,440.07 L741.6,440.26 L740.8,440.16 L740.0,440.04 L739.2,440.28 L738.4,440.05 L737.6,440.14 L736.8,440.15 L736.0,440.25 L735.2,440.19 L734.4,440.09 L733.6,440.14 L732.8,440.17 L732.0,440.30 L731.2,440.04 L730.4,440.07 L729.6,440.30 L728.8,440.22 L728.0,440.07 L727.2,440.05 L726.4,440.08 L725.6,440.12 L724.8,440.11 L724.0,440.18 L723.2,440.28 L722.4,440.12 L721.6,440.28 L720.8,440.19 L720.0,440.12 L719.2,440.05 L718.4,440.29 L717.6,440.04 L716.8,440.26 L716.0,440.25 L715.2,440.23 L714.4,440.06 L713.6,440.24 L712.8,440.17 L712.0,440.13 L711.2,440.12 L710.4,440.28 L709.6,441.64 L708.8,441.48 L708.0,440.98 L707.2,441.66 L706.4,440.96 L705.6,440.84 L704.8,440.81 L704.0,441.32 L703.2,441.13 L702.4,441.51 L701.6,440.82 L700.8,441.56 L700.0,440.23 L699.2,440.04 L698.4,440.29 L697.6,440.05 L696.8,440.22 L696.0,440.16 L695.2,440.12 L694.4,440.16 L693.6,440.25 L692.8,440.11 L692.0,440.12 L691.2,440.21 L690.4,440.03 L689.6,440.19 L688.8,440.11 L688.0,440.05 L687.2,440.07 L686.4,440.07 L685.6,440.13 L684.8,440.11 L684.0,440.27 L683.2,440.29 L682.4,440.22 L681.6,440.28 L680.8,440.09 L680.0,440.21 L679.2,440.18 L678.4,440.29 L677.6,440.11 L676.8,440.27 L676.0,440.30 L675.2,440.09 L674.4,440.99 L673.6,441.58 L672.8,440.80 L672.0,440.91 L671.2,441.36 L670.4,440.07 L669.6,440.25 L668.8,440.07 L668.0,440.24 L667.2,440.28 L666.4,440.11 L665.6,440.09 L664.8,440.03 L664.0,440.18 L663.2,440.18 L662.4,440.10 L661.6,441.22 L660.8,440.90 L660.0,441.61 L659.2,441.38 L658.4,440.28 L657.6,440.16 L656.8,440.04 L656.0,440.28 L655.2,440.23 L654.4,440.28 L653.6,440.24 L652.8,440.23 L652.0,440.20 Z" fill="#3f7984"/><path d="M648,490.9 H1140" stroke="#5a8c88" stroke-width="1"/><path d="M656.0,486.82 L656.8,486.76 L657.6,487.44 L658.4,487.90 L659.2,488.42 L660.0,487.08 L660.8,487.47 L661.6,486.89 L662.4,487.67 L663.2,486.87 L664.0,487.87 L664.8,486.80 L665.6,486.95 L666.4,487.59 L667.2,487.33 L668.0,487.04 L668.8,488.03 L669.6,487.30 L670.4,486.79 L671.2,487.89 L672.0,486.80 L672.8,487.04 L673.6,486.72 L674.4,487.75 L675.2,488.24 L676.0,486.80 L676.8,486.80 L677.6,487.52 L678.4,488.24 L679.2,488.03 L680.0,487.14 L680.8,487.84 L681.6,486.50 L682.4,487.23 L683.2,488.02 L684.0,487.10 L684.8,487.70 L685.6,486.54 L686.4,486.58 L687.2,487.38 L688.0,487.12 L688.8,487.01 L689.6,486.79 L690.4,486.45 L691.2,488.37 L692.0,487.69 L692.8,487.21 L693.6,487.81 L694.4,487.23 L695.2,488.24 L696.0,486.64 L696.8,487.36 L697.6,488.19 L698.4,487.08 L699.2,487.79 L700.0,488.03 L700.8,487.45 L701.6,488.15 L702.4,488.00 L703.2,486.67 L704.0,487.01 L704.8,488.40 L705.6,486.85 L706.4,488.39 L707.2,487.75 L708.0,486.59 L708.8,487.17 L709.6,487.81 L710.4,487.66 L711.2,487.64 L712.0,488.17 L712.8,488.03 L713.6,486.47 L714.4,485.94 L715.2,485.95 L716.0,486.64 L716.8,487.14 L717.6,486.36 L718.4,487.09 L719.2,487.23 L720.0,484.70 L720.8,487.05 L721.6,487.76 L722.4,486.66 L723.2,487.34 L724.0,487.13 L724.8,487.58 L725.6,486.17 L726.4,487.55 L727.2,487.07 L728.0,485.86 L728.8,486.34 L729.6,486.67 L730.4,486.07 L731.2,486.79 L732.0,487.25 L732.8,486.36 L733.6,487.50 L734.4,485.63 L735.2,486.96 L736.0,487.90 L736.8,487.34 L737.6,486.23 L738.4,486.44 L739.2,486.77 L740.0,486.39 L740.8,487.04 L741.6,487.92 L742.4,487.82 L743.2,486.79 L744.0,485.07 L744.8,486.72 L745.6,487.11 L746.4,486.73 L747.2,487.86 L748.0,487.96 L748.8,486.10 L749.6,486.14 L750.4,486.59 L751.2,487.84 L752.0,486.11 L752.8,486.40 L753.6,487.53 L754.4,488.01 L755.2,485.95 L756.0,486.04 L756.8,484.35 L757.6,485.98 L758.4,486.08 L759.2,486.78 L760.0,486.71 L760.8,488.08 L761.6,485.88 L762.4,483.92 L763.2,486.01 L764.0,487.38 L764.8,484.75 L765.6,485.33 L766.4,487.04 L767.2,486.82 L768.0,488.08 L768.8,487.81 L769.6,487.81 L770.4,487.28 L771.2,487.65 L772.0,486.10 L772.8,487.78 L773.6,487.61 L774.4,486.38 L775.2,487.73 L776.0,487.29 L776.8,487.26 L777.6,486.91 L778.4,486.54 L779.2,486.34 L780.0,486.65 L780.8,487.78 L781.6,487.28 L782.4,486.92 L783.2,487.89 L784.0,487.92 L784.8,488.08 L785.6,486.38 L786.4,486.88 L787.2,487.49 L788.0,486.52 L788.8,487.77 L789.6,487.88 L790.4,483.95 L791.2,484.15 L792.0,486.63 L792.8,486.69 L793.6,487.15 L794.4,486.22 L795.2,486.38 L796.0,486.82 L796.8,486.37 L797.6,485.91 L798.4,486.61 L799.2,487.94 L800.0,488.08 L800.8,487.89 L801.6,488.09 L802.4,486.02 L803.2,486.28 L804.0,486.61 L804.8,486.84 L805.6,484.44 L806.4,485.19 L807.2,487.85 L808.0,487.74 L808.8,487.29 L809.6,486.88 L810.4,487.07 L811.2,487.84 L812.0,487.72 L812.8,486.33 L813.6,486.02 L814.4,486.99 L815.2,485.18 L816.0,486.21 L816.8,486.59 L817.6,487.09 L818.4,486.13 L819.2,484.15 L820.0,486.23 L820.8,487.58 L821.6,485.88 L822.4,487.33 L823.2,486.09 L824.0,485.09 L824.8,486.07 L825.6,485.85 L826.4,484.18 L827.2,486.98 L828.0,486.98 L828.8,487.05 L829.6,485.91 L830.4,486.82 L831.2,486.69 L832.0,488.00 L832.8,486.71 L833.6,486.53 L834.4,485.46 L835.2,484.88 L836.0,487.95 L836.8,486.65 L837.6,485.94 L838.4,484.76 L839.2,487.76 L840.0,485.07 L840.8,486.49 L841.6,487.90 L842.4,487.12 L843.2,486.86 L844.0,485.97 L844.8,486.10 L845.6,488.15 L846.4,488.08 L847.2,487.12 L848.0,486.18 L848.8,487.29 L849.6,487.92 L850.4,487.31 L851.2,487.82 L852.0,487.09 L852.8,488.11 L853.6,486.26 L854.4,485.65 L855.2,483.92 L856.0,486.62 L856.8,487.99 L857.6,484.83 L858.4,482.73 L859.2,481.94 L860.0,482.46 L860.8,484.18 L861.6,484.92 L862.4,483.76 L863.2,484.55 L864.0,483.74 L864.8,482.37 L865.6,484.12 L866.4,481.98 L867.2,483.04 L868.0,485.76 L868.8,482.93 L869.6,483.27 L870.4,483.43 L871.2,485.94 L872.0,482.39 L872.8,483.94 L873.6,483.78 L874.4,485.26 L875.2,485.81 L876.0,485.89 L876.8,485.10 L877.6,484.72 L878.4,485.33 L879.2,485.71 L880.0,483.00 L880.8,483.10 L881.6,482.38 L882.4,485.07 L883.2,483.00 L884.0,483.54 L884.8,485.59 L885.6,482.41 L886.4,484.50 L887.2,485.20 L888.0,485.21 L888.8,482.21 L889.6,485.06 L890.4,484.39 L891.2,483.73 L892.0,484.50 L892.8,483.29 L893.6,485.59 L894.4,484.21 L895.2,483.58 L896.0,483.44 L896.8,483.48 L897.6,484.86 L898.4,483.37 L899.2,482.01 L900.0,484.00 L900.8,483.34 L901.6,482.56 L902.4,484.93 L903.2,484.87 L904.0,482.02 L904.8,484.73 L905.6,484.22 L906.4,484.45 L907.2,481.93 L908.0,483.74 L908.8,482.32 L909.6,485.29 L910.4,484.83 L911.2,483.32 L912.0,484.66 L912.8,483.26 L913.6,483.89 L914.4,485.63 L915.2,485.50 L916.0,484.17 L916.8,483.79 L917.6,485.23 L918.4,484.88 L919.2,485.95 L920.0,484.87 L920.8,484.70 L921.6,484.38 L922.4,483.55 L923.2,482.50 L924.0,483.04 L924.8,482.95 L925.6,487.51 L926.4,487.03 L927.2,486.51 L928.0,486.14 L928.8,487.61 L929.6,488.12 L930.4,488.04 L931.2,486.99 L932.0,486.19 L932.8,487.80 L933.6,486.39 L934.4,486.71 L935.2,486.21 L936.0,486.12 L936.8,487.91 L937.6,486.36 L938.4,487.85 L939.2,487.88 L940.0,487.25 L940.8,487.05 L941.6,487.99 L942.4,487.53 L943.2,487.76 L944.0,487.85 L944.8,487.93 L945.6,488.10 L946.4,487.66 L947.2,487.41 L948.0,487.21 L948.8,486.59 L949.6,486.77 L950.4,487.05 L951.2,487.42 L952.0,486.77 L952.8,487.72 L953.6,487.75 L954.4,487.90 L955.2,486.64 L956.0,487.84 L956.8,487.65 L957.6,487.36 L958.4,486.88 L959.2,486.69 L960.0,486.82 L960.8,484.35 L961.6,485.81 L962.4,483.21 L963.2,483.85 L964.0,485.04 L964.8,485.07 L965.6,484.42 L966.4,486.07 L967.2,484.18 L968.0,483.25 L968.8,485.19 L969.6,484.70 L970.4,485.59 L971.2,483.23 L972.0,485.14 L972.8,485.20 L973.6,483.93 L974.4,485.16 L975.2,483.24 L976.0,485.02 L976.8,484.38 L977.6,485.40 L978.4,484.38 L979.2,484.80 L980.0,486.13 L980.8,483.30 L981.6,485.92 L982.4,484.43 L983.2,484.06 L984.0,484.81 L984.8,485.32 L985.6,484.87 L986.4,482.90 L987.2,486.46 L988.0,483.31 L988.8,484.31 L989.6,484.77 L990.4,484.20 L991.2,484.20 L992.0,483.51 L992.8,482.98 L993.6,484.65 L994.4,485.24 L995.2,485.20 L996.0,483.22 L996.8,484.77 L997.6,486.25 L998.4,484.39 L999.2,486.09 L1000.0,485.25 L1000.8,484.16 L1001.6,484.29 L1002.4,484.57 L1003.2,483.51 L1004.0,484.31 L1004.8,483.01 L1005.6,483.58 L1006.4,485.55 L1007.2,483.69 L1008.0,485.20 L1008.8,483.10 L1009.6,484.27 L1010.4,484.99 L1011.2,485.87 L1012.0,483.45 L1012.8,485.23 L1013.6,486.44 L1014.4,483.61 L1015.2,486.48 L1016.0,486.34 L1016.8,486.39 L1017.6,484.18 L1018.4,484.48 L1019.2,484.76 L1020.0,483.13 L1020.8,484.81 L1021.6,485.76 L1022.4,482.91 L1023.2,486.10 L1024.0,486.32 L1024.8,485.70 L1025.6,482.98 L1026.4,485.00 L1027.2,485.22 L1028.0,485.17 L1028.8,485.17 L1029.6,483.78 L1030.4,484.20 L1031.2,485.49 L1032.0,485.81 L1032.8,483.56 L1033.6,484.48 L1034.4,484.69 L1035.2,485.78 L1036.0,482.98 L1036.8,484.60 L1037.6,483.19 L1038.4,484.07 L1039.2,484.20 L1040.0,486.41 L1040.8,483.21 L1041.6,483.42 L1042.4,486.22 L1043.2,486.21 L1044.0,484.07 L1044.8,484.10 L1045.6,485.81 L1046.4,482.93 L1047.2,486.14 L1048.0,484.45 L1048.8,484.76 L1049.6,485.31 L1050.4,484.09 L1051.2,484.91 L1052.0,483.74 L1052.8,483.73 L1053.6,486.47 L1054.4,485.33 L1055.2,484.55 L1056.0,485.43 L1056.8,484.34 L1057.6,486.40 L1058.4,486.12 L1059.2,484.66 L1060.0,485.73 L1060.8,485.75 L1061.6,485.01 L1062.4,484.36 L1063.2,484.15 L1064.0,484.35 L1064.8,484.71 L1065.6,484.94 L1066.4,483.37 L1067.2,483.39 L1068.0,483.27 L1068.8,483.10 L1069.6,484.08 L1070.4,485.78 L1071.2,483.97 L1072.0,485.48 L1072.8,485.42 L1073.6,485.06 L1074.4,486.38 L1075.2,484.92 L1076.0,485.79 L1076.8,485.66 L1077.6,484.95 L1078.4,483.78 L1079.2,484.15 L1080.0,485.37 L1080.8,483.90 L1081.6,485.04 L1082.4,485.21 L1083.2,485.03 L1084.0,485.47 L1084.8,485.95 L1085.6,483.01 L1086.4,484.35 L1087.2,484.14 L1088.0,484.30 L1088.8,484.70 L1089.6,484.23 L1090.4,486.47 L1091.2,486.26 L1092.0,484.58 L1092.8,484.83 L1093.6,486.46 L1094.4,485.74 L1095.2,485.40 L1096.0,483.02 L1096.8,483.49 L1097.6,486.36 L1098.4,485.10 L1099.2,485.24 L1100.0,486.01 L1100.8,485.46 L1101.6,482.94 L1102.4,483.20 L1103.2,485.53 L1104.0,483.69 L1104.8,486.03 L1105.6,484.22 L1106.4,486.19 L1107.2,484.19 L1108.0,484.35 L1108.8,482.92 L1109.6,484.42 L1110.4,483.22 L1111.2,485.63 L1112.0,484.25 L1112.8,485.75 L1113.6,486.25 L1114.4,482.96 L1115.2,486.40 L1116.0,485.23 L1116.8,485.36 L1117.6,485.77 L1118.4,483.42 L1119.2,483.79 L1120.0,485.12 L1120.8,484.47 L1121.6,483.51 L1122.4,486.29 L1123.2,484.14 L1124.0,483.43 L1124.8,484.32 L1125.6,484.61 L1126.4,485.61 L1127.2,485.89 L1128.0,485.86 L1128.8,485.21 L1129.6,485.47 L1130.4,483.69 L1131.2,485.92 L1132.0,486.05 L1132.8,483.63 L1133.6,484.87 L1134.4,486.09 L1135.2,483.56 L1136.0,486.36 L1136.8,485.16 L1137.6,485.04 L1138.4,484.63 L1139.2,485.64 L1140.0,483.16 L1140.0,498.64 L1139.2,496.16 L1138.4,497.17 L1137.6,496.76 L1136.8,496.64 L1136.0,495.44 L1135.2,498.24 L1134.4,495.71 L1133.6,496.93 L1132.8,498.17 L1132.0,495.75 L1131.2,495.88 L1130.4,498.11 L1129.6,496.33 L1128.8,496.59 L1128.0,495.94 L1127.2,495.91 L1126.4,496.19 L1125.6,497.19 L1124.8,497.48 L1124.0,498.37 L1123.2,497.66 L1122.4,495.51 L1121.6,498.29 L1120.8,497.33 L1120.0,496.68 L1119.2,498.01 L1118.4,498.38 L1117.6,496.03 L1116.8,496.44 L1116.0,496.57 L1115.2,495.40 L1114.4,498.84 L1113.6,495.55 L1112.8,496.05 L1112.0,497.55 L1111.2,496.17 L1110.4,498.58 L1109.6,497.38 L1108.8,498.88 L1108.0,497.45 L1107.2,497.61 L1106.4,495.61 L1105.6,497.58 L1104.8,495.77 L1104.0,498.11 L1103.2,496.27 L1102.4,498.60 L1101.6,498.86 L1100.8,496.34 L1100.0,495.79 L1099.2,496.56 L1098.4,496.70 L1097.6,495.44 L1096.8,498.31 L1096.0,498.78 L1095.2,496.40 L1094.4,496.06 L1093.6,495.34 L1092.8,496.97 L1092.0,497.22 L1091.2,495.54 L1090.4,495.33 L1089.6,497.57 L1088.8,497.10 L1088.0,497.50 L1087.2,497.66 L1086.4,497.45 L1085.6,498.79 L1084.8,495.85 L1084.0,496.33 L1083.2,496.77 L1082.4,496.59 L1081.6,496.76 L1080.8,497.90 L1080.0,496.43 L1079.2,497.65 L1078.4,498.02 L1077.6,496.85 L1076.8,496.14 L1076.0,496.01 L1075.2,496.88 L1074.4,495.42 L1073.6,496.74 L1072.8,496.38 L1072.0,496.32 L1071.2,497.83 L1070.4,496.02 L1069.6,497.72 L1068.8,498.70 L1068.0,498.53 L1067.2,498.41 L1066.4,498.43 L1065.6,496.86 L1064.8,497.09 L1064.0,497.45 L1063.2,497.65 L1062.4,497.44 L1061.6,496.79 L1060.8,496.05 L1060.0,496.07 L1059.2,497.14 L1058.4,495.68 L1057.6,495.40 L1056.8,497.46 L1056.0,496.37 L1055.2,497.25 L1054.4,496.47 L1053.6,495.33 L1052.8,498.07 L1052.0,498.06 L1051.2,496.89 L1050.4,497.71 L1049.6,496.49 L1048.8,497.04 L1048.0,497.35 L1047.2,495.66 L1046.4,498.87 L1045.6,495.99 L1044.8,497.70 L1044.0,497.73 L1043.2,495.59 L1042.4,495.58 L1041.6,498.38 L1040.8,498.59 L1040.0,495.39 L1039.2,497.60 L1038.4,497.73 L1037.6,498.61 L1036.8,497.20 L1036.0,498.82 L1035.2,496.02 L1034.4,497.11 L1033.6,497.32 L1032.8,498.24 L1032.0,495.99 L1031.2,496.31 L1030.4,497.60 L1029.6,498.02 L1028.8,496.63 L1028.0,496.63 L1027.2,496.58 L1026.4,496.80 L1025.6,498.82 L1024.8,496.10 L1024.0,495.48 L1023.2,495.70 L1022.4,498.89 L1021.6,496.04 L1020.8,496.99 L1020.0,498.67 L1019.2,497.04 L1018.4,497.32 L1017.6,497.62 L1016.8,495.41 L1016.0,495.46 L1015.2,495.32 L1014.4,498.19 L1013.6,495.36 L1012.8,496.57 L1012.0,498.35 L1011.2,495.93 L1010.4,496.81 L1009.6,497.53 L1008.8,498.70 L1008.0,496.60 L1007.2,498.11 L1006.4,496.25 L1005.6,498.22 L1004.8,498.79 L1004.0,497.49 L1003.2,498.29 L1002.4,497.23 L1001.6,497.51 L1000.8,497.64 L1000.0,496.55 L999.2,495.71 L998.4,497.41 L997.6,495.55 L996.8,497.03 L996.0,498.58 L995.2,496.60 L994.4,496.56 L993.6,497.15 L992.8,498.82 L992.0,498.29 L991.2,497.60 L990.4,497.60 L989.6,497.03 L988.8,497.49 L988.0,498.49 L987.2,495.34 L986.4,498.90 L985.6,496.93 L984.8,496.48 L984.0,496.99 L983.2,497.74 L982.4,497.37 L981.6,495.88 L980.8,498.50 L980.0,495.67 L979.2,497.00 L978.4,497.42 L977.6,496.40 L976.8,497.42 L976.0,496.78 L975.2,498.56 L974.4,496.64 L973.6,497.87 L972.8,496.60 L972.0,496.66 L971.2,498.57 L970.4,496.21 L969.6,497.10 L968.8,496.61 L968.0,498.55 L967.2,497.62 L966.4,495.73 L965.6,497.38 L964.8,496.73 L964.0,496.76 L963.2,497.95 L962.4,498.59 L961.6,495.99 L960.8,497.45 L960.0,494.98 L959.2,495.11 L958.4,494.92 L957.6,494.44 L956.8,494.15 L956.0,493.96 L955.2,495.16 L954.4,493.90 L953.6,494.05 L952.8,494.08 L952.0,495.03 L951.2,494.38 L950.4,494.75 L949.6,495.03 L948.8,495.21 L948.0,494.59 L947.2,494.39 L946.4,494.14 L945.6,493.70 L944.8,493.87 L944.0,493.95 L943.2,494.04 L942.4,494.27 L941.6,493.81 L940.8,494.75 L940.0,494.55 L939.2,493.92 L938.4,493.95 L937.6,495.44 L936.8,493.89 L936.0,495.68 L935.2,495.59 L934.4,495.09 L933.6,495.41 L932.8,494.00 L932.0,495.61 L931.2,494.81 L930.4,493.76 L929.6,493.68 L928.8,494.19 L928.0,495.66 L927.2,495.29 L926.4,494.77 L925.6,494.29 L924.8,498.85 L924.0,498.76 L923.2,499.30 L922.4,498.25 L921.6,497.42 L920.8,497.10 L920.0,496.93 L919.2,495.85 L918.4,496.92 L917.6,496.57 L916.8,498.01 L916.0,497.63 L915.2,496.30 L914.4,496.17 L913.6,497.91 L912.8,498.54 L912.0,497.14 L911.2,498.48 L910.4,496.97 L909.6,496.51 L908.8,499.48 L908.0,498.06 L907.2,499.87 L906.4,497.35 L905.6,497.58 L904.8,497.07 L904.0,499.78 L903.2,496.93 L902.4,496.87 L901.6,499.24 L900.8,498.46 L900.0,497.80 L899.2,499.79 L898.4,498.43 L897.6,496.94 L896.8,498.32 L896.0,498.36 L895.2,498.22 L894.4,497.59 L893.6,496.21 L892.8,498.51 L892.0,497.30 L891.2,498.07 L890.4,497.41 L889.6,496.74 L888.8,499.59 L888.0,496.59 L887.2,496.60 L886.4,497.30 L885.6,499.39 L884.8,496.21 L884.0,498.26 L883.2,498.80 L882.4,496.73 L881.6,499.42 L880.8,498.70 L880.0,498.80 L879.2,496.09 L878.4,496.47 L877.6,497.08 L876.8,496.70 L876.0,495.91 L875.2,495.99 L874.4,496.54 L873.6,498.02 L872.8,497.86 L872.0,499.41 L871.2,495.86 L870.4,498.37 L869.6,498.53 L868.8,498.87 L868.0,496.04 L867.2,498.76 L866.4,499.82 L865.6,497.68 L864.8,499.43 L864.0,498.06 L863.2,497.25 L862.4,498.04 L861.6,496.88 L860.8,497.62 L860.0,499.34 L859.2,499.86 L858.4,499.07 L857.6,496.97 L856.8,493.81 L856.0,495.18 L855.2,497.88 L854.4,496.15 L853.6,495.54 L852.8,493.69 L852.0,494.71 L851.2,493.98 L850.4,494.49 L849.6,493.88 L848.8,494.51 L848.0,495.62 L847.2,494.68 L846.4,493.72 L845.6,493.65 L844.8,495.70 L844.0,495.83 L843.2,494.94 L842.4,494.68 L841.6,493.90 L840.8,495.31 L840.0,496.73 L839.2,494.04 L838.4,497.04 L837.6,495.86 L836.8,495.15 L836.0,493.85 L835.2,496.92 L834.4,496.34 L833.6,495.27 L832.8,495.09 L832.0,493.80 L831.2,495.11 L830.4,494.98 L829.6,495.89 L828.8,494.75 L828.0,494.82 L827.2,494.82 L826.4,497.62 L825.6,495.95 L824.8,495.73 L824.0,496.71 L823.2,495.71 L822.4,494.47 L821.6,495.92 L820.8,494.22 L820.0,495.57 L819.2,497.65 L818.4,495.67 L817.6,494.71 L816.8,495.21 L816.0,495.59 L815.2,496.62 L814.4,494.81 L813.6,495.78 L812.8,495.47 L812.0,494.08 L811.2,493.96 L810.4,494.73 L809.6,494.92 L808.8,494.51 L808.0,494.06 L807.2,493.95 L806.4,496.61 L805.6,497.36 L804.8,494.96 L804.0,495.19 L803.2,495.52 L802.4,495.78 L801.6,493.71 L800.8,493.91 L800.0,493.72 L799.2,493.86 L798.4,495.19 L797.6,495.89 L796.8,495.43 L796.0,494.98 L795.2,495.42 L794.4,495.58 L793.6,494.65 L792.8,495.11 L792.0,495.17 L791.2,497.65 L790.4,497.85 L789.6,493.92 L788.8,494.03 L788.0,495.28 L787.2,494.31 L786.4,494.92 L785.6,495.42 L784.8,493.72 L784.0,493.88 L783.2,493.91 L782.4,494.88 L781.6,494.52 L780.8,494.02 L780.0,495.15 L779.2,495.46 L778.4,495.26 L777.6,494.89 L776.8,494.54 L776.0,494.51 L775.2,494.07 L774.4,495.42 L773.6,494.19 L772.8,494.02 L772.0,495.70 L771.2,494.15 L770.4,494.52 L769.6,493.99 L768.8,493.99 L768.0,493.72 L767.2,494.98 L766.4,494.76 L765.6,496.47 L764.8,497.05 L764.0,494.42 L763.2,495.79 L762.4,497.88 L761.6,495.92 L760.8,493.72 L760.0,495.09 L759.2,495.02 L758.4,495.72 L757.6,495.82 L756.8,497.45 L756.0,495.76 L755.2,495.85 L754.4,493.79 L753.6,494.27 L752.8,495.40 L752.0,495.69 L751.2,493.96 L750.4,495.21 L749.6,495.66 L748.8,495.70 L748.0,493.84 L747.2,493.94 L746.4,495.07 L745.6,494.69 L744.8,495.08 L744.0,496.73 L743.2,495.01 L742.4,493.98 L741.6,493.88 L740.8,494.76 L740.0,495.41 L739.2,495.03 L738.4,495.36 L737.6,495.57 L736.8,494.46 L736.0,493.90 L735.2,494.84 L734.4,496.17 L733.6,494.30 L732.8,495.44 L732.0,494.55 L731.2,495.01 L730.4,495.73 L729.6,495.13 L728.8,495.46 L728.0,495.94 L727.2,494.73 L726.4,494.25 L725.6,495.63 L724.8,494.22 L724.0,494.67 L723.2,494.46 L722.4,495.14 L721.6,494.04 L720.8,494.75 L720.0,497.10 L719.2,494.57 L718.4,494.71 L717.6,495.44 L716.8,494.66 L716.0,495.16 L715.2,495.85 L714.4,495.86 L713.6,495.33 L712.8,493.77 L712.0,493.63 L711.2,494.16 L710.4,494.14 L709.6,493.99 L708.8,494.63 L708.0,495.21 L707.2,494.05 L706.4,493.41 L705.6,494.95 L704.8,493.40 L704.0,494.79 L703.2,495.13 L702.4,493.80 L701.6,493.65 L700.8,494.35 L700.0,493.77 L699.2,494.01 L698.4,494.72 L697.6,493.61 L696.8,494.44 L696.0,495.16 L695.2,493.56 L694.4,494.57 L693.6,493.99 L692.8,494.59 L692.0,494.11 L691.2,493.43 L690.4,495.35 L689.6,495.01 L688.8,494.79 L688.0,494.68 L687.2,494.42 L686.4,495.22 L685.6,495.26 L684.8,494.10 L684.0,494.70 L683.2,493.78 L682.4,494.57 L681.6,495.30 L680.8,493.96 L680.0,494.66 L679.2,493.77 L678.4,493.56 L677.6,494.28 L676.8,495.00 L676.0,495.00 L675.2,493.56 L674.4,494.05 L673.6,495.08 L672.8,494.76 L672.0,495.00 L671.2,493.91 L670.4,495.01 L669.6,494.50 L668.8,493.77 L668.0,494.76 L667.2,494.47 L666.4,494.21 L665.6,494.85 L664.8,495.00 L664.0,493.93 L663.2,494.93 L662.4,494.13 L661.6,494.91 L660.8,494.33 L660.0,494.72 L659.2,493.38 L658.4,493.90 L657.6,494.36 L656.8,495.04 L656.0,494.98 Z" fill="#5a8c88"/><path d="M648,542.6 H1140" stroke="#6e9c8c" stroke-width="1"/><path d="M656.0,541.56 L656.8,541.67 L657.6,541.34 L658.4,541.73 L659.2,541.41 L660.0,541.53 L660.8,541.68 L661.6,541.35 L662.4,541.69 L663.2,541.41 L664.0,541.67 L664.8,541.65 L665.6,541.41 L666.4,541.12 L667.2,541.63 L668.0,541.56 L668.8,541.27 L669.6,541.04 L670.4,541.30 L671.2,541.43 L672.0,541.02 L672.8,541.69 L673.6,541.10 L674.4,541.51 L675.2,541.62 L676.0,541.64 L676.8,541.50 L677.6,541.13 L678.4,541.59 L679.2,541.30 L680.0,541.26 L680.8,541.45 L681.6,541.33 L682.4,541.67 L683.2,541.68 L684.0,541.57 L684.8,541.23 L685.6,541.41 L686.4,541.49 L687.2,541.30 L688.0,541.39 L688.8,541.50 L689.6,541.15 L690.4,541.22 L691.2,541.54 L692.0,541.31 L692.8,541.34 L693.6,541.09 L694.4,541.19 L695.2,541.51 L696.0,541.01 L696.8,541.63 L697.6,541.42 L698.4,541.17 L699.2,541.61 L700.0,541.37 L700.8,541.75 L701.6,541.32 L702.4,541.26 L703.2,541.39 L704.0,541.18 L704.8,541.56 L705.6,541.31 L706.4,541.37 L707.2,541.38 L708.0,541.47 L708.8,541.21 L709.6,541.14 L710.4,541.45 L711.2,541.33 L712.0,541.73 L712.8,541.30 L713.6,541.34 L714.4,541.10 L715.2,541.22 L716.0,541.58 L716.8,541.51 L717.6,541.32 L718.4,541.76 L719.2,541.46 L720.0,541.66 L720.8,541.70 L721.6,541.74 L722.4,541.26 L723.2,541.69 L724.0,541.61 L724.8,541.51 L725.6,541.19 L726.4,541.72 L727.2,541.47 L728.0,541.40 L728.8,541.18 L729.6,541.22 L730.4,541.19 L731.2,541.59 L732.0,541.49 L732.8,541.53 L733.6,541.18 L734.4,541.13 L735.2,541.67 L736.0,541.66 L736.8,541.62 L737.6,541.62 L738.4,541.45 L739.2,541.38 L740.0,541.60 L740.8,541.77 L741.6,541.49 L742.4,541.53 L743.2,541.39 L744.0,541.13 L744.8,541.31 L745.6,541.43 L746.4,541.36 L747.2,541.32 L748.0,541.74 L748.8,541.17 L749.6,541.25 L750.4,541.18 L751.2,541.24 L752.0,541.51 L752.8,541.51 L753.6,541.71 L754.4,541.35 L755.2,541.73 L756.0,541.73 L756.8,541.63 L757.6,541.67 L758.4,541.55 L759.2,541.74 L760.0,541.77 L760.8,541.67 L761.6,541.71 L762.4,541.53 L763.2,541.76 L764.0,541.18 L764.8,541.36 L765.6,541.67 L766.4,541.60 L767.2,541.54 L768.0,541.53 L768.8,541.69 L769.6,541.20 L770.4,539.11 L771.2,539.94 L772.0,539.91 L772.8,540.54 L773.6,540.51 L774.4,540.14 L775.2,540.26 L776.0,539.37 L776.8,540.42 L777.6,540.64 L778.4,539.18 L779.2,539.84 L780.0,540.44 L780.8,539.82 L781.6,540.63 L782.4,539.84 L783.2,539.13 L784.0,539.32 L784.8,539.58 L785.6,540.26 L786.4,540.10 L787.2,540.41 L788.0,539.46 L788.8,539.84 L789.6,539.45 L790.4,540.16 L791.2,540.32 L792.0,539.40 L792.8,539.12 L793.6,539.33 L794.4,539.41 L795.2,539.39 L796.0,539.51 L796.8,540.32 L797.6,539.86 L798.4,540.11 L799.2,540.63 L800.0,540.63 L800.8,541.59 L801.6,541.60 L802.4,541.31 L803.2,541.13 L804.0,541.47 L804.8,541.14 L805.6,541.11 L806.4,541.13 L807.2,541.53 L808.0,541.63 L808.8,541.62 L809.6,541.64 L810.4,541.64 L811.2,541.35 L812.0,541.17 L812.8,541.21 L813.6,541.45 L814.4,541.33 L815.2,541.24 L816.0,541.72 L816.8,541.33 L817.6,541.16 L818.4,541.25 L819.2,541.27 L820.0,541.45 L820.8,541.65 L821.6,541.24 L822.4,541.55 L823.2,541.23 L824.0,541.12 L824.8,541.51 L825.6,541.50 L826.4,541.14 L827.2,541.29 L828.0,541.66 L828.8,541.69 L829.6,541.67 L830.4,541.16 L831.2,541.23 L832.0,541.68 L832.8,541.22 L833.6,541.11 L834.4,541.33 L835.2,541.54 L836.0,541.40 L836.8,541.69 L837.6,541.77 L838.4,541.12 L839.2,541.34 L840.0,541.42 L840.8,541.14 L841.6,541.48 L842.4,541.19 L843.2,541.22 L844.0,541.63 L844.8,541.61 L845.6,541.58 L846.4,541.61 L847.2,541.38 L848.0,541.60 L848.8,541.49 L849.6,541.69 L850.4,541.16 L851.2,541.54 L852.0,541.47 L852.8,541.38 L853.6,541.16 L854.4,541.49 L855.2,541.16 L856.0,541.44 L856.8,541.42 L857.6,541.42 L858.4,541.76 L859.2,541.48 L860.0,541.65 L860.8,541.77 L861.6,541.24 L862.4,541.66 L863.2,541.46 L864.0,541.29 L864.8,541.40 L865.6,541.55 L866.4,541.43 L867.2,541.40 L868.0,541.25 L868.8,541.70 L869.6,541.40 L870.4,541.61 L871.2,541.59 L872.0,541.25 L872.8,541.43 L873.6,541.40 L874.4,541.26 L875.2,541.16 L876.0,541.48 L876.8,541.36 L877.6,541.43 L878.4,541.43 L879.2,541.31 L880.0,541.47 L880.8,541.42 L881.6,541.45 L882.4,541.14 L883.2,541.30 L884.0,541.18 L884.8,541.14 L885.6,541.60 L886.4,541.40 L887.2,541.14 L888.0,541.21 L888.8,541.68 L889.6,541.69 L890.4,541.48 L891.2,541.73 L892.0,541.61 L892.8,541.73 L893.6,541.32 L894.4,541.25 L895.2,541.17 L896.0,541.67 L896.8,541.29 L897.6,541.33 L898.4,541.68 L899.2,541.18 L900.0,541.12 L900.8,540.65 L901.6,539.66 L902.4,540.41 L903.2,540.29 L904.0,539.61 L904.8,539.83 L905.6,540.73 L906.4,540.37 L907.2,540.25 L908.0,540.49 L908.8,540.69 L909.6,540.52 L910.4,539.98 L911.2,540.92 L912.0,540.20 L912.8,540.36 L913.6,540.93 L914.4,540.50 L915.2,541.35 L916.0,541.43 L916.8,541.73 L917.6,541.11 L918.4,541.24 L919.2,541.12 L920.0,541.70 L920.8,541.60 L921.6,541.75 L922.4,541.25 L923.2,541.59 L924.0,541.69 L924.8,541.49 L925.6,541.16 L926.4,541.22 L927.2,541.60 L928.0,541.67 L928.8,541.15 L929.6,541.39 L930.4,541.30 L931.2,541.71 L932.0,541.74 L932.8,541.31 L933.6,541.49 L934.4,541.73 L935.2,541.14 L936.0,541.35 L936.8,541.23 L937.6,541.72 L938.4,541.20 L939.2,541.73 L940.0,541.19 L940.8,541.47 L941.6,541.55 L942.4,541.40 L943.2,541.15 L944.0,541.59 L944.8,541.69 L945.6,541.42 L946.4,541.61 L947.2,541.70 L948.0,541.67 L948.8,541.74 L949.6,541.64 L950.4,541.56 L951.2,541.57 L952.0,541.26 L952.8,541.58 L953.6,541.44 L954.4,541.65 L955.2,541.54 L956.0,541.76 L956.8,541.61 L957.6,541.76 L958.4,541.28 L959.2,541.40 L960.0,541.65 L960.8,541.45 L961.6,541.14 L962.4,541.70 L963.2,541.22 L964.0,541.48 L964.8,541.44 L965.6,541.21 L966.4,541.51 L967.2,541.43 L968.0,541.31 L968.8,541.11 L969.6,541.54 L970.4,541.21 L971.2,541.30 L972.0,541.35 L972.8,541.50 L973.6,541.54 L974.4,541.74 L975.2,541.69 L976.0,541.73 L976.8,541.27 L977.6,541.60 L978.4,541.66 L979.2,541.72 L980.0,541.21 L980.8,541.19 L981.6,541.32 L982.4,541.58 L983.2,541.61 L984.0,541.58 L984.8,541.46 L985.6,541.67 L986.4,541.47 L987.2,541.60 L988.0,541.13 L988.8,541.12 L989.6,541.41 L990.4,541.61 L991.2,541.12 L992.0,541.57 L992.8,541.53 L993.6,541.77 L994.4,541.52 L995.2,541.45 L996.0,541.44 L996.8,541.64 L997.6,541.43 L998.4,541.77 L999.2,541.60 L1000.0,541.71 L1000.8,541.51 L1001.6,541.75 L1002.4,541.76 L1003.2,541.57 L1004.0,541.62 L1004.8,541.38 L1005.6,541.42 L1006.4,541.27 L1007.2,541.33 L1008.0,541.29 L1008.8,541.18 L1009.6,541.51 L1010.4,541.55 L1011.2,541.11 L1012.0,541.67 L1012.8,541.29 L1013.6,541.34 L1014.4,541.75 L1015.2,541.21 L1016.0,541.17 L1016.8,541.35 L1017.6,541.28 L1018.4,541.23 L1019.2,541.68 L1020.0,541.42 L1020.8,541.43 L1021.6,541.21 L1022.4,541.23 L1023.2,541.22 L1024.0,541.38 L1024.8,541.17 L1025.6,541.31 L1026.4,541.31 L1027.2,541.62 L1028.0,541.75 L1028.8,541.69 L1029.6,541.53 L1030.4,541.70 L1031.2,541.21 L1032.0,541.40 L1032.8,541.35 L1033.6,541.35 L1034.4,541.32 L1035.2,541.44 L1036.0,541.77 L1036.8,541.24 L1037.6,541.27 L1038.4,541.44 L1039.2,541.41 L1040.0,541.33 L1040.8,541.73 L1041.6,541.28 L1042.4,541.60 L1043.2,541.72 L1044.0,541.60 L1044.8,541.28 L1045.6,541.64 L1046.4,541.28 L1047.2,541.12 L1048.0,541.44 L1048.8,541.52 L1049.6,541.45 L1050.4,541.31 L1051.2,541.26 L1052.0,541.36 L1052.8,541.34 L1053.6,541.72 L1054.4,541.68 L1055.2,541.60 L1056.0,541.27 L1056.8,541.57 L1057.6,541.39 L1058.4,541.77 L1059.2,541.73 L1060.0,541.59 L1060.8,541.32 L1061.6,541.31 L1062.4,541.32 L1063.2,541.58 L1064.0,541.43 L1064.8,541.46 L1065.6,541.46 L1066.4,541.70 L1067.2,541.17 L1068.0,541.64 L1068.8,541.11 L1069.6,541.14 L1070.4,541.76 L1071.2,541.47 L1072.0,541.22 L1072.8,541.12 L1073.6,541.47 L1074.4,541.59 L1075.2,541.63 L1076.0,541.14 L1076.8,541.63 L1077.6,541.38 L1078.4,541.68 L1079.2,541.42 L1080.0,541.13 L1080.8,541.69 L1081.6,541.22 L1082.4,541.43 L1083.2,541.18 L1084.0,541.30 L1084.8,541.62 L1085.6,541.17 L1086.4,541.45 L1087.2,541.76 L1088.0,541.77 L1088.8,541.44 L1089.6,541.47 L1090.4,541.57 L1091.2,541.68 L1092.0,541.54 L1092.8,541.56 L1093.6,541.21 L1094.4,541.77 L1095.2,541.27 L1096.0,541.21 L1096.8,541.69 L1097.6,541.15 L1098.4,541.29 L1099.2,541.17 L1100.0,541.58 L1100.8,541.52 L1101.6,541.51 L1102.4,541.10 L1103.2,541.38 L1104.0,541.53 L1104.8,541.49 L1105.6,541.59 L1106.4,541.74 L1107.2,541.71 L1108.0,541.21 L1108.8,541.58 L1109.6,541.14 L1110.4,541.61 L1111.2,541.60 L1112.0,541.43 L1112.8,541.65 L1113.6,541.52 L1114.4,541.13 L1115.2,541.18 L1116.0,541.23 L1116.8,541.35 L1117.6,541.16 L1118.4,541.14 L1119.2,541.40 L1120.0,541.29 L1120.8,541.74 L1121.6,541.28 L1122.4,541.47 L1123.2,541.27 L1124.0,541.34 L1124.8,541.58 L1125.6,541.74 L1126.4,541.15 L1127.2,541.69 L1128.0,541.46 L1128.8,541.54 L1129.6,541.57 L1130.4,541.28 L1131.2,541.12 L1132.0,541.60 L1132.8,541.33 L1133.6,541.57 L1134.4,541.40 L1135.2,541.51 L1136.0,541.66 L1136.8,541.67 L1137.6,541.63 L1138.4,541.16 L1139.2,541.44 L1140.0,541.63 L1140.0,543.57 L1139.2,543.76 L1138.4,544.04 L1137.6,543.57 L1136.8,543.53 L1136.0,543.54 L1135.2,543.69 L1134.4,543.80 L1133.6,543.63 L1132.8,543.87 L1132.0,543.60 L1131.2,544.08 L1130.4,543.92 L1129.6,543.63 L1128.8,543.66 L1128.0,543.74 L1127.2,543.51 L1126.4,544.05 L1125.6,543.46 L1124.8,543.62 L1124.0,543.86 L1123.2,543.93 L1122.4,543.73 L1121.6,543.92 L1120.8,543.46 L1120.0,543.91 L1119.2,543.80 L1118.4,544.06 L1117.6,544.04 L1116.8,543.85 L1116.0,543.97 L1115.2,544.02 L1114.4,544.07 L1113.6,543.68 L1112.8,543.55 L1112.0,543.77 L1111.2,543.60 L1110.4,543.59 L1109.6,544.06 L1108.8,543.62 L1108.0,543.99 L1107.2,543.49 L1106.4,543.46 L1105.6,543.61 L1104.8,543.71 L1104.0,543.67 L1103.2,543.82 L1102.4,544.10 L1101.6,543.69 L1100.8,543.68 L1100.0,543.62 L1099.2,544.03 L1098.4,543.91 L1097.6,544.05 L1096.8,543.51 L1096.0,543.99 L1095.2,543.93 L1094.4,543.43 L1093.6,543.99 L1092.8,543.64 L1092.0,543.66 L1091.2,543.52 L1090.4,543.63 L1089.6,543.73 L1088.8,543.76 L1088.0,543.43 L1087.2,543.44 L1086.4,543.75 L1085.6,544.03 L1084.8,543.58 L1084.0,543.90 L1083.2,544.02 L1082.4,543.77 L1081.6,543.98 L1080.8,543.51 L1080.0,544.07 L1079.2,543.78 L1078.4,543.52 L1077.6,543.82 L1076.8,543.57 L1076.0,544.06 L1075.2,543.57 L1074.4,543.61 L1073.6,543.73 L1072.8,544.08 L1072.0,543.98 L1071.2,543.73 L1070.4,543.44 L1069.6,544.06 L1068.8,544.09 L1068.0,543.56 L1067.2,544.03 L1066.4,543.50 L1065.6,543.74 L1064.8,543.74 L1064.0,543.77 L1063.2,543.62 L1062.4,543.88 L1061.6,543.89 L1060.8,543.88 L1060.0,543.61 L1059.2,543.47 L1058.4,543.43 L1057.6,543.81 L1056.8,543.63 L1056.0,543.93 L1055.2,543.60 L1054.4,543.52 L1053.6,543.48 L1052.8,543.86 L1052.0,543.84 L1051.2,543.94 L1050.4,543.89 L1049.6,543.75 L1048.8,543.68 L1048.0,543.76 L1047.2,544.08 L1046.4,543.92 L1045.6,543.56 L1044.8,543.92 L1044.0,543.60 L1043.2,543.48 L1042.4,543.60 L1041.6,543.92 L1040.8,543.47 L1040.0,543.87 L1039.2,543.79 L1038.4,543.76 L1037.6,543.93 L1036.8,543.96 L1036.0,543.43 L1035.2,543.76 L1034.4,543.88 L1033.6,543.85 L1032.8,543.85 L1032.0,543.80 L1031.2,543.99 L1030.4,543.50 L1029.6,543.67 L1028.8,543.51 L1028.0,543.45 L1027.2,543.58 L1026.4,543.89 L1025.6,543.89 L1024.8,544.03 L1024.0,543.82 L1023.2,543.98 L1022.4,543.97 L1021.6,543.99 L1020.8,543.77 L1020.0,543.78 L1019.2,543.52 L1018.4,543.97 L1017.6,543.92 L1016.8,543.85 L1016.0,544.03 L1015.2,543.99 L1014.4,543.45 L1013.6,543.86 L1012.8,543.91 L1012.0,543.53 L1011.2,544.09 L1010.4,543.65 L1009.6,543.69 L1008.8,544.02 L1008.0,543.91 L1007.2,543.87 L1006.4,543.93 L1005.6,543.78 L1004.8,543.82 L1004.0,543.58 L1003.2,543.63 L1002.4,543.44 L1001.6,543.45 L1000.8,543.69 L1000.0,543.49 L999.2,543.60 L998.4,543.43 L997.6,543.77 L996.8,543.56 L996.0,543.76 L995.2,543.75 L994.4,543.68 L993.6,543.43 L992.8,543.67 L992.0,543.63 L991.2,544.08 L990.4,543.59 L989.6,543.79 L988.8,544.08 L988.0,544.07 L987.2,543.60 L986.4,543.73 L985.6,543.53 L984.8,543.74 L984.0,543.62 L983.2,543.59 L982.4,543.62 L981.6,543.88 L980.8,544.01 L980.0,543.99 L979.2,543.48 L978.4,543.54 L977.6,543.60 L976.8,543.93 L976.0,543.47 L975.2,543.51 L974.4,543.46 L973.6,543.66 L972.8,543.70 L972.0,543.85 L971.2,543.90 L970.4,543.99 L969.6,543.66 L968.8,544.09 L968.0,543.89 L967.2,543.77 L966.4,543.69 L965.6,543.99 L964.8,543.76 L964.0,543.72 L963.2,543.98 L962.4,543.50 L961.6,544.06 L960.8,543.75 L960.0,543.55 L959.2,543.80 L958.4,543.92 L957.6,543.44 L956.8,543.59 L956.0,543.44 L955.2,543.66 L954.4,543.55 L953.6,543.76 L952.8,543.62 L952.0,543.94 L951.2,543.63 L950.4,543.64 L949.6,543.56 L948.8,543.46 L948.0,543.53 L947.2,543.50 L946.4,543.59 L945.6,543.78 L944.8,543.51 L944.0,543.61 L943.2,544.05 L942.4,543.80 L941.6,543.65 L940.8,543.73 L940.0,544.01 L939.2,543.47 L938.4,544.00 L937.6,543.48 L936.8,543.97 L936.0,543.85 L935.2,544.06 L934.4,543.47 L933.6,543.71 L932.8,543.89 L932.0,543.46 L931.2,543.49 L930.4,543.90 L929.6,543.81 L928.8,544.05 L928.0,543.53 L927.2,543.60 L926.4,543.98 L925.6,544.04 L924.8,543.71 L924.0,543.51 L923.2,543.61 L922.4,543.95 L921.6,543.45 L920.8,543.60 L920.0,543.50 L919.2,544.08 L918.4,543.96 L917.6,544.09 L916.8,543.47 L916.0,543.77 L915.2,543.85 L914.4,544.70 L913.6,544.27 L912.8,544.84 L912.0,545.00 L911.2,544.28 L910.4,545.22 L909.6,544.68 L908.8,544.51 L908.0,544.71 L907.2,544.95 L906.4,544.83 L905.6,544.47 L904.8,545.37 L904.0,545.59 L903.2,544.91 L902.4,544.79 L901.6,545.54 L900.8,544.55 L900.0,544.08 L899.2,544.02 L898.4,543.52 L897.6,543.87 L896.8,543.91 L896.0,543.53 L895.2,544.03 L894.4,543.95 L893.6,543.88 L892.8,543.47 L892.0,543.59 L891.2,543.47 L890.4,543.72 L889.6,543.51 L888.8,543.52 L888.0,543.99 L887.2,544.06 L886.4,543.80 L885.6,543.60 L884.8,544.06 L884.0,544.02 L883.2,543.90 L882.4,544.06 L881.6,543.75 L880.8,543.78 L880.0,543.73 L879.2,543.89 L878.4,543.77 L877.6,543.77 L876.8,543.84 L876.0,543.72 L875.2,544.04 L874.4,543.94 L873.6,543.80 L872.8,543.77 L872.0,543.95 L871.2,543.61 L870.4,543.59 L869.6,543.80 L868.8,543.50 L868.0,543.95 L867.2,543.80 L866.4,543.77 L865.6,543.65 L864.8,543.80 L864.0,543.91 L863.2,543.74 L862.4,543.54 L861.6,543.96 L860.8,543.43 L860.0,543.55 L859.2,543.72 L858.4,543.44 L857.6,543.78 L856.8,543.78 L856.0,543.76 L855.2,544.04 L854.4,543.71 L853.6,544.04 L852.8,543.82 L852.0,543.73 L851.2,543.66 L850.4,544.04 L849.6,543.51 L848.8,543.71 L848.0,543.60 L847.2,543.82 L846.4,543.59 L845.6,543.62 L844.8,543.59 L844.0,543.57 L843.2,543.98 L842.4,544.01 L841.6,543.72 L840.8,544.06 L840.0,543.78 L839.2,543.86 L838.4,544.08 L837.6,543.43 L836.8,543.51 L836.0,543.80 L835.2,543.66 L834.4,543.87 L833.6,544.09 L832.8,543.98 L832.0,543.52 L831.2,543.97 L830.4,544.04 L829.6,543.53 L828.8,543.51 L828.0,543.54 L827.2,543.91 L826.4,544.06 L825.6,543.70 L824.8,543.69 L824.0,544.08 L823.2,543.97 L822.4,543.65 L821.6,543.96 L820.8,543.55 L820.0,543.75 L819.2,543.93 L818.4,543.95 L817.6,544.04 L816.8,543.87 L816.0,543.48 L815.2,543.96 L814.4,543.87 L813.6,543.75 L812.8,543.99 L812.0,544.03 L811.2,543.85 L810.4,543.56 L809.6,543.56 L808.8,543.58 L808.0,543.57 L807.2,543.67 L806.4,544.07 L805.6,544.09 L804.8,544.06 L804.0,543.73 L803.2,544.07 L802.4,543.89 L801.6,543.60 L800.8,543.61 L800.0,544.57 L799.2,544.57 L798.4,545.09 L797.6,545.34 L796.8,544.88 L796.0,545.69 L795.2,545.81 L794.4,545.79 L793.6,545.87 L792.8,546.08 L792.0,545.80 L791.2,544.88 L790.4,545.04 L789.6,545.75 L788.8,545.36 L788.0,545.74 L787.2,544.79 L786.4,545.10 L785.6,544.94 L784.8,545.62 L784.0,545.88 L783.2,546.07 L782.4,545.36 L781.6,544.57 L780.8,545.38 L780.0,544.76 L779.2,545.36 L778.4,546.02 L777.6,544.56 L776.8,544.78 L776.0,545.83 L775.2,544.94 L774.4,545.06 L773.6,544.69 L772.8,544.66 L772.0,545.29 L771.2,545.26 L770.4,546.09 L769.6,544.00 L768.8,543.51 L768.0,543.67 L767.2,543.66 L766.4,543.60 L765.6,543.53 L764.8,543.84 L764.0,544.02 L763.2,543.44 L762.4,543.67 L761.6,543.49 L760.8,543.53 L760.0,543.43 L759.2,543.46 L758.4,543.65 L757.6,543.53 L756.8,543.57 L756.0,543.47 L755.2,543.47 L754.4,543.85 L753.6,543.49 L752.8,543.69 L752.0,543.69 L751.2,543.96 L750.4,544.02 L749.6,543.95 L748.8,544.03 L748.0,543.46 L747.2,543.88 L746.4,543.84 L745.6,543.77 L744.8,543.89 L744.0,544.07 L743.2,543.81 L742.4,543.67 L741.6,543.71 L740.8,543.43 L740.0,543.60 L739.2,543.82 L738.4,543.75 L737.6,543.58 L736.8,543.58 L736.0,543.54 L735.2,543.53 L734.4,544.07 L733.6,544.02 L732.8,543.67 L732.0,543.71 L731.2,543.61 L730.4,544.01 L729.6,543.98 L728.8,544.02 L728.0,543.80 L727.2,543.73 L726.4,543.48 L725.6,544.01 L724.8,543.69 L724.0,543.59 L723.2,543.51 L722.4,543.94 L721.6,543.46 L720.8,543.50 L720.0,543.54 L719.2,543.74 L718.4,543.44 L717.6,543.88 L716.8,543.69 L716.0,543.62 L715.2,543.98 L714.4,544.10 L713.6,543.86 L712.8,543.90 L712.0,543.47 L711.2,543.87 L710.4,543.75 L709.6,544.06 L708.8,543.99 L708.0,543.73 L707.2,543.82 L706.4,543.83 L705.6,543.89 L704.8,543.64 L704.0,544.02 L703.2,543.81 L702.4,543.94 L701.6,543.88 L700.8,543.45 L700.0,543.83 L699.2,543.59 L698.4,544.03 L697.6,543.78 L696.8,543.57 L696.0,544.19 L695.2,543.69 L694.4,544.01 L693.6,544.11 L692.8,543.86 L692.0,543.89 L691.2,543.66 L690.4,543.98 L689.6,544.05 L688.8,543.70 L688.0,543.81 L687.2,543.90 L686.4,543.71 L685.6,543.79 L684.8,543.97 L684.0,543.63 L683.2,543.52 L682.4,543.53 L681.6,543.87 L680.8,543.75 L680.0,543.94 L679.2,543.90 L678.4,543.61 L677.6,544.07 L676.8,543.70 L676.0,543.56 L675.2,543.58 L674.4,543.69 L673.6,544.10 L672.8,543.51 L672.0,544.18 L671.2,543.77 L670.4,543.90 L669.6,544.16 L668.8,543.93 L668.0,543.64 L667.2,543.57 L666.4,544.08 L665.6,543.79 L664.8,543.55 L664.0,543.53 L663.2,543.79 L662.4,543.51 L661.6,543.85 L660.8,543.52 L660.0,543.67 L659.2,543.79 L658.4,543.47 L657.6,543.86 L656.8,543.53 L656.0,543.64 Z" fill="#6e9c8c"/></svg>
<svg class="s" width="1400" height="737" ><path d="M503.6,286.5 H634.4" stroke="#3a3a3a" stroke-width="1.2"/><circle cx="496.5" cy="286.5" r="7" fill="none" stroke="#5a5a5a" stroke-width="1.3"/></svg>
<svg class="s" width="1400" height="737" ><path d="M490.3,337.7 H589" stroke="#36c0a6" stroke-width="1.8"/><path d="M603,337.7 H634.4" stroke="#3a3a3a" stroke-width="1.2"/><circle cx="595.8" cy="337.7" r="6.8" fill="#000" stroke="#4a4a4a" stroke-width="1.3"/><circle cx="595.8" cy="337.7" r="1.1" fill="#40e0b8"/></svg>
<svg class="s" width="1400" height="737" ><path d="M490.3,388.9 H589" stroke="#36c0a6" stroke-width="1.8"/><path d="M603,388.9 H634.4" stroke="#3a3a3a" stroke-width="1.2"/><circle cx="595.8" cy="388.9" r="6.8" fill="#000" stroke="#4a4a4a" stroke-width="1.3"/><circle cx="595.8" cy="388.9" r="1.1" fill="#40e0b8"/></svg>
<svg class="s" width="1400" height="737" ><path d="M490.3,439.7 H589" stroke="#36c0a6" stroke-width="1.8"/><path d="M603,439.7 H634.4" stroke="#3a3a3a" stroke-width="1.2"/><circle cx="595.8" cy="439.7" r="6.8" fill="#000" stroke="#4a4a4a" stroke-width="1.3"/><circle cx="595.8" cy="439.7" r="1.1" fill="#40e0b8"/></svg>
<svg class="s" width="1400" height="737" ><path d="M490.3,490.9 H589" stroke="#36c0a6" stroke-width="1.8"/><path d="M603,490.9 H634.4" stroke="#3a3a3a" stroke-width="1.2"/><circle cx="595.8" cy="490.9" r="6.8" fill="#000" stroke="#4a4a4a" stroke-width="1.3"/><circle cx="595.8" cy="490.9" r="1.1" fill="#40e0b8"/></svg>
<svg class="s" width="1400" height="737" ><path d="M490.3,542.6 H589" stroke="#36c0a6" stroke-width="1.8"/><path d="M603,542.6 H634.4" stroke="#3a3a3a" stroke-width="1.2"/><circle cx="595.8" cy="542.6" r="6.8" fill="#000" stroke="#4a4a4a" stroke-width="1.3"/><circle cx="595.8" cy="542.6" r="1.1" fill="#40e0b8"/></svg>
<svg class="s" width="1400" height="737" ><g fill="none" stroke="#8a8a8a" stroke-width="1" stroke-linecap="round" stroke-linejoin="round">
<path d="M460.4,282.6 A2.5,2.5 0 0 1 465.4,282.6 V287 A2.5,2.5 0 0 1 460.4,287 Z"/>
<path d="M458.8,286.4 A4.1,4.1 0 0 0 467,286.4 M462.9,290.6 V293.6"/>
<path d="M457.4,280.6 L467.8,291.2"/></g>
<g fill="none" stroke="#e4e4e4" stroke-width="1.1" stroke-linecap="round" stroke-linejoin="round">
<ellipse cx="462.3" cy="336" rx="7.2" ry="2"/>
<path d="M455.1,336 V342 C455.1,343.2 458.3,344.2 462.3,344.2 C466.3,344.2 469.5,343.2 469.5,342 V336"/>
<path d="M458.8,338 V343.6 M462.4,338.2 V344 M466,338 V343.6"/>
<path d="M461,337 L469.6,331.4"/>
<path d="M463,382.6 Q464.8,381.8 466.6,382.6 Q468,383.4 467.4,385.2 L466.4,388 Q467,389.5 466.5,391 L465.5,394.6 Q464.9,396 463.3,395.8 L461.7,395.6 Q460.1,395 459.9,393.6 L462.4,384 Q462.6,383 463,382.6 Z"/>
<g fill="#e4e4e4" stroke="none"><circle cx="460.6" cy="383.5" r="0.8"/><circle cx="459.6" cy="386.1" r="0.8"/><circle cx="459" cy="388.6" r="0.8"/><circle cx="458.2" cy="391.3" r="0.8"/></g>
</g>
<g fill="none" stroke="#e4e4e4" stroke-width="1.1" stroke-linecap="round" stroke-linejoin="round">
<path d="M459.8,447.4 L459.2,441.0 Q458.4,437.5 458.4,435.6 Q458.4,432.8 462.2,432.8 Q466,432.8 466,435.6 Q466,437.5 465.2,441.0 L464.6,447.4 Z"/><g fill="#e4e4e4" stroke="none"><circle cx="456.7" cy="436.0" r="0.75"/><circle cx="456.7" cy="439.0" r="0.75"/><circle cx="456.7" cy="441.9" r="0.75"/><circle cx="467.7" cy="436.0" r="0.75"/><circle cx="467.7" cy="439.0" r="0.75"/><circle cx="467.7" cy="441.9" r="0.75"/></g>
<path d="M459.8,498.6 L459.2,492.2 Q458.4,488.7 458.4,486.8 Q458.4,484.0 462.2,484.0 Q466,484.0 466,486.8 Q466,488.7 465.2,492.2 L464.6,498.6 Z"/><g fill="#e4e4e4" stroke="none"><circle cx="456.7" cy="487.2" r="0.75"/><circle cx="456.7" cy="490.2" r="0.75"/><circle cx="456.7" cy="493.1" r="0.75"/><circle cx="467.7" cy="487.2" r="0.75"/><circle cx="467.7" cy="490.2" r="0.75"/><circle cx="467.7" cy="493.1" r="0.75"/></g>
<path d="M458.8,545.4 V537.4 L468,535.2 V543.4"/>
<ellipse cx="457.2" cy="545.6" rx="1.7" ry="1.4"/><ellipse cx="466.4" cy="543.6" rx="1.7" ry="1.4"/>
</g>
<circle cx="471.7" cy="449.4" r="5.3" fill="#7a7a7a" stroke="#000" stroke-width="1"/>
<circle cx="471.7" cy="500.6" r="5.3" fill="#7a7a7a" stroke="#000" stroke-width="1"/></svg>
<div class="a" style="left:469.8px;top:445.2px;white-space:nowrap;font-size:7px;font-weight:bold;color:#f0f0f0">1</div>
<div class="a" style="left:469.8px;top:496.4px;white-space:nowrap;font-size:7px;font-weight:bold;color:#f0f0f0">2</div>
<svg class="s" width="1400" height="737" ><path d="M626,663.4 H1140" stroke="#3a3a3a" stroke-width="1.1"/><path d="M560.7,663.4 H626" stroke="#f4f4f4" stroke-width="1.5"/><circle cx="626.3" cy="663.4" r="3.5" fill="#fafafa"/></svg>
<div class="a" style="left:560.2px;top:670.6px;white-space:nowrap;font-size:8.5px;color:#8a8a8a;letter-spacing:0.25px">0:30</div>
<div class="a" style="left:1124.5px;top:670.6px;white-space:nowrap;font-size:8.5px;color:#8a8a8a;letter-spacing:0.25px">-4</div>
<div class="a" style="left:626.8px;top:697.8px;white-space:nowrap;font-size:7.4px;font-weight:bold;color:#e8e8e8;line-height:7px;letter-spacing:0.1px">1 2</div>
<div class="a" style="left:626.8px;top:705.6px;white-space:nowrap;font-size:7.4px;font-weight:bold;color:#e8e8e8;line-height:7px;letter-spacing:0.1px">3 4</div>
<svg class="s" width="1400" height="737" ><g fill="none" stroke="#e0e0e0" stroke-width="1.1" stroke-linecap="round" stroke-linejoin="round">
<path d="M698.8,709.6 L703.4,699.8 Q704.2,698.6 705,699.8 L709.6,709.6 Q710.4,712 708.2,712 H700.2 Q698,712 698.8,709.6 Z M699.2,709 H709.2 M704.4,708.4 L709.6,701"/>
<path d="M708.4,700.4 L711,700.2 L709.6,702.4" stroke-width="0.9"/>
</g>
<g fill="#f2f2f2">
<path d="M767.8,705.4 L777,700.2 V710.7 Z M776.4,705.4 L785.8,700.2 V710.7 Z"/>
<path d="M940,705.5 L931,700.2 V710.8 Z M931.4,705.5 L922,700.2 V710.8 Z"/>
</g>
<circle cx="853.6" cy="705.6" r="19.5" fill="#fcfcfc"/>
<path d="M849.4,699 L861.2,705.6 L849.4,712.2 Z" fill="#050505"/>
<g fill="none" stroke="#e0e0e0" stroke-width="1.1" stroke-linecap="round" stroke-linejoin="round">
<circle cx="1071.7" cy="709.1" r="1.85"/><circle cx="1071.7" cy="701.8" r="1.85"/>
<path d="M1073.1,703.1 L1080.6,710.6 M1073.1,707.8 L1080.6,700.4"/>
</g></svg>
<svg class="s" width="1400" height="737" ><g transform="translate(-345.4,27.4)"><g fill="none" stroke="#e8e8e8" stroke-linecap="round" stroke-linejoin="round">
<path d="M1342,674.6 V684.4 M1342,681.2 Q1344.6,679.6 1346,680.8 Q1346.8,682.6 1342.2,684.4" stroke-width="1.2"/>
<path d="M1350.5,671.2 L1350.1,678.4 M1352.7,670.8 L1352.3,678 M1348.3,674.4 L1354.8,673.2 M1348.3,676.9 L1354.8,675.7" stroke-width="1.3"/>
</g></g></svg>
<div class="a" style="left:840px;top:731.5px;width:27px;height:8px;border-radius:4px;background:#1a1a1a"></div>
<div class="a" style="left:1134.3px;top:234.3px;width:249.5px;height:526px;border-radius:30px;background:linear-gradient(90deg,#283034 0%,#46555e 20%,#8eafc0 45%,#7e9bab 62%,#4a5961 85%,#283034 100%)"></div>
<div class="a" style="left:1140.4px;top:240.8px;width:236.4px;height:514px;border-radius:25px;background:#000"></div>
<svg class="s" width="1400" height="737" ><g fill="none" stroke="#e6e6e6" stroke-width="1.2" stroke-linecap="round" stroke-linejoin="round">
<path d="M1148.8,293.6 L1154.2,297.2 L1159.6,293.6"/>
<path d="M1357,291.2 H1368.8 M1357,295.1 H1368.8 M1357,299 H1368.8"/></g></svg>
<div class="a" style="left:1213.8px;top:289.2px;white-space:nowrap;font-size:10.2px;font-weight:bold;color:#efefef;letter-spacing:0.03px">A Real Bad Dream</div>
<div class="a" style="left:1140.4px;top:314.6px;width:33.5px;height:28.6px;background:#282828"></div>
<div class="a" style="left:1175.4px;top:314.6px;width:33.5px;height:28.6px;background:#282828"></div>
<div class="a" style="left:1210.4px;top:314.6px;width:33.5px;height:28.6px;background:#282828"></div>
<div class="a" style="left:1245.4px;top:314.6px;width:33.5px;height:28.6px;background:#fafafa"></div>
<div class="a" style="left:1280.4px;top:314.6px;width:33.5px;height:28.6px;background:#282828"></div>
<div class="a" style="left:1315.4px;top:314.6px;width:33.5px;height:28.6px;background:#282828"></div>
<div class="a" style="left:1350.4px;top:314.6px;width:26.4px;height:28.6px;background:#282828"></div>
<div class="a" style="left:1140.4px;top:314.6px;width:1.6px;height:28.6px;background:#8a8a8a"></div>
<div class="a" style="left:1280.4px;top:314.6px;width:1.6px;height:28.6px;background:#8a8a8a"></div>
<div class="a" style="left:1146.8px;top:322.1px;white-space:nowrap;color:#9a9a9a;font-weight:bold;font-size:12.6px;line-height:16px;letter-spacing:-0.6px">Gm</div>
<div class="a" style="left:1284.4px;top:322.1px;white-space:nowrap;color:#f4f4f4;font-weight:bold;font-size:12.6px;line-height:16px;letter-spacing:-0.6px">Cm<span style="font-size:9.4px;position:relative;top:-4.6px;font-weight:normal;letter-spacing:0;margin-left:0.6px">7</span></div>
<svg class="s" width="1400" height="737" ><path d="M1191.5,375.9 H1289.4" stroke="#2fb8a0" stroke-width="1.8"/><path d="M1302.8,375.9 H1334" stroke="#383838" stroke-width="1.3"/><circle cx="1296" cy="375.9" r="6.8" fill="#000" stroke="#454545" stroke-width="1.3"/><circle cx="1296" cy="375.9" r="1.1" fill="#40e0b0"/><g fill="#5a5a5a"><circle cx="1353.8" cy="375.9" r="0.8"/><circle cx="1357.8" cy="375.9" r="0.8"/><circle cx="1361.8" cy="375.9" r="0.8"/></g></svg>
<svg class="s" width="1400" height="737" ><path d="M1191.5,419.6 H1289.4" stroke="#2fb8a0" stroke-width="1.8"/><path d="M1302.8,419.6 H1334" stroke="#383838" stroke-width="1.3"/><circle cx="1296" cy="419.6" r="6.8" fill="#000" stroke="#454545" stroke-width="1.3"/><circle cx="1296" cy="419.6" r="1.1" fill="#40e0b0"/><g fill="#5a5a5a"><circle cx="1353.8" cy="419.6" r="0.8"/><circle cx="1357.8" cy="419.6" r="0.8"/><circle cx="1361.8" cy="419.6" r="0.8"/></g></svg>
<svg class="s" width="1400" height="737" ><path d="M1191.5,462.9 H1225.4" stroke="#2fb8a0" stroke-width="1.8"/><path d="M1238.8,462.9 H1334" stroke="#383838" stroke-width="1.3"/><circle cx="1232" cy="462.9" r="6.8" fill="#000" stroke="#2aa878" stroke-width="1.3"/><circle cx="1232" cy="462.9" r="1.1" fill="#40e0b0"/><g fill="#5a5a5a"><circle cx="1353.8" cy="462.9" r="0.8"/><circle cx="1357.8" cy="462.9" r="0.8"/><circle cx="1361.8" cy="462.9" r="0.8"/></g></svg>
<svg class="s" width="1400" height="737" ><path d="M1191.5,506.4 H1289.4" stroke="#2fb8a0" stroke-width="1.8"/><path d="M1302.8,506.4 H1334" stroke="#383838" stroke-width="1.3"/><circle cx="1296" cy="506.4" r="6.8" fill="#000" stroke="#454545" stroke-width="1.3"/><circle cx="1296" cy="506.4" r="1.1" fill="#40e0b0"/><g fill="#5a5a5a"><circle cx="1353.8" cy="506.4" r="0.8"/><circle cx="1357.8" cy="506.4" r="0.8"/><circle cx="1361.8" cy="506.4" r="0.8"/></g></svg>
<svg class="s" width="1400" height="737" ><path d="M1191.5,550 H1289.4" stroke="#2fb8a0" stroke-width="1.8"/><path d="M1302.8,550 H1334" stroke="#383838" stroke-width="1.3"/><circle cx="1296" cy="550" r="6.8" fill="#000" stroke="#454545" stroke-width="1.3"/><circle cx="1296" cy="550" r="1.1" fill="#40e0b0"/><g fill="#5a5a5a"><circle cx="1353.8" cy="550" r="0.8"/><circle cx="1357.8" cy="550" r="0.8"/><circle cx="1361.8" cy="550" r="0.8"/></g></svg>
<svg class="s" width="1400" height="737" ><path d="M1220.5,425.3 H1243.8 A10,10 0 0 1 1253.8,435.3 V438.1 A10,10 0 0 1 1243.8,448.1 H1235.2 L1232,452 L1228.8,448.1 H1220.5 A10,10 0 0 1 1210.5,438.1 V435.3 A10,10 0 0 1 1220.5,425.3 Z" fill="#fbfbfb"/></svg>
<div class="a" style="left:1226.6px;top:430.8px;white-space:nowrap;font-size:10px;font-weight:bold;color:#111;letter-spacing:-0.1px">26</div>
<div class="a" style="left:1191.4px;top:475.8px;white-space:nowrap;font-size:9.8px;color:#c4c4c4;letter-spacing:-0.1px">Lead Guitar</div>
<svg class="s" width="1400" height="737" ><g fill="none" stroke="#e4e4e4" stroke-width="1.1" stroke-linecap="round" stroke-linejoin="round">
<g transform="translate(1163.8,376.2) scale(1.08) translate(-462.9,-389)"><path d="M463,382.6 Q464.8,381.8 466.6,382.6 Q468,383.4 467.4,385.2 L466.4,388 Q467,389.5 466.5,391 L465.5,394.6 Q464.9,396 463.3,395.8 L461.7,395.6 Q460.1,395 459.9,393.6 L462.4,384 Q462.6,383 463,382.6 Z"/>
<g fill="#e4e4e4" stroke="none"><circle cx="460.6" cy="383.5" r="0.8"/><circle cx="459.6" cy="386.1" r="0.8"/><circle cx="459" cy="388.6" r="0.8"/><circle cx="458.2" cy="391.3" r="0.8"/></g></g>
<path d="M1157.6,421.3 V415 Q1157.6,412.9 1159.7,412.9 H1163.2 Q1164.6,412.9 1165.3,414.2 L1165.9,415.2 Q1166.5,416.3 1167.8,416.3 H1169 Q1170.6,416.3 1170.6,417.9 V421.3 Z"/>
<path d="M1158.2,421.3 V425 Q1158.2,426.2 1159.4,426.2 H1168.8 Q1170,426.2 1170,425 V421.3"/>
<path d="M1160.5,421.6 V423.6 M1163,421.6 V423.6 M1165.5,421.6 V423.6 M1168,421.6 V423.6" stroke-width="1.3"/>
<g transform="translate(1164,463.3) scale(1.15,0.95) translate(-462.2,-440.1)"><path d="M459.8,447.4 L459.2,441.0 Q458.4,437.5 458.4,435.6 Q458.4,432.8 462.2,432.8 Q466,432.8 466,435.6 Q466,437.5 465.2,441.0 L464.6,447.4 Z"/><g fill="#e4e4e4" stroke="none"><circle cx="456.7" cy="436.0" r="0.75"/><circle cx="456.7" cy="439.0" r="0.75"/><circle cx="456.7" cy="441.9" r="0.75"/><circle cx="467.7" cy="436.0" r="0.75"/><circle cx="467.7" cy="439.0" r="0.75"/><circle cx="467.7" cy="441.9" r="0.75"/></g>
</g>
<g transform="translate(1164,506.7) scale(1.15,0.95) translate(-462.2,-440.1)"><path d="M459.8,447.4 L459.2,441.0 Q458.4,437.5 458.4,435.6 Q458.4,432.8 462.2,432.8 Q466,432.8 466,435.6 Q466,437.5 465.2,441.0 L464.6,447.4 Z"/><g fill="#e4e4e4" stroke="none"><circle cx="456.7" cy="436.0" r="0.75"/><circle cx="456.7" cy="439.0" r="0.75"/><circle cx="456.7" cy="441.9" r="0.75"/><circle cx="467.7" cy="436.0" r="0.75"/><circle cx="467.7" cy="439.0" r="0.75"/><circle cx="467.7" cy="441.9" r="0.75"/></g>
</g>
<path d="M1160.4,554 V546 L1169.8,543.6 V552"/>
<ellipse cx="1158.8" cy="554.2" rx="1.7" ry="1.4"/><ellipse cx="1168.2" cy="552.2" rx="1.7" ry="1.4"/>
</g>
<circle cx="1173.5" cy="472.6" r="5.2" fill="#7a7a7a" stroke="#000" stroke-width="1"/>
<circle cx="1173.7" cy="516.1" r="5.2" fill="#7a7a7a" stroke="#000" stroke-width="1"/></svg>
<div class="a" style="left:1171.6px;top:468.6px;white-space:nowrap;font-size:6.5px;font-weight:bold;color:#f0f0f0">1</div>
<div class="a" style="left:1171.8px;top:512.1px;white-space:nowrap;font-size:6.5px;font-weight:bold;color:#f0f0f0">2</div>
<svg class="s" width="1400" height="737" ><path d="M1173,636 H1362" stroke="#3a3a3a" stroke-width="1.3"/><path d="M1155,636 H1173" stroke="#f4f4f4" stroke-width="1.6"/><circle cx="1173.3" cy="636" r="3.4" fill="#fafafa"/></svg>
<div class="a" style="left:1154.4px;top:643.4px;white-space:nowrap;font-size:8.8px;color:#9a9a9a;letter-spacing:0.2px">0:11</div>
<div class="a" style="left:1341.2px;top:643.4px;white-space:nowrap;font-size:8.8px;color:#9a9a9a;letter-spacing:0.1px">-2:06</div>
<svg class="s" width="1400" height="737" ><g fill="none" stroke="#e0e0e0" stroke-width="1.1" stroke-linecap="round" stroke-linejoin="round">
<path d="M1163,682 L1167.8,672.2 Q1168.6,671 1169.4,672.2 L1174.2,682 Q1175,684.6 1172.6,684.6 H1164.6 Q1162.2,684.6 1163,682 Z M1163.4,681.2 H1173.8 M1168.8,680.6 L1174.2,673"/>
<path d="M1172.8,672.4 L1175.2,672.2 L1174,674.4" stroke-width="0.9"/>
</g>
<g fill="#f2f2f2">
<path d="M1202.5,677.6 L1211.4,672.2 V683.2 Z M1211,677.6 L1220.2,672.2 V683.2 Z"/>
<path d="M1314.5,677.6 L1305.6,672.2 V683.2 Z M1306,677.6 L1296.6,672.2 V683.2 Z"/>
</g>
<circle cx="1258.6" cy="677.5" r="19.5" fill="#fcfcfc"/>
<rect x="1254.2" y="671" width="3.6" height="13" rx="1.2" fill="#060606"/><rect x="1259.8" y="671" width="3.6" height="13" rx="1.2" fill="#060606"/>
<rect x="1244" y="703.8" width="28.8" height="29.6" rx="6" fill="#1c1c1c"/>
<g fill="none" stroke="#e0e0e0" stroke-width="1.1" stroke-linecap="round" stroke-linejoin="round">
<path d="M1186,724.6 V714.2 Q1186,712.9 1187.3,712.9 H1197.6 Q1198.9,712.9 1198.9,714.2 V720.6 Q1198.9,721.9 1197.6,721.9 H1189.2 Z"/>
<path d="M1318,717.2 V716 Q1318,714.6 1319.4,714.6 H1331 Q1332.2,714.6 1332.2,716 V719.6 M1318,720.2 V723.4 Q1318,724.8 1319.4,724.8 H1331 Q1332.2,724.8 1332.2,723.4 V722.8 M1322.6,719 H1328.2 L1326.4,717.2 M1325.2,712.8 L1327,714.6 L1325.2,716.4"/>
</g>
<g fill="#e8e8e8"><circle cx="1190.6" cy="716.6" r="1.05"/><circle cx="1193.8" cy="716.6" r="1.05"/></g><path d="M1191.4,716.8 Q1191.4,718.6 1190,719.2 M1194.6,716.8 Q1194.6,718.6 1193.2,719.2" stroke="#e8e8e8" stroke-width="0.9" fill="none"/>
<g fill="none" stroke="#33d38e" stroke-width="1.3" stroke-linecap="round">
<path d="M1255.2,724.6 V711.8 M1258.6,716.2 H1265 M1258.6,719.4 H1265 M1258.6,722.6 H1265"/>
<path d="M1253,715.4 L1256,714 M1253,718.4 L1256,717 M1253,721.4 L1256,720" stroke-width="1.6"/>
<ellipse cx="1253.6" cy="723.8" rx="1.6" ry="1.1"/>
</g></svg>
<svg class="s" width="1400" height="737" ><g fill="none" stroke="#e8e8e8" stroke-linecap="round" stroke-linejoin="round">
<path d="M1342,674.6 V684.4 M1342,681.2 Q1344.6,679.6 1346,680.8 Q1346.8,682.6 1342.2,684.4" stroke-width="1.2"/>
<path d="M1350.5,671.2 L1350.1,678.4 M1352.7,670.8 L1352.3,678 M1348.3,674.4 L1354.8,673.2 M1348.3,676.9 L1354.8,675.7" stroke-width="1.3"/>
</g></svg>
</body></html>
